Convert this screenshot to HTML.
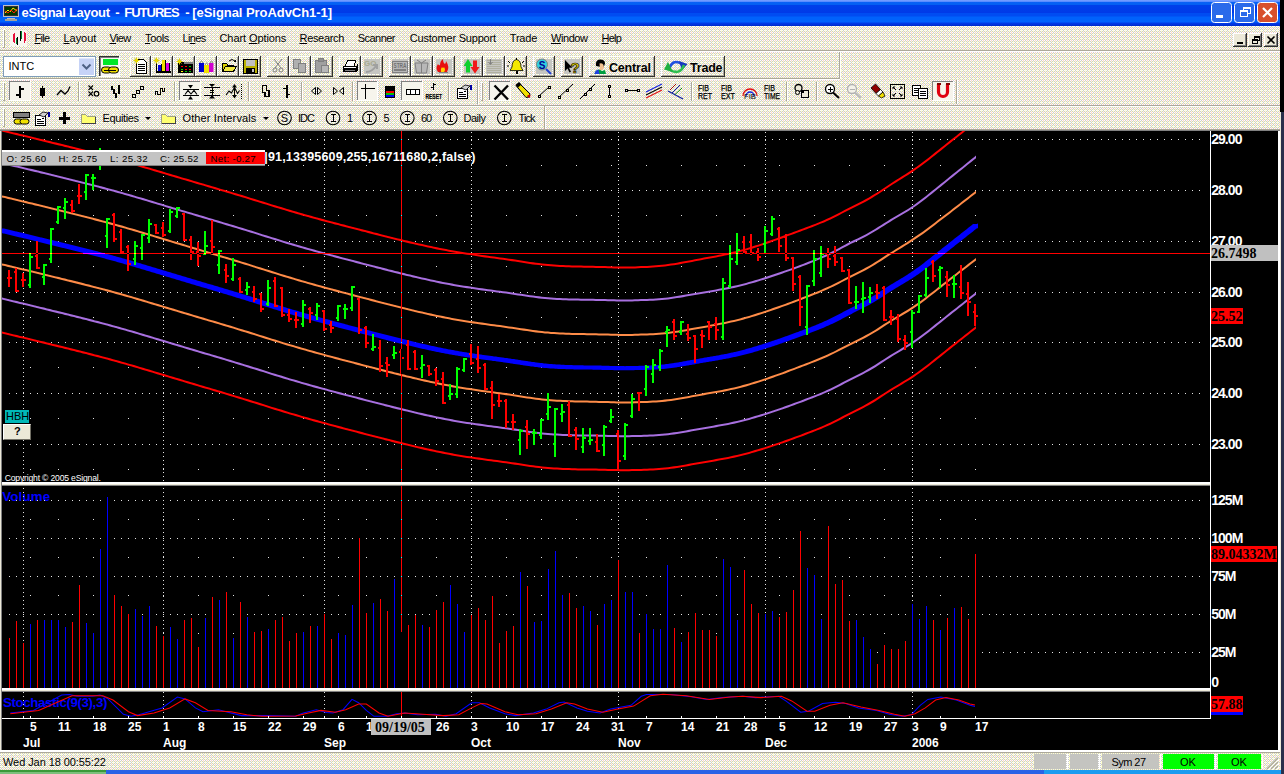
<!DOCTYPE html><html><head><meta charset="utf-8"><title>eSignal</title><style>
*{box-sizing:border-box;margin:0;padding:0}
html,body{width:1284px;height:774px;overflow:hidden;background:#ece9d8}
body{position:relative;font-family:"Liberation Sans",sans-serif;font-size:11px;color:#000}
.abs{position:absolute}
.t{position:absolute;white-space:nowrap;line-height:1}
.axl{position:absolute;left:1211.200px;color:#fff;font-weight:bold;font-size:14px;line-height:13.33px;letter-spacing:-0.95px;white-space:nowrap}
.dl{position:absolute;color:#fff;font-weight:bold;font-size:12px;line-height:12px;white-space:nowrap}
.mi{position:absolute;top:32px;font-size:11px;line-height:13px;white-space:nowrap}
.mi u{text-decoration:underline}
</style></head><body>
<svg class="abs" style="left:0;top:26px" width="1280" height="748" shape-rendering="crispEdges"><defs><pattern id="dz" width="4" height="4" patternUnits="userSpaceOnUse"><rect width="4" height="4" fill="#ccc"/><path d="M0 0h1v1h-1zM2 0h1v1h-1zM0 2h1v1h-1zM2 2h1v1h-1z" fill="#fff"/><path d="M1 0h1v2h-1zM1 3h1v1h-1zM3 1h1v1h-1zM3 3h1v1h-1z" fill="#ffc"/><path d="M3 2h1v1h-1z" fill="#fcc"/></pattern></defs><rect width="1280" height="748" fill="url(#dz)"/></svg>
<div class="abs" style="left:1280px;top:0;width:4px;height:112px;background:#000"></div>
<div class="abs" style="left:1281px;top:112px;width:3px;height:662px;background:#2a2f4a"></div>
<div class="abs" style="left:0;top:0;width:1280px;height:26px;background:linear-gradient(#7aa2ff 0,#5a8cff 1.500px,#0862f6 2px,#0460f2 4.500px,#0040ea 5.500px,#003ae8 12.500px,#004cf2 13.500px,#004cf2 16px,#0062fc 17px,#0062fc 22px,#003ceb 23px,#0030d8 25px,#0028c8 26px)"></div>
<div class="t" style="left:21.5px;top:6px;color:#fff;font-weight:bold;font-size:13px;letter-spacing:-0.305px">eSignal Layout</div>
<div class="t" style="left:115.3px;top:6px;color:#fff;font-weight:bold;font-size:13px;">-</div>
<div class="t" style="left:124.3px;top:6px;color:#fff;font-weight:bold;font-size:13px;letter-spacing:-1.015px">FUTURES</div>
<div class="t" style="left:185.2px;top:6px;color:#fff;font-weight:bold;font-size:13px;">-</div>
<div class="t" style="left:192.3px;top:6px;color:#fff;font-weight:bold;font-size:13px;letter-spacing:-0.058px">[eSignal ProAdvCh1-1]</div>
<div class="abs" style="left:0;top:50px;width:1280px;height:1px;background:#aca899"></div>
<div class="abs" style="left:0;top:51px;width:1280px;height:1px;background:#fff"></div>
<div class="mi" style="left:34.5px;letter-spacing:-0.676px"><u>F</u>ile</div>
<div class="mi" style="left:63.5px;letter-spacing:-0.046px"><u>L</u>ayout</div>
<div class="mi" style="left:109.5px;letter-spacing:-0.615px"><u>V</u>iew</div>
<div class="mi" style="left:145px;letter-spacing:-0.345px"><u>T</u>ools</div>
<div class="mi" style="left:182.5px;letter-spacing:-0.625px">Li<u>n</u>es</div>
<div class="mi" style="left:219.5px;letter-spacing:-0.089px">Chart <u>O</u>ptions</div>
<div class="mi" style="left:299.5px;letter-spacing:-0.326px"><u>R</u>esearch</div>
<div class="mi" style="left:357.8px;letter-spacing:-0.545px">Scanner</div>
<div class="mi" style="left:409.8px;letter-spacing:-0.205px">Customer Support</div>
<div class="mi" style="left:509.8px;letter-spacing:-0.207px">Trade</div>
<div class="mi" style="left:551px;letter-spacing:-0.425px"><u>W</u>indow</div>
<div class="mi" style="left:601.5px;letter-spacing:-0.775px"><u>H</u>elp</div>
<svg width="1284" height="131" viewBox="0 0 1284 131" style="position:absolute;left:0;top:0" shape-rendering="crispEdges">
<rect x="0" y="78" width="840" height="1" fill="#aca899"/>
<rect x="0" y="79" width="840" height="1" fill="#fff"/>
<rect x="839" y="52" width="1" height="27" fill="#aca899"/>
<rect x="840" y="52" width="1" height="27" fill="#fff"/>
<rect x="0" y="105" width="1280" height="1" fill="#aca899"/>
<rect x="0" y="106" width="1280" height="1" fill="#fff"/>
<rect x="956" y="80" width="1" height="24" fill="#aca899"/>
<rect x="957" y="80" width="1" height="24" fill="#fff"/>
<rect x="544" y="106" width="1" height="24" fill="#aca899"/>
<rect x="545" y="106" width="1" height="24" fill="#fff"/>
<rect x="0" y="129" width="1280" height="1" fill="#aca899"/>
<rect x="3" y="29" width="1" height="19" fill="#fff"/>
<rect x="4" y="29" width="1" height="19" fill="#aca899"/>
<rect x="3" y="29" width="2" height="1" fill="#fff"/>
<rect x="3" y="47" width="2" height="1" fill="#aca899"/>
<rect x="10" y="30" width="17" height="16" fill="#f8f6f0"/>
<rect x="13" y="34" width="2" height="8" fill="#e8103c"/>
<rect x="13.5" y="33" width="1" height="10" fill="#e8103c"/>
<rect x="16" y="38" width="2" height="6" fill="#008830"/>
<rect x="16.5" y="37" width="1" height="8" fill="#000"/>
<rect x="19.5" y="31" width="2" height="8" fill="#008830"/>
<rect x="20" y="31" width="1" height="10" fill="#000"/>
<rect x="23.5" y="33" width="2" height="8" fill="#e8103c"/>
<rect x="24" y="32" width="1" height="11" fill="#e8103c"/>
<rect x="3.5" y="56.5" width="92" height="20" fill="#fff" stroke="#7f9db9"/>
<rect x="79" y="58" width="15" height="17" fill="#c6d3f7"/>
<rect x="79" y="58" width="15" height="1" fill="#dfe7fb"/>
<path d="M82.5 64.5l4 4l4-4" fill="none" stroke="#4d6185" stroke-width="2" shape-rendering="auto" />
<rect x="99" y="56" width="21" height="21" fill="#f8f6f0"/>
<rect x="99" y="56" width="21" height="1" fill="#303030"/>
<rect x="99" y="56" width="1" height="21" fill="#303030"/>
<rect x="100" y="57" width="19" height="1" fill="#808080"/>
<rect x="100" y="57" width="1" height="19" fill="#808080"/>
<rect x="119" y="56" width="1" height="21" fill="#fff"/>
<rect x="99" y="76" width="21" height="1" fill="#fff"/>
<rect x="103" y="59" width="15" height="6" fill="#00e828"/>
<path d="M101.5 70a3 3 0 0 1 3-3h4a3 3 0 0 1 0 6h-4a3 3 0 0 1-3-3z" fill="#f0e000" stroke="#000" stroke-width="1" shape-rendering="auto" />
<path d="M108.5 70a3 3 0 0 1 3-3h4a3 3 0 0 1 0 6h-4a3 3 0 0 1-3-3z" fill="#f0e000" stroke="#000" stroke-width="1" shape-rendering="auto" />
<rect x="104" y="69.5" width="12" height="1" fill="#000"/>
<rect x="130" y="56" width="21" height="1" fill="#fff"/>
<rect x="130" y="56" width="1" height="21" fill="#fff"/>
<rect x="150" y="56" width="1" height="21" fill="#303030"/>
<rect x="130" y="76" width="21" height="1" fill="#303030"/>
<rect x="149" y="57" width="1" height="19" fill="#aca899"/>
<rect x="131" y="75" width="19" height="1" fill="#aca899"/>
<rect x="151" y="56" width="22" height="1" fill="#fff"/>
<rect x="151" y="56" width="1" height="21" fill="#fff"/>
<rect x="172" y="56" width="1" height="21" fill="#303030"/>
<rect x="151" y="76" width="22" height="1" fill="#303030"/>
<rect x="171" y="57" width="1" height="19" fill="#aca899"/>
<rect x="152" y="75" width="20" height="1" fill="#aca899"/>
<rect x="173" y="56" width="22" height="1" fill="#fff"/>
<rect x="173" y="56" width="1" height="21" fill="#fff"/>
<rect x="194" y="56" width="1" height="21" fill="#303030"/>
<rect x="173" y="76" width="22" height="1" fill="#303030"/>
<rect x="193" y="57" width="1" height="19" fill="#aca899"/>
<rect x="174" y="75" width="20" height="1" fill="#aca899"/>
<rect x="195" y="56" width="22" height="1" fill="#fff"/>
<rect x="195" y="56" width="1" height="21" fill="#fff"/>
<rect x="216" y="56" width="1" height="21" fill="#303030"/>
<rect x="195" y="76" width="22" height="1" fill="#303030"/>
<rect x="215" y="57" width="1" height="19" fill="#aca899"/>
<rect x="196" y="75" width="20" height="1" fill="#aca899"/>
<rect x="217" y="56" width="22" height="1" fill="#fff"/>
<rect x="217" y="56" width="1" height="21" fill="#fff"/>
<rect x="238" y="56" width="1" height="21" fill="#303030"/>
<rect x="217" y="76" width="22" height="1" fill="#303030"/>
<rect x="237" y="57" width="1" height="19" fill="#aca899"/>
<rect x="218" y="75" width="20" height="1" fill="#aca899"/>
<rect x="239" y="56" width="22" height="1" fill="#fff"/>
<rect x="239" y="56" width="1" height="21" fill="#fff"/>
<rect x="260" y="56" width="1" height="21" fill="#303030"/>
<rect x="239" y="76" width="22" height="1" fill="#303030"/>
<rect x="259" y="57" width="1" height="19" fill="#aca899"/>
<rect x="240" y="75" width="20" height="1" fill="#aca899"/>
<rect x="267" y="56" width="22" height="1" fill="#fff"/>
<rect x="267" y="56" width="1" height="21" fill="#fff"/>
<rect x="288" y="56" width="1" height="21" fill="#303030"/>
<rect x="267" y="76" width="22" height="1" fill="#303030"/>
<rect x="287" y="57" width="1" height="19" fill="#aca899"/>
<rect x="268" y="75" width="20" height="1" fill="#aca899"/>
<rect x="289" y="56" width="22" height="1" fill="#fff"/>
<rect x="289" y="56" width="1" height="21" fill="#fff"/>
<rect x="310" y="56" width="1" height="21" fill="#303030"/>
<rect x="289" y="76" width="22" height="1" fill="#303030"/>
<rect x="309" y="57" width="1" height="19" fill="#aca899"/>
<rect x="290" y="75" width="20" height="1" fill="#aca899"/>
<rect x="311" y="56" width="22" height="1" fill="#fff"/>
<rect x="311" y="56" width="1" height="21" fill="#fff"/>
<rect x="332" y="56" width="1" height="21" fill="#303030"/>
<rect x="311" y="76" width="22" height="1" fill="#303030"/>
<rect x="331" y="57" width="1" height="19" fill="#aca899"/>
<rect x="312" y="75" width="20" height="1" fill="#aca899"/>
<rect x="339" y="56" width="22" height="1" fill="#fff"/>
<rect x="339" y="56" width="1" height="21" fill="#fff"/>
<rect x="360" y="56" width="1" height="21" fill="#303030"/>
<rect x="339" y="76" width="22" height="1" fill="#303030"/>
<rect x="359" y="57" width="1" height="19" fill="#aca899"/>
<rect x="340" y="75" width="20" height="1" fill="#aca899"/>
<rect x="361" y="56" width="22" height="1" fill="#fff"/>
<rect x="361" y="56" width="1" height="21" fill="#fff"/>
<rect x="382" y="56" width="1" height="21" fill="#303030"/>
<rect x="361" y="76" width="22" height="1" fill="#303030"/>
<rect x="381" y="57" width="1" height="19" fill="#aca899"/>
<rect x="362" y="75" width="20" height="1" fill="#aca899"/>
<rect x="389" y="56" width="22" height="1" fill="#fff"/>
<rect x="389" y="56" width="1" height="21" fill="#fff"/>
<rect x="410" y="56" width="1" height="21" fill="#303030"/>
<rect x="389" y="76" width="22" height="1" fill="#303030"/>
<rect x="409" y="57" width="1" height="19" fill="#aca899"/>
<rect x="390" y="75" width="20" height="1" fill="#aca899"/>
<rect x="411" y="56" width="22" height="1" fill="#fff"/>
<rect x="411" y="56" width="1" height="21" fill="#fff"/>
<rect x="432" y="56" width="1" height="21" fill="#303030"/>
<rect x="411" y="76" width="22" height="1" fill="#303030"/>
<rect x="431" y="57" width="1" height="19" fill="#aca899"/>
<rect x="412" y="75" width="20" height="1" fill="#aca899"/>
<rect x="433" y="56" width="22" height="1" fill="#fff"/>
<rect x="433" y="56" width="1" height="21" fill="#fff"/>
<rect x="454" y="56" width="1" height="21" fill="#303030"/>
<rect x="433" y="76" width="22" height="1" fill="#303030"/>
<rect x="453" y="57" width="1" height="19" fill="#aca899"/>
<rect x="434" y="75" width="20" height="1" fill="#aca899"/>
<rect x="461" y="56" width="22" height="1" fill="#fff"/>
<rect x="461" y="56" width="1" height="21" fill="#fff"/>
<rect x="482" y="56" width="1" height="21" fill="#303030"/>
<rect x="461" y="76" width="22" height="1" fill="#303030"/>
<rect x="481" y="57" width="1" height="19" fill="#aca899"/>
<rect x="462" y="75" width="20" height="1" fill="#aca899"/>
<rect x="483" y="56" width="22" height="1" fill="#fff"/>
<rect x="483" y="56" width="1" height="21" fill="#fff"/>
<rect x="504" y="56" width="1" height="21" fill="#303030"/>
<rect x="483" y="76" width="22" height="1" fill="#303030"/>
<rect x="503" y="57" width="1" height="19" fill="#aca899"/>
<rect x="484" y="75" width="20" height="1" fill="#aca899"/>
<rect x="505" y="56" width="22" height="1" fill="#fff"/>
<rect x="505" y="56" width="1" height="21" fill="#fff"/>
<rect x="526" y="56" width="1" height="21" fill="#303030"/>
<rect x="505" y="76" width="22" height="1" fill="#303030"/>
<rect x="525" y="57" width="1" height="19" fill="#aca899"/>
<rect x="506" y="75" width="20" height="1" fill="#aca899"/>
<rect x="533" y="56" width="22" height="1" fill="#fff"/>
<rect x="533" y="56" width="1" height="21" fill="#fff"/>
<rect x="554" y="56" width="1" height="21" fill="#303030"/>
<rect x="533" y="76" width="22" height="1" fill="#303030"/>
<rect x="553" y="57" width="1" height="19" fill="#aca899"/>
<rect x="534" y="75" width="20" height="1" fill="#aca899"/>
<rect x="561" y="56" width="22" height="1" fill="#fff"/>
<rect x="561" y="56" width="1" height="21" fill="#fff"/>
<rect x="582" y="56" width="1" height="21" fill="#303030"/>
<rect x="561" y="76" width="22" height="1" fill="#303030"/>
<rect x="581" y="57" width="1" height="19" fill="#aca899"/>
<rect x="562" y="75" width="20" height="1" fill="#aca899"/>
<rect x="589" y="56" width="66" height="1" fill="#fff"/>
<rect x="589" y="56" width="1" height="21" fill="#fff"/>
<rect x="654" y="56" width="1" height="21" fill="#303030"/>
<rect x="589" y="76" width="66" height="1" fill="#303030"/>
<rect x="653" y="57" width="1" height="19" fill="#aca899"/>
<rect x="590" y="75" width="64" height="1" fill="#aca899"/>
<rect x="661" y="56" width="64" height="1" fill="#fff"/>
<rect x="661" y="56" width="1" height="21" fill="#fff"/>
<rect x="724" y="56" width="1" height="21" fill="#303030"/>
<rect x="661" y="76" width="64" height="1" fill="#303030"/>
<rect x="723" y="57" width="1" height="19" fill="#aca899"/>
<rect x="662" y="75" width="62" height="1" fill="#aca899"/>
<rect x="364" y="59" width="16" height="15" fill="#c6c6c2"/>
<rect x="392" y="59" width="16" height="15" fill="#c6c6c2"/>
<rect x="414" y="59" width="16" height="15" fill="#c6c6c2"/>
<rect x="436" y="59" width="16" height="15" fill="#c6c6c2"/>
<rect x="464" y="59" width="16" height="15" fill="#c6c6c2"/>
<rect x="486" y="59" width="16" height="15" fill="#c6c6c2"/>
<rect x="536" y="59" width="16" height="15" fill="#c6c6c2"/>
<rect x="564" y="59" width="16" height="15" fill="#c6c6c2"/>
<path d="M136.5 59.5h7l3 3v11h-10z" fill="#fff" stroke="#000" stroke-width="1" />
<rect x="138" y="64" width="7" height="1" fill="#000"/>
<rect x="138" y="66" width="7" height="1" fill="#000"/>
<rect x="138" y="68" width="7" height="1" fill="#000"/>
<rect x="138" y="70" width="7" height="1" fill="#000"/>
<line x1="136.5" y1="60.5" x2="133.5" y2="60.5" stroke="#e8d800" stroke-width="1" shape-rendering="auto"/>
<line x1="136.5" y1="60.5" x2="139.5" y2="60.5" stroke="#e8d800" stroke-width="1" shape-rendering="auto"/>
<line x1="136.5" y1="60.5" x2="136.5" y2="57.5" stroke="#e8d800" stroke-width="1" shape-rendering="auto"/>
<line x1="136.5" y1="60.5" x2="136.5" y2="63.5" stroke="#e8d800" stroke-width="1" shape-rendering="auto"/>
<line x1="136.5" y1="60.5" x2="134.5" y2="58.5" stroke="#e8d800" stroke-width="1" shape-rendering="auto"/>
<line x1="136.5" y1="60.5" x2="138.5" y2="62.5" stroke="#e8d800" stroke-width="1" shape-rendering="auto"/>
<line x1="136.5" y1="60.5" x2="134.5" y2="62.5" stroke="#e8d800" stroke-width="1" shape-rendering="auto"/>
<line x1="136.5" y1="60.5" x2="138.5" y2="58.5" stroke="#e8d800" stroke-width="1" shape-rendering="auto"/>
<rect x="156" y="61" width="1" height="12" fill="#000"/>
<rect x="156" y="72" width="15" height="1" fill="#000"/>
<rect x="157" y="71" width="14" height="1" fill="#000"/>
<rect x="158" y="65" width="3" height="6" fill="#0000e0"/>
<rect x="162" y="60" width="3" height="11" fill="#f0e000"/>
<rect x="166" y="63" width="3" height="8" fill="#e000e0"/>
<rect x="161" y="64" width="1" height="7" fill="#000"/>
<rect x="165" y="60" width="1" height="11" fill="#000"/>
<rect x="169" y="63" width="1" height="8" fill="#000"/>
<line x1="156.5" y1="60.5" x2="153.5" y2="60.5" stroke="#e8d800" stroke-width="1" shape-rendering="auto"/>
<line x1="156.5" y1="60.5" x2="159.5" y2="60.5" stroke="#e8d800" stroke-width="1" shape-rendering="auto"/>
<line x1="156.5" y1="60.5" x2="156.5" y2="57.5" stroke="#e8d800" stroke-width="1" shape-rendering="auto"/>
<line x1="156.5" y1="60.5" x2="156.5" y2="63.5" stroke="#e8d800" stroke-width="1" shape-rendering="auto"/>
<line x1="156.5" y1="60.5" x2="154.5" y2="58.5" stroke="#e8d800" stroke-width="1" shape-rendering="auto"/>
<line x1="156.5" y1="60.5" x2="158.5" y2="62.5" stroke="#e8d800" stroke-width="1" shape-rendering="auto"/>
<line x1="156.5" y1="60.5" x2="154.5" y2="62.5" stroke="#e8d800" stroke-width="1" shape-rendering="auto"/>
<line x1="156.5" y1="60.5" x2="158.5" y2="58.5" stroke="#e8d800" stroke-width="1" shape-rendering="auto"/>
<rect x="178" y="62" width="15" height="11" fill="#000"/>
<rect x="184" y="62" width="9" height="2" fill="#808080"/>
<rect x="181" y="66" width="2" height="1" fill="#f00"/>
<rect x="185" y="66" width="2" height="1" fill="#f00"/>
<rect x="189" y="66" width="2" height="1" fill="#0c0"/>
<rect x="181" y="69" width="2" height="1" fill="#0c0"/>
<rect x="185" y="69" width="2" height="1" fill="#f00"/>
<rect x="189" y="69" width="2" height="1" fill="#f00"/>
<rect x="181" y="71" width="2" height="1" fill="#ff0"/>
<rect x="185" y="71" width="2" height="1" fill="#0c0"/>
<rect x="189" y="71" width="2" height="1" fill="#0c0"/>
<line x1="179.5" y1="61.5" x2="176.5" y2="61.5" stroke="#e8d800" stroke-width="1" shape-rendering="auto"/>
<line x1="179.5" y1="61.5" x2="182.5" y2="61.5" stroke="#e8d800" stroke-width="1" shape-rendering="auto"/>
<line x1="179.5" y1="61.5" x2="179.5" y2="58.5" stroke="#e8d800" stroke-width="1" shape-rendering="auto"/>
<line x1="179.5" y1="61.5" x2="179.5" y2="64.5" stroke="#e8d800" stroke-width="1" shape-rendering="auto"/>
<line x1="179.5" y1="61.5" x2="177.5" y2="59.5" stroke="#e8d800" stroke-width="1" shape-rendering="auto"/>
<line x1="179.5" y1="61.5" x2="181.5" y2="63.5" stroke="#e8d800" stroke-width="1" shape-rendering="auto"/>
<line x1="179.5" y1="61.5" x2="177.5" y2="63.5" stroke="#e8d800" stroke-width="1" shape-rendering="auto"/>
<line x1="179.5" y1="61.5" x2="181.5" y2="59.5" stroke="#e8d800" stroke-width="1" shape-rendering="auto"/>
<path d="M199 63h5v9h-5z" fill="#0000d0" shape-rendering="auto" />
<path d="M204 65h5v8h-5z" fill="#f0e000" shape-rendering="auto" />
<path d="M209 63h4.5v9h-4.5z" fill="#d000d0" shape-rendering="auto" />
<path d="M200 63q1.5-4 3 0M205 65q1.5-4 3 0M210 63q1.5-4 3 0" fill="none" stroke="#808080" stroke-width="1" shape-rendering="auto" />
<path d="M222.5 71.5v-8h4l1 1.500h6v2" fill="#d8d000" stroke="#000" stroke-width="1" />
<path d="M222.5 71.5l3-5h11l-3 5z" fill="#f0e840" stroke="#000" stroke-width="1" />
<path d="M229 61q3-3 6 0" fill="none" stroke="#000" stroke-width="1" shape-rendering="auto" />
<path d="M233.500 61.500h2v-2" fill="none" stroke="#000" stroke-width="1" />
<rect x="243.5" y="59.5" width="14" height="14" fill="#b8b000" stroke="#000"/>
<rect x="246" y="60" width="9" height="6" fill="#c0c0c0"/>
<rect x="246" y="68" width="9" height="5" fill="#000"/>
<rect x="252" y="69" width="2" height="3" fill="#c0c0c0"/>
<line x1="274" y1="59" x2="281" y2="68" stroke="#808080" stroke-width="1" shape-rendering="auto"/>
<line x1="282" y1="59" x2="275" y2="68" stroke="#808080" stroke-width="1" shape-rendering="auto"/>
<circle cx="275" cy="70" r="2" fill="none" stroke="#808080" shape-rendering="auto"/>
<circle cx="281" cy="70" r="2" fill="none" stroke="#808080" shape-rendering="auto"/>
<rect x="293.5" y="59.5" width="7" height="9" fill="#b0b0b0" stroke="#808080"/>
<rect x="298.5" y="63.5" width="7" height="9" fill="#b0b0b0" stroke="#808080"/>
<rect x="315.5" y="60.5" width="11" height="12" fill="#a0a0a0" stroke="#808080"/>
<rect x="318.5" y="58.5" width="5" height="3" fill="#909090" stroke="#808080"/>
<rect x="321.5" y="65.5" width="7" height="7" fill="#b8b8b8" stroke="#808080"/>
<path d="M345 66l3-6h8l-2 6z" fill="#fff" stroke="#000" stroke-width="1" />
<rect x="343" y="66" width="14" height="6" fill="#000"/>
<rect x="344" y="67" width="12" height="1" fill="#fff"/>
<rect x="345" y="70" width="10" height="1" fill="#808080"/>
<rect x="357" y="64" width="1" height="7" fill="#000"/>
<text x="364" y="66" font-family="Liberation Sans" font-size="8" font-weight="bold" fill="#a8a890">GO</text>
<path d="M366 72q6 0 10-6M373 65h4v4" fill="none" stroke="#a0a0a0" stroke-width="2" shape-rendering="auto" />
<rect x="392.5" y="61.5" width="15" height="11" fill="#b8b8b8" stroke="#808080"/>
<rect x="394" y="69" width="12" height="2" fill="#808080"/>
<text x="393.5" y="67.500" font-family="Liberation Sans" font-size="7" font-weight="bold" fill="#707070" textLength="13" lengthAdjust="spacingAndGlyphs">STRA</text>
<path d="M415 63h13l-1.500 10h-10z" fill="#b8b8b8" stroke="#808080" stroke-width="1" shape-rendering="auto" />
<path d="M421.500 63v10M417 60l4.500 3l4.500-3" fill="none" stroke="#808080" stroke-width="1" shape-rendering="auto" />
<path d="M438 72q-3-4 0-8q1 2 2 1q0-4 3-6q0 4 2 5q1-1 1-3q4 6 1 11z" fill="#e81010" shape-rendering="auto" />
<path d="M441 72q-1-3 1-5q1 2 2 0q2 3 0 5z" fill="#ffd000" shape-rendering="auto" />
<rect x="439" y="72" width="9" height="1" fill="#808080"/>
<path d="M463.500 66l4.500-7l4.500 7h-2.500v6.500h-4v-6.500z" fill="#10d030" shape-rendering="auto" />
<path d="M470.500 67h2.500v-6.500h4v6.500h2.500l-4.500 6.500z" fill="#f01818" shape-rendering="auto" />
<rect x="487" y="60" width="14" height="1" fill="#b0b0a0"/>
<rect x="487" y="62" width="14" height="1" fill="#b0b0a0"/>
<rect x="487" y="64" width="14" height="1" fill="#b0b0a0"/>
<rect x="487" y="66" width="14" height="1" fill="#b0b0a0"/>
<rect x="487" y="68" width="14" height="1" fill="#b0b0a0"/>
<rect x="487" y="70" width="14" height="1" fill="#b0b0a0"/>
<rect x="487" y="72" width="14" height="1" fill="#b0b0a0"/>
<path d="M490.500 59v5M488.500 62l2 2.500l2-2.500" fill="none" stroke="#808080" stroke-width="1" shape-rendering="auto" />
<path d="M516.500 59.500q-4.500 1-4.500 7.500l-2 3.500h13l-2-3.500q0-6.500-4.500-7.500z" fill="#f4e800" stroke="#000" stroke-width="0.8" shape-rendering="auto" />
<rect x="515.5" y="71" width="2" height="2.5" fill="#000"/>
<rect x="516" y="58" width="1" height="2" fill="#000"/>
<line x1="508" y1="61" x2="510" y2="63" stroke="#000" stroke-width="1" shape-rendering="auto"/>
<line x1="524" y1="61" x2="522" y2="63" stroke="#000" stroke-width="1" shape-rendering="auto"/>
<line x1="507" y1="66" x2="509" y2="66" stroke="#000" stroke-width="1" shape-rendering="auto"/>
<line x1="523" y1="66" x2="525" y2="66" stroke="#000" stroke-width="1" shape-rendering="auto"/>
<circle cx="542" cy="64.500" r="5.500" fill="#30d0e0" stroke="#808080" shape-rendering="auto"/>
<text x="538.700" y="68.500" font-family="Liberation Sans" font-size="10" font-weight="bold" fill="#000090">S</text>
<line x1="546" y1="69" x2="551" y2="74" stroke="#2040d0" stroke-width="2" shape-rendering="auto"/>
<path d="M565 60v11l2.500-2.500l2 4l1.500-.8l-2-4h3.500z" fill="#000" shape-rendering="auto" />
<text x="570.500" y="73" font-family="Liberation Sans" font-size="15" font-weight="bold" fill="#f0e000" stroke="#000" stroke-width=".7">?</text>
<path d="M596 66q-1-6 4-6.500q5 0 5 4l-1.500 4z" fill="#000" shape-rendering="auto" />
<path d="M599.500 63.500q3-1 4 1.500l.5 3l-2 2h-2z" fill="#f0c090" shape-rendering="auto" />
<path d="M594.500 74q.5-4 5-4.500l2.500 1.500l3-1l1 4z" fill="#00a040" shape-rendering="auto" />
<path d="M594.500 74q.5-4 4-4.500l1 4.500z" fill="#2040e0" shape-rendering="auto" />
<path d="M669 70Q672 58 682 64" fill="none" stroke="#2050e0" stroke-width="2.6" shape-rendering="auto" />
<path d="M679 61l8.500 3l-5.500 6.500z" fill="#1838c0" shape-rendering="auto" />
<path d="M684 65Q680 76 669 69.500" fill="none" stroke="#30c050" stroke-width="2.6" shape-rendering="auto" />
<path d="M673 72l-9-2.500l4-7.500z" fill="#20b040" shape-rendering="auto" />
<rect x="3" y="82" width="1" height="19" fill="#fff"/>
<rect x="4" y="82" width="1" height="19" fill="#aca899"/>
<rect x="3" y="82" width="2" height="1" fill="#fff"/>
<rect x="3" y="100" width="2" height="1" fill="#aca899"/>
<rect x="9" y="81" width="22" height="20" fill="#f6f4ec"/>
<rect x="9" y="81" width="22" height="1" fill="#808080"/>
<rect x="9" y="81" width="1" height="20" fill="#808080"/>
<rect x="30" y="81" width="1" height="20" fill="#fff"/>
<rect x="9" y="100" width="22" height="1" fill="#fff"/>
<rect x="19" y="86" width="2" height="12" fill="#000"/>
<rect x="21" y="88" width="3" height="2" fill="#000"/>
<rect x="16" y="94" width="3" height="2" fill="#000"/>
<rect x="40" y="88" width="5" height="8" fill="#000"/>
<rect x="42" y="86" width="1" height="12" fill="#000"/>
<path d="M57 95l4-4.500l4 3.500l3-3l2-4.500" fill="none" stroke="#000" stroke-width="1.3" shape-rendering="auto" />
<rect x="78" y="82" width="1" height="19" fill="#aca899"/>
<rect x="79" y="82" width="1" height="19" fill="#fff"/>
<path d="M88.5 85.5l4.500 4.500M93.0 85.5l-4.500 4.500" fill="none" stroke="#000" stroke-width="1.1" shape-rendering="auto" />
<path d="M88.5 91.5l4.500 4.500M93.0 91.5l-4.500 4.500" fill="none" stroke="#000" stroke-width="1.1" shape-rendering="auto" />
<circle cx="96.500" cy="93.700" r="2.300" fill="none" stroke="#000" stroke-width="1.200" shape-rendering="auto"/>
<rect x="111" y="86" width="2" height="4" fill="#000"/>
<rect x="113" y="89" width="2" height="5" fill="#000"/>
<rect x="115" y="93" width="2" height="5" fill="#000"/>
<rect x="118" y="85" width="2" height="9" fill="#000"/>
<rect x="132.5" y="94.5" width="3" height="3" fill="none" stroke="#000"/>
<rect x="136.5" y="90.5" width="3" height="3" fill="none" stroke="#000"/>
<rect x="140.5" y="86.5" width="3" height="3" fill="none" stroke="#000"/>
<path d="M155.500 94.500v-3h2v3h2.500v-6h2.500v3h2v-4" fill="none" stroke="#000" stroke-width="1" />
<rect x="174" y="82" width="1" height="19" fill="#aca899"/>
<rect x="175" y="82" width="1" height="19" fill="#fff"/>
<rect x="179" y="81" width="22" height="20" fill="#f6f4ec"/>
<rect x="179" y="81" width="22" height="1" fill="#808080"/>
<rect x="179" y="81" width="1" height="20" fill="#808080"/>
<rect x="200" y="81" width="1" height="20" fill="#fff"/>
<rect x="179" y="100" width="22" height="1" fill="#fff"/>
<rect x="183" y="89" width="16" height="1" fill="#000"/>
<rect x="183" y="95" width="16" height="1" fill="#000"/>
<path d="M185 94.500l3-4l3 3.500l3-3.500l3 4" fill="none" stroke="#000" stroke-width="1.1" shape-rendering="auto" />
<path d="M188 85h5l-2.500 3.500zM188 99.500h5l-2.500-3.500z" fill="#000" shape-rendering="auto" />
<rect x="204" y="87" width="16" height="1" fill="#000"/>
<rect x="204" y="95" width="16" height="1" fill="#000"/>
<rect x="211.5" y="87" width="1" height="8" fill="#000"/>
<path d="M209 84h6l-3 3zM209 98.500h6l-3-3.500z" fill="#000" shape-rendering="auto" />
<rect x="210" y="90" width="4" height="1" fill="#000"/>
<rect x="210" y="92" width="4" height="1" fill="#000"/>
<path d="M226 95l3-4l2.500 2l3-5.500l3 6l2-3" fill="none" stroke="#000" stroke-width="1.1" shape-rendering="auto" />
<path d="M232 87.500h5l-2.500-3.500zM232 95h5l-2.500 3.500z" fill="#000" shape-rendering="auto" />
<rect x="234" y="87" width="1" height="8" fill="#000"/>
<rect x="241" y="84" width="1" height="1" fill="#000"/>
<rect x="241" y="86" width="1" height="1" fill="#000"/>
<rect x="241" y="88" width="1" height="1" fill="#000"/>
<rect x="241" y="90" width="1" height="1" fill="#000"/>
<rect x="241" y="92" width="1" height="1" fill="#000"/>
<rect x="241" y="94" width="1" height="1" fill="#000"/>
<rect x="241" y="96" width="1" height="1" fill="#000"/>
<rect x="241" y="98" width="1" height="1" fill="#000"/>
<rect x="248" y="82" width="1" height="19" fill="#aca899"/>
<rect x="249" y="82" width="1" height="19" fill="#fff"/>
<path d="M262.500 85.500h4v5h2.500v6h-4v-4h-2.500z" fill="none" stroke="#000" stroke-width="1.3" />
<rect x="286" y="85" width="2" height="13" fill="#000"/>
<rect x="283" y="88" width="3" height="1" fill="#000"/>
<rect x="288" y="94" width="2" height="1" fill="#000"/>
<rect x="301" y="82" width="1" height="19" fill="#aca899"/>
<rect x="302" y="82" width="1" height="19" fill="#fff"/>
<path d="M311.500 91l4-3.500v7zM321.500 91l-4-3.500v7z" fill="none" stroke="#000" stroke-width="1" shape-rendering="auto" />
<path d="M333.500 87.500l4 3.500l-4 3.500zM343.500 87.500l-4 3.500l4 3.500z" fill="none" stroke="#000" stroke-width="1" shape-rendering="auto" />
<rect x="352" y="82" width="1" height="19" fill="#aca899"/>
<rect x="353" y="82" width="1" height="19" fill="#fff"/>
<rect x="357" y="81" width="21" height="20" fill="#f6f4ec"/>
<rect x="357" y="81" width="21" height="1" fill="#808080"/>
<rect x="357" y="81" width="1" height="20" fill="#808080"/>
<rect x="377" y="81" width="1" height="20" fill="#fff"/>
<rect x="357" y="100" width="21" height="1" fill="#fff"/>
<rect x="365" y="84" width="1" height="15" fill="#000"/>
<rect x="361" y="88" width="14" height="1" fill="#000"/>
<rect x="385" y="86" width="10" height="12" fill="#000"/>
<rect x="386" y="91" width="8" height="2" fill="#f00000"/>
<rect x="386" y="93" width="8" height="2" fill="#00c000"/>
<rect x="386" y="95" width="8" height="2" fill="#0000f0"/>
<rect x="401" y="81" width="22" height="20" fill="#f6f4ec"/>
<rect x="401" y="81" width="22" height="1" fill="#808080"/>
<rect x="401" y="81" width="1" height="20" fill="#808080"/>
<rect x="422" y="81" width="1" height="20" fill="#fff"/>
<rect x="401" y="100" width="22" height="1" fill="#fff"/>
<rect x="406.5" y="89.5" width="13" height="5" fill="#fff" stroke="#000"/>
<rect x="410" y="89" width="1" height="6" fill="#000"/>
<rect x="415" y="89" width="1" height="6" fill="#000"/>
<rect x="433" y="83" width="1" height="7" fill="#000"/>
<rect x="434" y="84" width="2" height="1" fill="#000"/>
<rect x="431" y="87" width="2" height="1" fill="#000"/>
<text x="425.500" y="98.500" font-family="Liberation Sans" font-size="7" font-weight="bold" fill="#000" stroke="#000" stroke-width=".2" textLength="16.500" lengthAdjust="spacingAndGlyphs">RESET</text>
<rect x="448" y="82" width="1" height="19" fill="#aca899"/>
<rect x="449" y="82" width="1" height="19" fill="#fff"/>
<rect x="457.5" y="88.5" width="10" height="10" fill="#fff" stroke="#000"/>
<rect x="459" y="92" width="4" height="1" fill="#000"/>
<rect x="459" y="94" width="7" height="1" fill="#000"/>
<rect x="459" y="96" width="7" height="1" fill="#000"/>
<rect x="464" y="91" width="2" height="1" fill="#000"/>
<path d="M461 88l4-3l5 1l-4 4z" fill="#d0d0d0" stroke="#000" stroke-width="0.8" shape-rendering="auto" />
<rect x="470" y="85" width="2" height="5" fill="#0000a0"/>
<rect x="477" y="80" width="1" height="24" fill="#aca899"/>
<rect x="478" y="80" width="1" height="24" fill="#fff"/>
<rect x="481" y="82" width="1" height="19" fill="#fff"/>
<rect x="482" y="82" width="1" height="19" fill="#aca899"/>
<rect x="481" y="82" width="2" height="1" fill="#fff"/>
<rect x="481" y="100" width="2" height="1" fill="#aca899"/>
<rect x="489" y="81" width="22" height="20" fill="#f6f4ec"/>
<rect x="489" y="81" width="22" height="1" fill="#808080"/>
<rect x="489" y="81" width="1" height="20" fill="#808080"/>
<rect x="510" y="81" width="1" height="20" fill="#fff"/>
<rect x="489" y="100" width="22" height="1" fill="#fff"/>
<path d="M494.500 85.500l13.500 14M508 85.500l-13.500 14" fill="none" stroke="#000" stroke-width="2.4" shape-rendering="auto" />
<path d="M516 85.500l3-2.500l11 11l-1 3l-3 .5z" fill="#f0e000" stroke="#000" stroke-width="1" shape-rendering="auto" />
<path d="M515.500 85l3.500-3l2.500 2.500l-3.500 3z" fill="#000" shape-rendering="auto" />
<path d="M527.500 96l2.500-1l-.5 2.500z" fill="#c00000" stroke="#c00000" stroke-width="1" shape-rendering="auto" />
<line x1="539" y1="96" x2="549" y2="87" stroke="#000" stroke-width="1" shape-rendering="auto"/>
<rect x="538.5" y="95.5" width="2" height="2" fill="#ece9d8" stroke="#000"/>
<rect x="548.5" y="86.5" width="2" height="2" fill="#ece9d8" stroke="#000"/>
<line x1="558" y1="98" x2="573" y2="84" stroke="#000" stroke-width="1" shape-rendering="auto"/>
<rect x="558.5" y="96.5" width="2" height="2" fill="#ece9d8" stroke="#000"/>
<rect x="566.5" y="89.5" width="2" height="2" fill="#ece9d8" stroke="#000"/>
<line x1="580" y1="99" x2="595" y2="84" stroke="#000" stroke-width="1" shape-rendering="auto"/>
<rect x="584.5" y="93.5" width="2" height="2" fill="#ece9d8" stroke="#000"/>
<rect x="589.5" y="88.5" width="2" height="2" fill="#ece9d8" stroke="#000"/>
<rect x="609" y="86" width="1" height="11" fill="#000"/>
<rect x="608.5" y="85.5" width="2" height="2" fill="#ece9d8" stroke="#000"/>
<rect x="608.5" y="95.5" width="2" height="2" fill="#ece9d8" stroke="#000"/>
<rect x="626" y="90" width="13" height="1" fill="#000"/>
<rect x="625.5" y="89.5" width="2" height="2" fill="#ece9d8" stroke="#000"/>
<rect x="637.5" y="89.5" width="2" height="2" fill="#ece9d8" stroke="#000"/>
<line x1="646" y1="92" x2="662" y2="84" stroke="#1020e0" stroke-width="1.2" shape-rendering="auto"/>
<line x1="646" y1="95" x2="662" y2="87" stroke="#000" stroke-width="1.2" shape-rendering="auto"/>
<line x1="646" y1="98" x2="662" y2="90" stroke="#e01010" stroke-width="1.2" shape-rendering="auto"/>
<line x1="668" y1="91" x2="683" y2="99" stroke="#1020a0" stroke-width="1.2" shape-rendering="auto"/>
<line x1="672" y1="93" x2="680" y2="85" stroke="#1020a0" stroke-width="1" shape-rendering="auto"/>
<line x1="675" y1="94.5" x2="682" y2="88" stroke="#108010" stroke-width="1" shape-rendering="auto"/>
<line x1="670" y1="90" x2="676" y2="84" stroke="#a01010" stroke-width="1" shape-rendering="auto"/>
<rect x="691" y="82" width="1" height="19" fill="#aca899"/>
<rect x="692" y="82" width="1" height="19" fill="#fff"/>
<text x="698" y="90.500" font-family="Liberation Sans" font-size="8.500" fill="#000" stroke="#000" stroke-width=".25" textLength="11" lengthAdjust="spacingAndGlyphs" shape-rendering="auto">FIB</text>
<text x="698" y="98.500" font-family="Liberation Sans" font-size="8.500" fill="#000" stroke="#000" stroke-width=".25" textLength="14" lengthAdjust="spacingAndGlyphs" shape-rendering="auto">RET</text>
<text x="721" y="90.500" font-family="Liberation Sans" font-size="8.500" fill="#000" stroke="#000" stroke-width=".25" textLength="11" lengthAdjust="spacingAndGlyphs" shape-rendering="auto">FIB</text>
<text x="721" y="98.500" font-family="Liberation Sans" font-size="8.500" fill="#000" stroke="#000" stroke-width=".25" textLength="14" lengthAdjust="spacingAndGlyphs" shape-rendering="auto">EXT</text>
<path d="M743 96a7 7 0 0 1 14 0" fill="none" stroke="#e01010" stroke-width="1.3" shape-rendering="auto" />
<path d="M746 96a4 4 0 0 1 8 0" fill="none" stroke="#1020e0" stroke-width="1.3" shape-rendering="auto" />
<text x="744" y="99" font-family="Liberation Sans" font-size="8" fill="#000" textLength="12" lengthAdjust="spacingAndGlyphs">FIB</text>
<text x="764" y="90.500" font-family="Liberation Sans" font-size="8.500" fill="#000" stroke="#000" stroke-width=".25" textLength="11" lengthAdjust="spacingAndGlyphs" shape-rendering="auto">FIB</text>
<text x="764" y="98.500" font-family="Liberation Sans" font-size="8.500" fill="#000" stroke="#000" stroke-width=".25" textLength="16" lengthAdjust="spacingAndGlyphs" shape-rendering="auto">TIME</text>
<rect x="786" y="82" width="1" height="19" fill="#aca899"/>
<rect x="787" y="82" width="1" height="19" fill="#fff"/>
<circle cx="798.500" cy="88" r="3.500" fill="#ece9d8" stroke="#000" stroke-width="1.300" shape-rendering="auto"/>
<rect x="801.5" y="90.5" width="7" height="7" fill="#ece9d8" stroke="#000"/>
<rect x="802" y="91" width="2" height="2" fill="#000"/>
<circle cx="797.500" cy="92.500" r="2" fill="#ece9d8" stroke="#000" shape-rendering="auto"/>
<rect x="816" y="82" width="1" height="19" fill="#aca899"/>
<rect x="817" y="82" width="1" height="19" fill="#fff"/>
<circle cx="830" cy="89" r="4.500" fill="#fff" stroke="#000" stroke-width="1.300" shape-rendering="auto"/>
<rect x="828" y="89" width="5" height="1" fill="#000"/>
<rect x="830" y="87" width="1" height="5" fill="#000"/>
<line x1="833" y1="92.5" x2="839" y2="98" stroke="#000" stroke-width="2" shape-rendering="auto"/>
<circle cx="852" cy="89" r="4.500" fill="#f4f2ea" stroke="#b0b0b0" stroke-width="1.300" shape-rendering="auto"/>
<rect x="850" y="89" width="5" height="1" fill="#b0b0b0"/>
<line x1="855" y1="92.5" x2="861" y2="98" stroke="#b8b8b8" stroke-width="2" shape-rendering="auto"/>
<path d="M871 88l4.500-4l5 5.500l-4.500 4z" fill="#900000" stroke="#000" stroke-width="0.8" shape-rendering="auto" />
<path d="M876 93.500l4.500-4l2.500 2.500l-4.500 4z" fill="#fff" stroke="#000" stroke-width="0.8" shape-rendering="auto" />
<path d="M878.500 96l4.500-4l2 4l-3.500 2z" fill="#f0e000" stroke="#000" stroke-width="0.8" shape-rendering="auto" />
<rect x="890.5" y="84.5" width="14" height="14" fill="none" stroke="#000"/>
<path d="M893 87l3 3M893 87h2M893 87v2" fill="none" stroke="#000" stroke-width="1" shape-rendering="auto" />
<path d="M902 87l-3 3M902 87h-2M902 87v2" fill="none" stroke="#000" stroke-width="1" shape-rendering="auto" />
<path d="M893 96l3 -3M893 96h2M893 96v-2" fill="none" stroke="#000" stroke-width="1" shape-rendering="auto" />
<path d="M902 96l-3 -3M902 96h-2M902 96v-2" fill="none" stroke="#000" stroke-width="1" shape-rendering="auto" />
<path d="M912.500 85.500h8v10h-8z" fill="#fff" stroke="#000" stroke-width="1" />
<path d="M918.500 88.500h9v10h-9z" fill="#fff" stroke="#000" stroke-width="1" />
<rect x="920" y="91" width="6" height="1" fill="#000"/>
<rect x="920" y="93" width="6" height="1" fill="#000"/>
<rect x="920" y="95" width="6" height="1" fill="#000"/>
<rect x="914" y="88" width="4" height="1" fill="#000"/>
<rect x="914" y="90" width="4" height="1" fill="#000"/>
<rect x="914" y="92" width="4" height="1" fill="#000"/>
<rect x="932" y="81" width="22" height="20" fill="#f6f4ec"/>
<rect x="932" y="81" width="22" height="1" fill="#808080"/>
<rect x="932" y="81" width="1" height="20" fill="#808080"/>
<rect x="953" y="81" width="1" height="20" fill="#fff"/>
<rect x="932" y="100" width="22" height="1" fill="#fff"/>
<path d="M938.500 84v8a4.500 4.500 0 0 0 9 0v-8" fill="none" stroke="#e00010" stroke-width="3.2" shape-rendering="auto" />
<rect x="937" y="83" width="4" height="2" fill="#800000"/>
<rect x="946" y="83" width="4" height="2" fill="#800000"/>
<rect x="3" y="108" width="1" height="19" fill="#fff"/>
<rect x="4" y="108" width="1" height="19" fill="#aca899"/>
<rect x="3" y="108" width="2" height="1" fill="#fff"/>
<rect x="3" y="126" width="2" height="1" fill="#aca899"/>
<rect x="13.5" y="112.5" width="16" height="5" fill="#808080" stroke="#000"/>
<path d="M14 121.500a2.500 2.500 0 0 1 2.500-2.500h4a2.500 2.500 0 0 1 0 5h-4a2.500 2.500 0 0 1-2.500-2.500z" fill="#f0e000" stroke="#000" stroke-width="1" shape-rendering="auto" />
<path d="M20 121.500a2.500 2.500 0 0 1 2.500-2.500h4a2.500 2.500 0 0 1 0 5h-4a2.500 2.500 0 0 1-2.500-2.500z" fill="#f0e000" stroke="#000" stroke-width="1" shape-rendering="auto" />
<rect x="35.5" y="115.5" width="10" height="10" fill="#fff" stroke="#000"/>
<rect x="37" y="119" width="4" height="1" fill="#000"/>
<rect x="37" y="121" width="7" height="1" fill="#000"/>
<rect x="37" y="123" width="7" height="1" fill="#000"/>
<rect x="42" y="118" width="2" height="1" fill="#000"/>
<path d="M39 115l4-3l5 1l-4 4z" fill="#d0d0d0" stroke="#000" stroke-width="0.8" shape-rendering="auto" />
<rect x="48" y="112" width="2" height="5" fill="#0000a0"/>
<rect x="63" y="112" width="3" height="12" fill="#000"/>
<rect x="59" y="116.5" width="11" height="3" fill="#000"/>
<path d="M81.5 123.5v-9h4l1.500 1.500h8v7.500z" fill="#ffff70" stroke="#a0a080" stroke-width="1" />
<rect x="82" y="123" width="14" height="1" fill="#404040"/>
<rect x="95" y="117" width="1" height="7" fill="#404040"/>
<path d="M161.5 123.5v-9h4l1.500 1.500h8v7.500z" fill="#ffff70" stroke="#a0a080" stroke-width="1" />
<rect x="162" y="123" width="14" height="1" fill="#404040"/>
<rect x="175" y="117" width="1" height="7" fill="#404040"/>
<path d="M145 117h6l-3 3z" fill="#000" shape-rendering="auto" />
<path d="M263 117h6l-3 3z" fill="#000" shape-rendering="auto" />
<circle cx="284.5" cy="118" r="6.800" fill="none" stroke="#000" stroke-width="1.100" shape-rendering="auto"/>
<text x="284.5" y="122" font-family="Liberation Sans" font-size="11" fill="#000" text-anchor="middle" shape-rendering="auto">S</text>
<circle cx="333" cy="118" r="6.800" fill="none" stroke="#000" stroke-width="1.100" shape-rendering="auto"/>
<rect x="332.5" y="114" width="1" height="8" fill="#000"/>
<rect x="330.5" y="114" width="5" height="1" fill="#000"/>
<rect x="330.5" y="121" width="5" height="1" fill="#000"/>
<circle cx="369.5" cy="118" r="6.800" fill="none" stroke="#000" stroke-width="1.100" shape-rendering="auto"/>
<rect x="369.0" y="114" width="1" height="8" fill="#000"/>
<rect x="367.0" y="114" width="5" height="1" fill="#000"/>
<rect x="367.0" y="121" width="5" height="1" fill="#000"/>
<circle cx="407.3" cy="118" r="6.800" fill="none" stroke="#000" stroke-width="1.100" shape-rendering="auto"/>
<rect x="406.8" y="114" width="1" height="8" fill="#000"/>
<rect x="404.8" y="114" width="5" height="1" fill="#000"/>
<rect x="404.8" y="121" width="5" height="1" fill="#000"/>
<circle cx="450.3" cy="118" r="6.800" fill="none" stroke="#000" stroke-width="1.100" shape-rendering="auto"/>
<rect x="449.8" y="114" width="1" height="8" fill="#000"/>
<rect x="447.8" y="114" width="5" height="1" fill="#000"/>
<rect x="447.8" y="121" width="5" height="1" fill="#000"/>
<circle cx="504.3" cy="118" r="6.800" fill="none" stroke="#000" stroke-width="1.100" shape-rendering="auto"/>
<rect x="503.8" y="114" width="1" height="8" fill="#000"/>
<rect x="501.8" y="114" width="5" height="1" fill="#000"/>
<rect x="501.8" y="121" width="5" height="1" fill="#000"/>
<rect x="3.5" y="5.5" width="15" height="11" fill="#303030" stroke="#c0c0c0"/>
<rect x="5" y="7" width="12" height="8" fill="#003800"/>
<path d="M5 13l3-3l2 2l3-4l4 3" fill="none" stroke="#ffe000" stroke-width="1" shape-rendering="auto" />
<path d="M5 11l3 2l3-3l3 3l3-4" fill="none" stroke="#ff2000" stroke-width="1" shape-rendering="auto" />
<rect x="7" y="18" width="8" height="1" fill="#c0c0c0"/>
<rect x="5" y="19" width="12" height="2" fill="#a0a0a0"/>
<rect x="1211.5" y="2.500" width="20" height="20" rx="3" fill="#2a6aea" stroke="#fff" shape-rendering="auto"/>
<rect x="1234.5" y="2.500" width="20" height="20" rx="3" fill="#2a6aea" stroke="#fff" shape-rendering="auto"/>
<rect x="1257.5" y="2.500" width="20" height="20" rx="3" fill="#d8502c" stroke="#fff" shape-rendering="auto"/>
<path d="M1263 8l9 9M1272 8l-9 9" fill="none" stroke="#fff" stroke-width="2.2" shape-rendering="auto" />
<rect x="1216" y="15" width="7" height="3" fill="#fff"/>
<rect x="1243.5" y="7.5" width="7" height="6" fill="none" stroke="#fff"/>
<rect x="1243" y="7" width="8" height="2" fill="#fff"/>
<rect x="1240.5" y="10.5" width="7" height="6" fill="#2a6aea" stroke="#fff"/>
<rect x="1240" y="10" width="8" height="2" fill="#fff"/>
<rect x="1233" y="33" width="14" height="14" fill="#ece9d8"/>
<rect x="1233" y="33" width="14" height="1" fill="#fff"/>
<rect x="1233" y="33" width="1" height="14" fill="#fff"/>
<rect x="1246" y="33" width="1" height="14" fill="#303030"/>
<rect x="1233" y="46" width="14" height="1" fill="#303030"/>
<rect x="1245" y="34" width="1" height="12" fill="#808080"/>
<rect x="1234" y="45" width="12" height="1" fill="#808080"/>
<rect x="1248" y="33" width="14" height="14" fill="#ece9d8"/>
<rect x="1248" y="33" width="14" height="1" fill="#fff"/>
<rect x="1248" y="33" width="1" height="14" fill="#fff"/>
<rect x="1261" y="33" width="1" height="14" fill="#303030"/>
<rect x="1248" y="46" width="14" height="1" fill="#303030"/>
<rect x="1260" y="34" width="1" height="12" fill="#808080"/>
<rect x="1249" y="45" width="12" height="1" fill="#808080"/>
<rect x="1264" y="33" width="14" height="14" fill="#ece9d8"/>
<rect x="1264" y="33" width="14" height="1" fill="#fff"/>
<rect x="1264" y="33" width="1" height="14" fill="#fff"/>
<rect x="1277" y="33" width="1" height="14" fill="#303030"/>
<rect x="1264" y="46" width="14" height="1" fill="#303030"/>
<rect x="1276" y="34" width="1" height="12" fill="#808080"/>
<rect x="1265" y="45" width="12" height="1" fill="#808080"/>
<rect x="1237" y="42" width="6" height="2" fill="#000"/>
<rect x="1254.5" y="36.5" width="5" height="4" fill="none" stroke="#000"/>
<rect x="1254" y="36" width="6" height="2" fill="#000"/>
<rect x="1252.5" y="39.5" width="5" height="4" fill="#ece9d8" stroke="#000"/>
<rect x="1252" y="39" width="6" height="2" fill="#000"/>
<path d="M1267.500 36.500l7 7M1274.500 36.500l-7 7" fill="none" stroke="#000" stroke-width="1.6" shape-rendering="auto" />
</svg>
<div class="t" style="left:8.5px;top:61px;font-size:11px">INTC</div>
<div class="t" style="left:609px;top:61.5px;font-size:12.500px;font-weight:bold;letter-spacing:-0.2px">Central</div>
<div class="t" style="left:690px;top:61.5px;font-size:12.500px;font-weight:bold;letter-spacing:-0.2px">Trade</div>
<div class="t" style="left:102.5px;top:113px;letter-spacing:-0.377px">Equities</div>
<div class="t" style="left:182.5px;top:113px;letter-spacing:0.118px">Other Intervals</div>
<div class="t" style="left:298px;top:113px;letter-spacing:-0.973px">IDC</div>
<div class="t" style="left:421px;top:113px;letter-spacing:-1.236px">60</div>
<div class="t" style="left:463.5px;top:113px;letter-spacing:-0.488px">Daily</div>
<div class="t" style="left:518.5px;top:113px;letter-spacing:-0.919px">Tick</div>
<div class="t" style="left:347px;top:113px;">1</div>
<div class="t" style="left:383.5px;top:113px;">5</div>
<div class="abs" style="left:2px;top:131px;width:1276px;height:619px;background:#000"></div>
<div class="t" style="left:2.3px;top:490px;font-size:13.33px;font-weight:bold;color:#0000ff;letter-spacing:0.121px">Volume</div>
<div class="t" style="left:3px;top:696px;font-size:13.33px;font-weight:bold;color:#0000ff;letter-spacing:-0.398px">Stochastic(9(3),3)</div>
<svg width="1284" height="774" viewBox="0 0 1284 774" style="position:absolute;left:0;top:0" shape-rendering="crispEdges">
<path fill="#e4e4e4" d="M9 139h1v1h-1zM16 139h1v1h-1zM23 139h1v1h-1zM30 139h1v1h-1zM37 139h1v1h-1zM44 139h1v1h-1zM51 139h1v1h-1zM58 139h1v1h-1zM65 139h1v1h-1zM72 139h1v1h-1zM79 139h1v1h-1zM86 139h1v1h-1zM93 139h1v1h-1zM100 139h1v1h-1zM107 139h1v1h-1zM114 139h1v1h-1zM121 139h1v1h-1zM128 139h1v1h-1zM135 139h1v1h-1zM142 139h1v1h-1zM149 139h1v1h-1zM156 139h1v1h-1zM163 139h1v1h-1zM170 139h1v1h-1zM177 139h1v1h-1zM184 139h1v1h-1zM191 139h1v1h-1zM198 139h1v1h-1zM205 139h1v1h-1zM212 139h1v1h-1zM219 139h1v1h-1zM226 139h1v1h-1zM233 139h1v1h-1zM240 139h1v1h-1zM247 139h1v1h-1zM254 139h1v1h-1zM261 139h1v1h-1zM268 139h1v1h-1zM275 139h1v1h-1zM282 139h1v1h-1zM289 139h1v1h-1zM296 139h1v1h-1zM303 139h1v1h-1zM310 139h1v1h-1zM317 139h1v1h-1zM324 139h1v1h-1zM331 139h1v1h-1zM338 139h1v1h-1zM345 139h1v1h-1zM352 139h1v1h-1zM359 139h1v1h-1zM366 139h1v1h-1zM373 139h1v1h-1zM380 139h1v1h-1zM387 139h1v1h-1zM394 139h1v1h-1zM401 139h1v1h-1zM408 139h1v1h-1zM415 139h1v1h-1zM422 139h1v1h-1zM429 139h1v1h-1zM436 139h1v1h-1zM443 139h1v1h-1zM450 139h1v1h-1zM457 139h1v1h-1zM464 139h1v1h-1zM471 139h1v1h-1zM478 139h1v1h-1zM485 139h1v1h-1zM492 139h1v1h-1zM499 139h1v1h-1zM506 139h1v1h-1zM513 139h1v1h-1zM520 139h1v1h-1zM527 139h1v1h-1zM534 139h1v1h-1zM541 139h1v1h-1zM548 139h1v1h-1zM555 139h1v1h-1zM562 139h1v1h-1zM569 139h1v1h-1zM576 139h1v1h-1zM583 139h1v1h-1zM590 139h1v1h-1zM597 139h1v1h-1zM604 139h1v1h-1zM611 139h1v1h-1zM618 139h1v1h-1zM625 139h1v1h-1zM632 139h1v1h-1zM639 139h1v1h-1zM646 139h1v1h-1zM653 139h1v1h-1zM660 139h1v1h-1zM667 139h1v1h-1zM674 139h1v1h-1zM681 139h1v1h-1zM688 139h1v1h-1zM695 139h1v1h-1zM702 139h1v1h-1zM709 139h1v1h-1zM716 139h1v1h-1zM723 139h1v1h-1zM730 139h1v1h-1zM737 139h1v1h-1zM744 139h1v1h-1zM751 139h1v1h-1zM758 139h1v1h-1zM765 139h1v1h-1zM772 139h1v1h-1zM779 139h1v1h-1zM786 139h1v1h-1zM793 139h1v1h-1zM800 139h1v1h-1zM807 139h1v1h-1zM814 139h1v1h-1zM821 139h1v1h-1zM828 139h1v1h-1zM835 139h1v1h-1zM842 139h1v1h-1zM849 139h1v1h-1zM856 139h1v1h-1zM863 139h1v1h-1zM870 139h1v1h-1zM877 139h1v1h-1zM884 139h1v1h-1zM891 139h1v1h-1zM898 139h1v1h-1zM905 139h1v1h-1zM912 139h1v1h-1zM919 139h1v1h-1zM926 139h1v1h-1zM933 139h1v1h-1zM940 139h1v1h-1zM947 139h1v1h-1zM954 139h1v1h-1zM961 139h1v1h-1zM968 139h1v1h-1zM975 139h1v1h-1zM982 139h1v1h-1zM989 139h1v1h-1zM996 139h1v1h-1zM1003 139h1v1h-1zM1010 139h1v1h-1zM1017 139h1v1h-1zM1024 139h1v1h-1zM1031 139h1v1h-1zM1038 139h1v1h-1zM1045 139h1v1h-1zM1052 139h1v1h-1zM1059 139h1v1h-1zM1066 139h1v1h-1zM1073 139h1v1h-1zM1080 139h1v1h-1zM1087 139h1v1h-1zM1094 139h1v1h-1zM1101 139h1v1h-1zM1108 139h1v1h-1zM1115 139h1v1h-1zM1122 139h1v1h-1zM1129 139h1v1h-1zM1136 139h1v1h-1zM1143 139h1v1h-1zM1150 139h1v1h-1zM1157 139h1v1h-1zM1164 139h1v1h-1zM1171 139h1v1h-1zM1178 139h1v1h-1zM1185 139h1v1h-1zM1192 139h1v1h-1zM1199 139h1v1h-1zM9 190h1v1h-1zM16 190h1v1h-1zM23 190h1v1h-1zM30 190h1v1h-1zM37 190h1v1h-1zM44 190h1v1h-1zM51 190h1v1h-1zM58 190h1v1h-1zM65 190h1v1h-1zM72 190h1v1h-1zM79 190h1v1h-1zM86 190h1v1h-1zM93 190h1v1h-1zM100 190h1v1h-1zM107 190h1v1h-1zM114 190h1v1h-1zM121 190h1v1h-1zM128 190h1v1h-1zM135 190h1v1h-1zM142 190h1v1h-1zM149 190h1v1h-1zM156 190h1v1h-1zM163 190h1v1h-1zM170 190h1v1h-1zM177 190h1v1h-1zM184 190h1v1h-1zM191 190h1v1h-1zM198 190h1v1h-1zM205 190h1v1h-1zM212 190h1v1h-1zM219 190h1v1h-1zM226 190h1v1h-1zM233 190h1v1h-1zM240 190h1v1h-1zM247 190h1v1h-1zM254 190h1v1h-1zM261 190h1v1h-1zM268 190h1v1h-1zM275 190h1v1h-1zM282 190h1v1h-1zM289 190h1v1h-1zM296 190h1v1h-1zM303 190h1v1h-1zM310 190h1v1h-1zM317 190h1v1h-1zM324 190h1v1h-1zM331 190h1v1h-1zM338 190h1v1h-1zM345 190h1v1h-1zM352 190h1v1h-1zM359 190h1v1h-1zM366 190h1v1h-1zM373 190h1v1h-1zM380 190h1v1h-1zM387 190h1v1h-1zM394 190h1v1h-1zM401 190h1v1h-1zM408 190h1v1h-1zM415 190h1v1h-1zM422 190h1v1h-1zM429 190h1v1h-1zM436 190h1v1h-1zM443 190h1v1h-1zM450 190h1v1h-1zM457 190h1v1h-1zM464 190h1v1h-1zM471 190h1v1h-1zM478 190h1v1h-1zM485 190h1v1h-1zM492 190h1v1h-1zM499 190h1v1h-1zM506 190h1v1h-1zM513 190h1v1h-1zM520 190h1v1h-1zM527 190h1v1h-1zM534 190h1v1h-1zM541 190h1v1h-1zM548 190h1v1h-1zM555 190h1v1h-1zM562 190h1v1h-1zM569 190h1v1h-1zM576 190h1v1h-1zM583 190h1v1h-1zM590 190h1v1h-1zM597 190h1v1h-1zM604 190h1v1h-1zM611 190h1v1h-1zM618 190h1v1h-1zM625 190h1v1h-1zM632 190h1v1h-1zM639 190h1v1h-1zM646 190h1v1h-1zM653 190h1v1h-1zM660 190h1v1h-1zM667 190h1v1h-1zM674 190h1v1h-1zM681 190h1v1h-1zM688 190h1v1h-1zM695 190h1v1h-1zM702 190h1v1h-1zM709 190h1v1h-1zM716 190h1v1h-1zM723 190h1v1h-1zM730 190h1v1h-1zM737 190h1v1h-1zM744 190h1v1h-1zM751 190h1v1h-1zM758 190h1v1h-1zM765 190h1v1h-1zM772 190h1v1h-1zM779 190h1v1h-1zM786 190h1v1h-1zM793 190h1v1h-1zM800 190h1v1h-1zM807 190h1v1h-1zM814 190h1v1h-1zM821 190h1v1h-1zM828 190h1v1h-1zM835 190h1v1h-1zM842 190h1v1h-1zM849 190h1v1h-1zM856 190h1v1h-1zM863 190h1v1h-1zM870 190h1v1h-1zM877 190h1v1h-1zM884 190h1v1h-1zM891 190h1v1h-1zM898 190h1v1h-1zM905 190h1v1h-1zM912 190h1v1h-1zM919 190h1v1h-1zM926 190h1v1h-1zM933 190h1v1h-1zM940 190h1v1h-1zM947 190h1v1h-1zM954 190h1v1h-1zM961 190h1v1h-1zM968 190h1v1h-1zM975 190h1v1h-1zM982 190h1v1h-1zM989 190h1v1h-1zM996 190h1v1h-1zM1003 190h1v1h-1zM1010 190h1v1h-1zM1017 190h1v1h-1zM1024 190h1v1h-1zM1031 190h1v1h-1zM1038 190h1v1h-1zM1045 190h1v1h-1zM1052 190h1v1h-1zM1059 190h1v1h-1zM1066 190h1v1h-1zM1073 190h1v1h-1zM1080 190h1v1h-1zM1087 190h1v1h-1zM1094 190h1v1h-1zM1101 190h1v1h-1zM1108 190h1v1h-1zM1115 190h1v1h-1zM1122 190h1v1h-1zM1129 190h1v1h-1zM1136 190h1v1h-1zM1143 190h1v1h-1zM1150 190h1v1h-1zM1157 190h1v1h-1zM1164 190h1v1h-1zM1171 190h1v1h-1zM1178 190h1v1h-1zM1185 190h1v1h-1zM1192 190h1v1h-1zM1199 190h1v1h-1zM9 241h1v1h-1zM16 241h1v1h-1zM23 241h1v1h-1zM30 241h1v1h-1zM37 241h1v1h-1zM44 241h1v1h-1zM51 241h1v1h-1zM58 241h1v1h-1zM65 241h1v1h-1zM72 241h1v1h-1zM79 241h1v1h-1zM86 241h1v1h-1zM93 241h1v1h-1zM100 241h1v1h-1zM107 241h1v1h-1zM114 241h1v1h-1zM121 241h1v1h-1zM128 241h1v1h-1zM135 241h1v1h-1zM142 241h1v1h-1zM149 241h1v1h-1zM156 241h1v1h-1zM163 241h1v1h-1zM170 241h1v1h-1zM177 241h1v1h-1zM184 241h1v1h-1zM191 241h1v1h-1zM198 241h1v1h-1zM205 241h1v1h-1zM212 241h1v1h-1zM219 241h1v1h-1zM226 241h1v1h-1zM233 241h1v1h-1zM240 241h1v1h-1zM247 241h1v1h-1zM254 241h1v1h-1zM261 241h1v1h-1zM268 241h1v1h-1zM275 241h1v1h-1zM282 241h1v1h-1zM289 241h1v1h-1zM296 241h1v1h-1zM303 241h1v1h-1zM310 241h1v1h-1zM317 241h1v1h-1zM324 241h1v1h-1zM331 241h1v1h-1zM338 241h1v1h-1zM345 241h1v1h-1zM352 241h1v1h-1zM359 241h1v1h-1zM366 241h1v1h-1zM373 241h1v1h-1zM380 241h1v1h-1zM387 241h1v1h-1zM394 241h1v1h-1zM401 241h1v1h-1zM408 241h1v1h-1zM415 241h1v1h-1zM422 241h1v1h-1zM429 241h1v1h-1zM436 241h1v1h-1zM443 241h1v1h-1zM450 241h1v1h-1zM457 241h1v1h-1zM464 241h1v1h-1zM471 241h1v1h-1zM478 241h1v1h-1zM485 241h1v1h-1zM492 241h1v1h-1zM499 241h1v1h-1zM506 241h1v1h-1zM513 241h1v1h-1zM520 241h1v1h-1zM527 241h1v1h-1zM534 241h1v1h-1zM541 241h1v1h-1zM548 241h1v1h-1zM555 241h1v1h-1zM562 241h1v1h-1zM569 241h1v1h-1zM576 241h1v1h-1zM583 241h1v1h-1zM590 241h1v1h-1zM597 241h1v1h-1zM604 241h1v1h-1zM611 241h1v1h-1zM618 241h1v1h-1zM625 241h1v1h-1zM632 241h1v1h-1zM639 241h1v1h-1zM646 241h1v1h-1zM653 241h1v1h-1zM660 241h1v1h-1zM667 241h1v1h-1zM674 241h1v1h-1zM681 241h1v1h-1zM688 241h1v1h-1zM695 241h1v1h-1zM702 241h1v1h-1zM709 241h1v1h-1zM716 241h1v1h-1zM723 241h1v1h-1zM730 241h1v1h-1zM737 241h1v1h-1zM744 241h1v1h-1zM751 241h1v1h-1zM758 241h1v1h-1zM765 241h1v1h-1zM772 241h1v1h-1zM779 241h1v1h-1zM786 241h1v1h-1zM793 241h1v1h-1zM800 241h1v1h-1zM807 241h1v1h-1zM814 241h1v1h-1zM821 241h1v1h-1zM828 241h1v1h-1zM835 241h1v1h-1zM842 241h1v1h-1zM849 241h1v1h-1zM856 241h1v1h-1zM863 241h1v1h-1zM870 241h1v1h-1zM877 241h1v1h-1zM884 241h1v1h-1zM891 241h1v1h-1zM898 241h1v1h-1zM905 241h1v1h-1zM912 241h1v1h-1zM919 241h1v1h-1zM926 241h1v1h-1zM933 241h1v1h-1zM940 241h1v1h-1zM947 241h1v1h-1zM954 241h1v1h-1zM961 241h1v1h-1zM968 241h1v1h-1zM975 241h1v1h-1zM982 241h1v1h-1zM989 241h1v1h-1zM996 241h1v1h-1zM1003 241h1v1h-1zM1010 241h1v1h-1zM1017 241h1v1h-1zM1024 241h1v1h-1zM1031 241h1v1h-1zM1038 241h1v1h-1zM1045 241h1v1h-1zM1052 241h1v1h-1zM1059 241h1v1h-1zM1066 241h1v1h-1zM1073 241h1v1h-1zM1080 241h1v1h-1zM1087 241h1v1h-1zM1094 241h1v1h-1zM1101 241h1v1h-1zM1108 241h1v1h-1zM1115 241h1v1h-1zM1122 241h1v1h-1zM1129 241h1v1h-1zM1136 241h1v1h-1zM1143 241h1v1h-1zM1150 241h1v1h-1zM1157 241h1v1h-1zM1164 241h1v1h-1zM1171 241h1v1h-1zM1178 241h1v1h-1zM1185 241h1v1h-1zM1192 241h1v1h-1zM1199 241h1v1h-1zM9 292h1v1h-1zM16 292h1v1h-1zM23 292h1v1h-1zM30 292h1v1h-1zM37 292h1v1h-1zM44 292h1v1h-1zM51 292h1v1h-1zM58 292h1v1h-1zM65 292h1v1h-1zM72 292h1v1h-1zM79 292h1v1h-1zM86 292h1v1h-1zM93 292h1v1h-1zM100 292h1v1h-1zM107 292h1v1h-1zM114 292h1v1h-1zM121 292h1v1h-1zM128 292h1v1h-1zM135 292h1v1h-1zM142 292h1v1h-1zM149 292h1v1h-1zM156 292h1v1h-1zM163 292h1v1h-1zM170 292h1v1h-1zM177 292h1v1h-1zM184 292h1v1h-1zM191 292h1v1h-1zM198 292h1v1h-1zM205 292h1v1h-1zM212 292h1v1h-1zM219 292h1v1h-1zM226 292h1v1h-1zM233 292h1v1h-1zM240 292h1v1h-1zM247 292h1v1h-1zM254 292h1v1h-1zM261 292h1v1h-1zM268 292h1v1h-1zM275 292h1v1h-1zM282 292h1v1h-1zM289 292h1v1h-1zM296 292h1v1h-1zM303 292h1v1h-1zM310 292h1v1h-1zM317 292h1v1h-1zM324 292h1v1h-1zM331 292h1v1h-1zM338 292h1v1h-1zM345 292h1v1h-1zM352 292h1v1h-1zM359 292h1v1h-1zM366 292h1v1h-1zM373 292h1v1h-1zM380 292h1v1h-1zM387 292h1v1h-1zM394 292h1v1h-1zM401 292h1v1h-1zM408 292h1v1h-1zM415 292h1v1h-1zM422 292h1v1h-1zM429 292h1v1h-1zM436 292h1v1h-1zM443 292h1v1h-1zM450 292h1v1h-1zM457 292h1v1h-1zM464 292h1v1h-1zM471 292h1v1h-1zM478 292h1v1h-1zM485 292h1v1h-1zM492 292h1v1h-1zM499 292h1v1h-1zM506 292h1v1h-1zM513 292h1v1h-1zM520 292h1v1h-1zM527 292h1v1h-1zM534 292h1v1h-1zM541 292h1v1h-1zM548 292h1v1h-1zM555 292h1v1h-1zM562 292h1v1h-1zM569 292h1v1h-1zM576 292h1v1h-1zM583 292h1v1h-1zM590 292h1v1h-1zM597 292h1v1h-1zM604 292h1v1h-1zM611 292h1v1h-1zM618 292h1v1h-1zM625 292h1v1h-1zM632 292h1v1h-1zM639 292h1v1h-1zM646 292h1v1h-1zM653 292h1v1h-1zM660 292h1v1h-1zM667 292h1v1h-1zM674 292h1v1h-1zM681 292h1v1h-1zM688 292h1v1h-1zM695 292h1v1h-1zM702 292h1v1h-1zM709 292h1v1h-1zM716 292h1v1h-1zM723 292h1v1h-1zM730 292h1v1h-1zM737 292h1v1h-1zM744 292h1v1h-1zM751 292h1v1h-1zM758 292h1v1h-1zM765 292h1v1h-1zM772 292h1v1h-1zM779 292h1v1h-1zM786 292h1v1h-1zM793 292h1v1h-1zM800 292h1v1h-1zM807 292h1v1h-1zM814 292h1v1h-1zM821 292h1v1h-1zM828 292h1v1h-1zM835 292h1v1h-1zM842 292h1v1h-1zM849 292h1v1h-1zM856 292h1v1h-1zM863 292h1v1h-1zM870 292h1v1h-1zM877 292h1v1h-1zM884 292h1v1h-1zM891 292h1v1h-1zM898 292h1v1h-1zM905 292h1v1h-1zM912 292h1v1h-1zM919 292h1v1h-1zM926 292h1v1h-1zM933 292h1v1h-1zM940 292h1v1h-1zM947 292h1v1h-1zM954 292h1v1h-1zM961 292h1v1h-1zM968 292h1v1h-1zM975 292h1v1h-1zM982 292h1v1h-1zM989 292h1v1h-1zM996 292h1v1h-1zM1003 292h1v1h-1zM1010 292h1v1h-1zM1017 292h1v1h-1zM1024 292h1v1h-1zM1031 292h1v1h-1zM1038 292h1v1h-1zM1045 292h1v1h-1zM1052 292h1v1h-1zM1059 292h1v1h-1zM1066 292h1v1h-1zM1073 292h1v1h-1zM1080 292h1v1h-1zM1087 292h1v1h-1zM1094 292h1v1h-1zM1101 292h1v1h-1zM1108 292h1v1h-1zM1115 292h1v1h-1zM1122 292h1v1h-1zM1129 292h1v1h-1zM1136 292h1v1h-1zM1143 292h1v1h-1zM1150 292h1v1h-1zM1157 292h1v1h-1zM1164 292h1v1h-1zM1171 292h1v1h-1zM1178 292h1v1h-1zM1185 292h1v1h-1zM1192 292h1v1h-1zM1199 292h1v1h-1zM9 342h1v1h-1zM16 342h1v1h-1zM23 342h1v1h-1zM30 342h1v1h-1zM37 342h1v1h-1zM44 342h1v1h-1zM51 342h1v1h-1zM58 342h1v1h-1zM65 342h1v1h-1zM72 342h1v1h-1zM79 342h1v1h-1zM86 342h1v1h-1zM93 342h1v1h-1zM100 342h1v1h-1zM107 342h1v1h-1zM114 342h1v1h-1zM121 342h1v1h-1zM128 342h1v1h-1zM135 342h1v1h-1zM142 342h1v1h-1zM149 342h1v1h-1zM156 342h1v1h-1zM163 342h1v1h-1zM170 342h1v1h-1zM177 342h1v1h-1zM184 342h1v1h-1zM191 342h1v1h-1zM198 342h1v1h-1zM205 342h1v1h-1zM212 342h1v1h-1zM219 342h1v1h-1zM226 342h1v1h-1zM233 342h1v1h-1zM240 342h1v1h-1zM247 342h1v1h-1zM254 342h1v1h-1zM261 342h1v1h-1zM268 342h1v1h-1zM275 342h1v1h-1zM282 342h1v1h-1zM289 342h1v1h-1zM296 342h1v1h-1zM303 342h1v1h-1zM310 342h1v1h-1zM317 342h1v1h-1zM324 342h1v1h-1zM331 342h1v1h-1zM338 342h1v1h-1zM345 342h1v1h-1zM352 342h1v1h-1zM359 342h1v1h-1zM366 342h1v1h-1zM373 342h1v1h-1zM380 342h1v1h-1zM387 342h1v1h-1zM394 342h1v1h-1zM401 342h1v1h-1zM408 342h1v1h-1zM415 342h1v1h-1zM422 342h1v1h-1zM429 342h1v1h-1zM436 342h1v1h-1zM443 342h1v1h-1zM450 342h1v1h-1zM457 342h1v1h-1zM464 342h1v1h-1zM471 342h1v1h-1zM478 342h1v1h-1zM485 342h1v1h-1zM492 342h1v1h-1zM499 342h1v1h-1zM506 342h1v1h-1zM513 342h1v1h-1zM520 342h1v1h-1zM527 342h1v1h-1zM534 342h1v1h-1zM541 342h1v1h-1zM548 342h1v1h-1zM555 342h1v1h-1zM562 342h1v1h-1zM569 342h1v1h-1zM576 342h1v1h-1zM583 342h1v1h-1zM590 342h1v1h-1zM597 342h1v1h-1zM604 342h1v1h-1zM611 342h1v1h-1zM618 342h1v1h-1zM625 342h1v1h-1zM632 342h1v1h-1zM639 342h1v1h-1zM646 342h1v1h-1zM653 342h1v1h-1zM660 342h1v1h-1zM667 342h1v1h-1zM674 342h1v1h-1zM681 342h1v1h-1zM688 342h1v1h-1zM695 342h1v1h-1zM702 342h1v1h-1zM709 342h1v1h-1zM716 342h1v1h-1zM723 342h1v1h-1zM730 342h1v1h-1zM737 342h1v1h-1zM744 342h1v1h-1zM751 342h1v1h-1zM758 342h1v1h-1zM765 342h1v1h-1zM772 342h1v1h-1zM779 342h1v1h-1zM786 342h1v1h-1zM793 342h1v1h-1zM800 342h1v1h-1zM807 342h1v1h-1zM814 342h1v1h-1zM821 342h1v1h-1zM828 342h1v1h-1zM835 342h1v1h-1zM842 342h1v1h-1zM849 342h1v1h-1zM856 342h1v1h-1zM863 342h1v1h-1zM870 342h1v1h-1zM877 342h1v1h-1zM884 342h1v1h-1zM891 342h1v1h-1zM898 342h1v1h-1zM905 342h1v1h-1zM912 342h1v1h-1zM919 342h1v1h-1zM926 342h1v1h-1zM933 342h1v1h-1zM940 342h1v1h-1zM947 342h1v1h-1zM954 342h1v1h-1zM961 342h1v1h-1zM968 342h1v1h-1zM975 342h1v1h-1zM982 342h1v1h-1zM989 342h1v1h-1zM996 342h1v1h-1zM1003 342h1v1h-1zM1010 342h1v1h-1zM1017 342h1v1h-1zM1024 342h1v1h-1zM1031 342h1v1h-1zM1038 342h1v1h-1zM1045 342h1v1h-1zM1052 342h1v1h-1zM1059 342h1v1h-1zM1066 342h1v1h-1zM1073 342h1v1h-1zM1080 342h1v1h-1zM1087 342h1v1h-1zM1094 342h1v1h-1zM1101 342h1v1h-1zM1108 342h1v1h-1zM1115 342h1v1h-1zM1122 342h1v1h-1zM1129 342h1v1h-1zM1136 342h1v1h-1zM1143 342h1v1h-1zM1150 342h1v1h-1zM1157 342h1v1h-1zM1164 342h1v1h-1zM1171 342h1v1h-1zM1178 342h1v1h-1zM1185 342h1v1h-1zM1192 342h1v1h-1zM1199 342h1v1h-1zM9 393h1v1h-1zM16 393h1v1h-1zM23 393h1v1h-1zM30 393h1v1h-1zM37 393h1v1h-1zM44 393h1v1h-1zM51 393h1v1h-1zM58 393h1v1h-1zM65 393h1v1h-1zM72 393h1v1h-1zM79 393h1v1h-1zM86 393h1v1h-1zM93 393h1v1h-1zM100 393h1v1h-1zM107 393h1v1h-1zM114 393h1v1h-1zM121 393h1v1h-1zM128 393h1v1h-1zM135 393h1v1h-1zM142 393h1v1h-1zM149 393h1v1h-1zM156 393h1v1h-1zM163 393h1v1h-1zM170 393h1v1h-1zM177 393h1v1h-1zM184 393h1v1h-1zM191 393h1v1h-1zM198 393h1v1h-1zM205 393h1v1h-1zM212 393h1v1h-1zM219 393h1v1h-1zM226 393h1v1h-1zM233 393h1v1h-1zM240 393h1v1h-1zM247 393h1v1h-1zM254 393h1v1h-1zM261 393h1v1h-1zM268 393h1v1h-1zM275 393h1v1h-1zM282 393h1v1h-1zM289 393h1v1h-1zM296 393h1v1h-1zM303 393h1v1h-1zM310 393h1v1h-1zM317 393h1v1h-1zM324 393h1v1h-1zM331 393h1v1h-1zM338 393h1v1h-1zM345 393h1v1h-1zM352 393h1v1h-1zM359 393h1v1h-1zM366 393h1v1h-1zM373 393h1v1h-1zM380 393h1v1h-1zM387 393h1v1h-1zM394 393h1v1h-1zM401 393h1v1h-1zM408 393h1v1h-1zM415 393h1v1h-1zM422 393h1v1h-1zM429 393h1v1h-1zM436 393h1v1h-1zM443 393h1v1h-1zM450 393h1v1h-1zM457 393h1v1h-1zM464 393h1v1h-1zM471 393h1v1h-1zM478 393h1v1h-1zM485 393h1v1h-1zM492 393h1v1h-1zM499 393h1v1h-1zM506 393h1v1h-1zM513 393h1v1h-1zM520 393h1v1h-1zM527 393h1v1h-1zM534 393h1v1h-1zM541 393h1v1h-1zM548 393h1v1h-1zM555 393h1v1h-1zM562 393h1v1h-1zM569 393h1v1h-1zM576 393h1v1h-1zM583 393h1v1h-1zM590 393h1v1h-1zM597 393h1v1h-1zM604 393h1v1h-1zM611 393h1v1h-1zM618 393h1v1h-1zM625 393h1v1h-1zM632 393h1v1h-1zM639 393h1v1h-1zM646 393h1v1h-1zM653 393h1v1h-1zM660 393h1v1h-1zM667 393h1v1h-1zM674 393h1v1h-1zM681 393h1v1h-1zM688 393h1v1h-1zM695 393h1v1h-1zM702 393h1v1h-1zM709 393h1v1h-1zM716 393h1v1h-1zM723 393h1v1h-1zM730 393h1v1h-1zM737 393h1v1h-1zM744 393h1v1h-1zM751 393h1v1h-1zM758 393h1v1h-1zM765 393h1v1h-1zM772 393h1v1h-1zM779 393h1v1h-1zM786 393h1v1h-1zM793 393h1v1h-1zM800 393h1v1h-1zM807 393h1v1h-1zM814 393h1v1h-1zM821 393h1v1h-1zM828 393h1v1h-1zM835 393h1v1h-1zM842 393h1v1h-1zM849 393h1v1h-1zM856 393h1v1h-1zM863 393h1v1h-1zM870 393h1v1h-1zM877 393h1v1h-1zM884 393h1v1h-1zM891 393h1v1h-1zM898 393h1v1h-1zM905 393h1v1h-1zM912 393h1v1h-1zM919 393h1v1h-1zM926 393h1v1h-1zM933 393h1v1h-1zM940 393h1v1h-1zM947 393h1v1h-1zM954 393h1v1h-1zM961 393h1v1h-1zM968 393h1v1h-1zM975 393h1v1h-1zM982 393h1v1h-1zM989 393h1v1h-1zM996 393h1v1h-1zM1003 393h1v1h-1zM1010 393h1v1h-1zM1017 393h1v1h-1zM1024 393h1v1h-1zM1031 393h1v1h-1zM1038 393h1v1h-1zM1045 393h1v1h-1zM1052 393h1v1h-1zM1059 393h1v1h-1zM1066 393h1v1h-1zM1073 393h1v1h-1zM1080 393h1v1h-1zM1087 393h1v1h-1zM1094 393h1v1h-1zM1101 393h1v1h-1zM1108 393h1v1h-1zM1115 393h1v1h-1zM1122 393h1v1h-1zM1129 393h1v1h-1zM1136 393h1v1h-1zM1143 393h1v1h-1zM1150 393h1v1h-1zM1157 393h1v1h-1zM1164 393h1v1h-1zM1171 393h1v1h-1zM1178 393h1v1h-1zM1185 393h1v1h-1zM1192 393h1v1h-1zM1199 393h1v1h-1zM9 444h1v1h-1zM16 444h1v1h-1zM23 444h1v1h-1zM30 444h1v1h-1zM37 444h1v1h-1zM44 444h1v1h-1zM51 444h1v1h-1zM58 444h1v1h-1zM65 444h1v1h-1zM72 444h1v1h-1zM79 444h1v1h-1zM86 444h1v1h-1zM93 444h1v1h-1zM100 444h1v1h-1zM107 444h1v1h-1zM114 444h1v1h-1zM121 444h1v1h-1zM128 444h1v1h-1zM135 444h1v1h-1zM142 444h1v1h-1zM149 444h1v1h-1zM156 444h1v1h-1zM163 444h1v1h-1zM170 444h1v1h-1zM177 444h1v1h-1zM184 444h1v1h-1zM191 444h1v1h-1zM198 444h1v1h-1zM205 444h1v1h-1zM212 444h1v1h-1zM219 444h1v1h-1zM226 444h1v1h-1zM233 444h1v1h-1zM240 444h1v1h-1zM247 444h1v1h-1zM254 444h1v1h-1zM261 444h1v1h-1zM268 444h1v1h-1zM275 444h1v1h-1zM282 444h1v1h-1zM289 444h1v1h-1zM296 444h1v1h-1zM303 444h1v1h-1zM310 444h1v1h-1zM317 444h1v1h-1zM324 444h1v1h-1zM331 444h1v1h-1zM338 444h1v1h-1zM345 444h1v1h-1zM352 444h1v1h-1zM359 444h1v1h-1zM366 444h1v1h-1zM373 444h1v1h-1zM380 444h1v1h-1zM387 444h1v1h-1zM394 444h1v1h-1zM401 444h1v1h-1zM408 444h1v1h-1zM415 444h1v1h-1zM422 444h1v1h-1zM429 444h1v1h-1zM436 444h1v1h-1zM443 444h1v1h-1zM450 444h1v1h-1zM457 444h1v1h-1zM464 444h1v1h-1zM471 444h1v1h-1zM478 444h1v1h-1zM485 444h1v1h-1zM492 444h1v1h-1zM499 444h1v1h-1zM506 444h1v1h-1zM513 444h1v1h-1zM520 444h1v1h-1zM527 444h1v1h-1zM534 444h1v1h-1zM541 444h1v1h-1zM548 444h1v1h-1zM555 444h1v1h-1zM562 444h1v1h-1zM569 444h1v1h-1zM576 444h1v1h-1zM583 444h1v1h-1zM590 444h1v1h-1zM597 444h1v1h-1zM604 444h1v1h-1zM611 444h1v1h-1zM618 444h1v1h-1zM625 444h1v1h-1zM632 444h1v1h-1zM639 444h1v1h-1zM646 444h1v1h-1zM653 444h1v1h-1zM660 444h1v1h-1zM667 444h1v1h-1zM674 444h1v1h-1zM681 444h1v1h-1zM688 444h1v1h-1zM695 444h1v1h-1zM702 444h1v1h-1zM709 444h1v1h-1zM716 444h1v1h-1zM723 444h1v1h-1zM730 444h1v1h-1zM737 444h1v1h-1zM744 444h1v1h-1zM751 444h1v1h-1zM758 444h1v1h-1zM765 444h1v1h-1zM772 444h1v1h-1zM779 444h1v1h-1zM786 444h1v1h-1zM793 444h1v1h-1zM800 444h1v1h-1zM807 444h1v1h-1zM814 444h1v1h-1zM821 444h1v1h-1zM828 444h1v1h-1zM835 444h1v1h-1zM842 444h1v1h-1zM849 444h1v1h-1zM856 444h1v1h-1zM863 444h1v1h-1zM870 444h1v1h-1zM877 444h1v1h-1zM884 444h1v1h-1zM891 444h1v1h-1zM898 444h1v1h-1zM905 444h1v1h-1zM912 444h1v1h-1zM919 444h1v1h-1zM926 444h1v1h-1zM933 444h1v1h-1zM940 444h1v1h-1zM947 444h1v1h-1zM954 444h1v1h-1zM961 444h1v1h-1zM968 444h1v1h-1zM975 444h1v1h-1zM982 444h1v1h-1zM989 444h1v1h-1zM996 444h1v1h-1zM1003 444h1v1h-1zM1010 444h1v1h-1zM1017 444h1v1h-1zM1024 444h1v1h-1zM1031 444h1v1h-1zM1038 444h1v1h-1zM1045 444h1v1h-1zM1052 444h1v1h-1zM1059 444h1v1h-1zM1066 444h1v1h-1zM1073 444h1v1h-1zM1080 444h1v1h-1zM1087 444h1v1h-1zM1094 444h1v1h-1zM1101 444h1v1h-1zM1108 444h1v1h-1zM1115 444h1v1h-1zM1122 444h1v1h-1zM1129 444h1v1h-1zM1136 444h1v1h-1zM1143 444h1v1h-1zM1150 444h1v1h-1zM1157 444h1v1h-1zM1164 444h1v1h-1zM1171 444h1v1h-1zM1178 444h1v1h-1zM1185 444h1v1h-1zM1192 444h1v1h-1zM1199 444h1v1h-1zM30 165h1v1h-1zM58 165h1v1h-1zM93 165h1v1h-1zM128 165h1v1h-1zM163 165h1v1h-1zM198 165h1v1h-1zM233 165h1v1h-1zM268 165h1v1h-1zM303 165h1v1h-1zM338 165h1v1h-1zM366 165h1v1h-1zM401 165h1v1h-1zM436 165h1v1h-1zM471 165h1v1h-1zM506 165h1v1h-1zM541 165h1v1h-1zM576 165h1v1h-1zM611 165h1v1h-1zM646 165h1v1h-1zM681 165h1v1h-1zM716 165h1v1h-1zM744 165h1v1h-1zM779 165h1v1h-1zM814 165h1v1h-1zM849 165h1v1h-1zM884 165h1v1h-1zM912 165h1v1h-1zM940 165h1v1h-1zM975 165h1v1h-1zM30 215h1v1h-1zM58 215h1v1h-1zM93 215h1v1h-1zM128 215h1v1h-1zM163 215h1v1h-1zM198 215h1v1h-1zM233 215h1v1h-1zM268 215h1v1h-1zM303 215h1v1h-1zM338 215h1v1h-1zM366 215h1v1h-1zM401 215h1v1h-1zM436 215h1v1h-1zM471 215h1v1h-1zM506 215h1v1h-1zM541 215h1v1h-1zM576 215h1v1h-1zM611 215h1v1h-1zM646 215h1v1h-1zM681 215h1v1h-1zM716 215h1v1h-1zM744 215h1v1h-1zM779 215h1v1h-1zM814 215h1v1h-1zM849 215h1v1h-1zM884 215h1v1h-1zM912 215h1v1h-1zM940 215h1v1h-1zM975 215h1v1h-1zM30 266h1v1h-1zM58 266h1v1h-1zM93 266h1v1h-1zM128 266h1v1h-1zM163 266h1v1h-1zM198 266h1v1h-1zM233 266h1v1h-1zM268 266h1v1h-1zM303 266h1v1h-1zM338 266h1v1h-1zM366 266h1v1h-1zM401 266h1v1h-1zM436 266h1v1h-1zM471 266h1v1h-1zM506 266h1v1h-1zM541 266h1v1h-1zM576 266h1v1h-1zM611 266h1v1h-1zM646 266h1v1h-1zM681 266h1v1h-1zM716 266h1v1h-1zM744 266h1v1h-1zM779 266h1v1h-1zM814 266h1v1h-1zM849 266h1v1h-1zM884 266h1v1h-1zM912 266h1v1h-1zM940 266h1v1h-1zM975 266h1v1h-1zM30 317h1v1h-1zM58 317h1v1h-1zM93 317h1v1h-1zM128 317h1v1h-1zM163 317h1v1h-1zM198 317h1v1h-1zM233 317h1v1h-1zM268 317h1v1h-1zM303 317h1v1h-1zM338 317h1v1h-1zM366 317h1v1h-1zM401 317h1v1h-1zM436 317h1v1h-1zM471 317h1v1h-1zM506 317h1v1h-1zM541 317h1v1h-1zM576 317h1v1h-1zM611 317h1v1h-1zM646 317h1v1h-1zM681 317h1v1h-1zM716 317h1v1h-1zM744 317h1v1h-1zM779 317h1v1h-1zM814 317h1v1h-1zM849 317h1v1h-1zM884 317h1v1h-1zM912 317h1v1h-1zM940 317h1v1h-1zM975 317h1v1h-1zM30 367h1v1h-1zM58 367h1v1h-1zM93 367h1v1h-1zM128 367h1v1h-1zM163 367h1v1h-1zM198 367h1v1h-1zM233 367h1v1h-1zM268 367h1v1h-1zM303 367h1v1h-1zM338 367h1v1h-1zM366 367h1v1h-1zM401 367h1v1h-1zM436 367h1v1h-1zM471 367h1v1h-1zM506 367h1v1h-1zM541 367h1v1h-1zM576 367h1v1h-1zM611 367h1v1h-1zM646 367h1v1h-1zM681 367h1v1h-1zM716 367h1v1h-1zM744 367h1v1h-1zM779 367h1v1h-1zM814 367h1v1h-1zM849 367h1v1h-1zM884 367h1v1h-1zM912 367h1v1h-1zM940 367h1v1h-1zM975 367h1v1h-1zM30 418h1v1h-1zM58 418h1v1h-1zM93 418h1v1h-1zM128 418h1v1h-1zM163 418h1v1h-1zM198 418h1v1h-1zM233 418h1v1h-1zM268 418h1v1h-1zM303 418h1v1h-1zM338 418h1v1h-1zM366 418h1v1h-1zM401 418h1v1h-1zM436 418h1v1h-1zM471 418h1v1h-1zM506 418h1v1h-1zM541 418h1v1h-1zM576 418h1v1h-1zM611 418h1v1h-1zM646 418h1v1h-1zM681 418h1v1h-1zM716 418h1v1h-1zM744 418h1v1h-1zM779 418h1v1h-1zM814 418h1v1h-1zM849 418h1v1h-1zM884 418h1v1h-1zM912 418h1v1h-1zM940 418h1v1h-1zM975 418h1v1h-1zM30 469h1v1h-1zM58 469h1v1h-1zM93 469h1v1h-1zM128 469h1v1h-1zM163 469h1v1h-1zM198 469h1v1h-1zM233 469h1v1h-1zM268 469h1v1h-1zM303 469h1v1h-1zM338 469h1v1h-1zM366 469h1v1h-1zM401 469h1v1h-1zM436 469h1v1h-1zM471 469h1v1h-1zM506 469h1v1h-1zM541 469h1v1h-1zM576 469h1v1h-1zM611 469h1v1h-1zM646 469h1v1h-1zM681 469h1v1h-1zM716 469h1v1h-1zM744 469h1v1h-1zM779 469h1v1h-1zM814 469h1v1h-1zM849 469h1v1h-1zM884 469h1v1h-1zM912 469h1v1h-1zM940 469h1v1h-1zM975 469h1v1h-1zM9 500h1v1h-1zM16 500h1v1h-1zM23 500h1v1h-1zM30 500h1v1h-1zM37 500h1v1h-1zM44 500h1v1h-1zM51 500h1v1h-1zM58 500h1v1h-1zM65 500h1v1h-1zM72 500h1v1h-1zM79 500h1v1h-1zM86 500h1v1h-1zM93 500h1v1h-1zM100 500h1v1h-1zM107 500h1v1h-1zM114 500h1v1h-1zM121 500h1v1h-1zM128 500h1v1h-1zM135 500h1v1h-1zM142 500h1v1h-1zM149 500h1v1h-1zM156 500h1v1h-1zM163 500h1v1h-1zM170 500h1v1h-1zM177 500h1v1h-1zM184 500h1v1h-1zM191 500h1v1h-1zM198 500h1v1h-1zM205 500h1v1h-1zM212 500h1v1h-1zM219 500h1v1h-1zM226 500h1v1h-1zM233 500h1v1h-1zM240 500h1v1h-1zM247 500h1v1h-1zM254 500h1v1h-1zM261 500h1v1h-1zM268 500h1v1h-1zM275 500h1v1h-1zM282 500h1v1h-1zM289 500h1v1h-1zM296 500h1v1h-1zM303 500h1v1h-1zM310 500h1v1h-1zM317 500h1v1h-1zM324 500h1v1h-1zM331 500h1v1h-1zM338 500h1v1h-1zM345 500h1v1h-1zM352 500h1v1h-1zM359 500h1v1h-1zM366 500h1v1h-1zM373 500h1v1h-1zM380 500h1v1h-1zM387 500h1v1h-1zM394 500h1v1h-1zM401 500h1v1h-1zM408 500h1v1h-1zM415 500h1v1h-1zM422 500h1v1h-1zM429 500h1v1h-1zM436 500h1v1h-1zM443 500h1v1h-1zM450 500h1v1h-1zM457 500h1v1h-1zM464 500h1v1h-1zM471 500h1v1h-1zM478 500h1v1h-1zM485 500h1v1h-1zM492 500h1v1h-1zM499 500h1v1h-1zM506 500h1v1h-1zM513 500h1v1h-1zM520 500h1v1h-1zM527 500h1v1h-1zM534 500h1v1h-1zM541 500h1v1h-1zM548 500h1v1h-1zM555 500h1v1h-1zM562 500h1v1h-1zM569 500h1v1h-1zM576 500h1v1h-1zM583 500h1v1h-1zM590 500h1v1h-1zM597 500h1v1h-1zM604 500h1v1h-1zM611 500h1v1h-1zM618 500h1v1h-1zM625 500h1v1h-1zM632 500h1v1h-1zM639 500h1v1h-1zM646 500h1v1h-1zM653 500h1v1h-1zM660 500h1v1h-1zM667 500h1v1h-1zM674 500h1v1h-1zM681 500h1v1h-1zM688 500h1v1h-1zM695 500h1v1h-1zM702 500h1v1h-1zM709 500h1v1h-1zM716 500h1v1h-1zM723 500h1v1h-1zM730 500h1v1h-1zM737 500h1v1h-1zM744 500h1v1h-1zM751 500h1v1h-1zM758 500h1v1h-1zM765 500h1v1h-1zM772 500h1v1h-1zM779 500h1v1h-1zM786 500h1v1h-1zM793 500h1v1h-1zM800 500h1v1h-1zM807 500h1v1h-1zM814 500h1v1h-1zM821 500h1v1h-1zM828 500h1v1h-1zM835 500h1v1h-1zM842 500h1v1h-1zM849 500h1v1h-1zM856 500h1v1h-1zM863 500h1v1h-1zM870 500h1v1h-1zM877 500h1v1h-1zM884 500h1v1h-1zM891 500h1v1h-1zM898 500h1v1h-1zM905 500h1v1h-1zM912 500h1v1h-1zM919 500h1v1h-1zM926 500h1v1h-1zM933 500h1v1h-1zM940 500h1v1h-1zM947 500h1v1h-1zM954 500h1v1h-1zM961 500h1v1h-1zM968 500h1v1h-1zM975 500h1v1h-1zM982 500h1v1h-1zM989 500h1v1h-1zM996 500h1v1h-1zM1003 500h1v1h-1zM1010 500h1v1h-1zM1017 500h1v1h-1zM1024 500h1v1h-1zM1031 500h1v1h-1zM1038 500h1v1h-1zM1045 500h1v1h-1zM1052 500h1v1h-1zM1059 500h1v1h-1zM1066 500h1v1h-1zM1073 500h1v1h-1zM1080 500h1v1h-1zM1087 500h1v1h-1zM1094 500h1v1h-1zM1101 500h1v1h-1zM1108 500h1v1h-1zM1115 500h1v1h-1zM1122 500h1v1h-1zM1129 500h1v1h-1zM1136 500h1v1h-1zM1143 500h1v1h-1zM1150 500h1v1h-1zM1157 500h1v1h-1zM1164 500h1v1h-1zM1171 500h1v1h-1zM1178 500h1v1h-1zM1185 500h1v1h-1zM1192 500h1v1h-1zM1199 500h1v1h-1zM9 538h1v1h-1zM16 538h1v1h-1zM23 538h1v1h-1zM30 538h1v1h-1zM37 538h1v1h-1zM44 538h1v1h-1zM51 538h1v1h-1zM58 538h1v1h-1zM65 538h1v1h-1zM72 538h1v1h-1zM79 538h1v1h-1zM86 538h1v1h-1zM93 538h1v1h-1zM100 538h1v1h-1zM107 538h1v1h-1zM114 538h1v1h-1zM121 538h1v1h-1zM128 538h1v1h-1zM135 538h1v1h-1zM142 538h1v1h-1zM149 538h1v1h-1zM156 538h1v1h-1zM163 538h1v1h-1zM170 538h1v1h-1zM177 538h1v1h-1zM184 538h1v1h-1zM191 538h1v1h-1zM198 538h1v1h-1zM205 538h1v1h-1zM212 538h1v1h-1zM219 538h1v1h-1zM226 538h1v1h-1zM233 538h1v1h-1zM240 538h1v1h-1zM247 538h1v1h-1zM254 538h1v1h-1zM261 538h1v1h-1zM268 538h1v1h-1zM275 538h1v1h-1zM282 538h1v1h-1zM289 538h1v1h-1zM296 538h1v1h-1zM303 538h1v1h-1zM310 538h1v1h-1zM317 538h1v1h-1zM324 538h1v1h-1zM331 538h1v1h-1zM338 538h1v1h-1zM345 538h1v1h-1zM352 538h1v1h-1zM359 538h1v1h-1zM366 538h1v1h-1zM373 538h1v1h-1zM380 538h1v1h-1zM387 538h1v1h-1zM394 538h1v1h-1zM401 538h1v1h-1zM408 538h1v1h-1zM415 538h1v1h-1zM422 538h1v1h-1zM429 538h1v1h-1zM436 538h1v1h-1zM443 538h1v1h-1zM450 538h1v1h-1zM457 538h1v1h-1zM464 538h1v1h-1zM471 538h1v1h-1zM478 538h1v1h-1zM485 538h1v1h-1zM492 538h1v1h-1zM499 538h1v1h-1zM506 538h1v1h-1zM513 538h1v1h-1zM520 538h1v1h-1zM527 538h1v1h-1zM534 538h1v1h-1zM541 538h1v1h-1zM548 538h1v1h-1zM555 538h1v1h-1zM562 538h1v1h-1zM569 538h1v1h-1zM576 538h1v1h-1zM583 538h1v1h-1zM590 538h1v1h-1zM597 538h1v1h-1zM604 538h1v1h-1zM611 538h1v1h-1zM618 538h1v1h-1zM625 538h1v1h-1zM632 538h1v1h-1zM639 538h1v1h-1zM646 538h1v1h-1zM653 538h1v1h-1zM660 538h1v1h-1zM667 538h1v1h-1zM674 538h1v1h-1zM681 538h1v1h-1zM688 538h1v1h-1zM695 538h1v1h-1zM702 538h1v1h-1zM709 538h1v1h-1zM716 538h1v1h-1zM723 538h1v1h-1zM730 538h1v1h-1zM737 538h1v1h-1zM744 538h1v1h-1zM751 538h1v1h-1zM758 538h1v1h-1zM765 538h1v1h-1zM772 538h1v1h-1zM779 538h1v1h-1zM786 538h1v1h-1zM793 538h1v1h-1zM800 538h1v1h-1zM807 538h1v1h-1zM814 538h1v1h-1zM821 538h1v1h-1zM828 538h1v1h-1zM835 538h1v1h-1zM842 538h1v1h-1zM849 538h1v1h-1zM856 538h1v1h-1zM863 538h1v1h-1zM870 538h1v1h-1zM877 538h1v1h-1zM884 538h1v1h-1zM891 538h1v1h-1zM898 538h1v1h-1zM905 538h1v1h-1zM912 538h1v1h-1zM919 538h1v1h-1zM926 538h1v1h-1zM933 538h1v1h-1zM940 538h1v1h-1zM947 538h1v1h-1zM954 538h1v1h-1zM961 538h1v1h-1zM968 538h1v1h-1zM975 538h1v1h-1zM982 538h1v1h-1zM989 538h1v1h-1zM996 538h1v1h-1zM1003 538h1v1h-1zM1010 538h1v1h-1zM1017 538h1v1h-1zM1024 538h1v1h-1zM1031 538h1v1h-1zM1038 538h1v1h-1zM1045 538h1v1h-1zM1052 538h1v1h-1zM1059 538h1v1h-1zM1066 538h1v1h-1zM1073 538h1v1h-1zM1080 538h1v1h-1zM1087 538h1v1h-1zM1094 538h1v1h-1zM1101 538h1v1h-1zM1108 538h1v1h-1zM1115 538h1v1h-1zM1122 538h1v1h-1zM1129 538h1v1h-1zM1136 538h1v1h-1zM1143 538h1v1h-1zM1150 538h1v1h-1zM1157 538h1v1h-1zM1164 538h1v1h-1zM1171 538h1v1h-1zM1178 538h1v1h-1zM1185 538h1v1h-1zM1192 538h1v1h-1zM1199 538h1v1h-1zM9 576h1v1h-1zM16 576h1v1h-1zM23 576h1v1h-1zM30 576h1v1h-1zM37 576h1v1h-1zM44 576h1v1h-1zM51 576h1v1h-1zM58 576h1v1h-1zM65 576h1v1h-1zM72 576h1v1h-1zM79 576h1v1h-1zM86 576h1v1h-1zM93 576h1v1h-1zM100 576h1v1h-1zM107 576h1v1h-1zM114 576h1v1h-1zM121 576h1v1h-1zM128 576h1v1h-1zM135 576h1v1h-1zM142 576h1v1h-1zM149 576h1v1h-1zM156 576h1v1h-1zM163 576h1v1h-1zM170 576h1v1h-1zM177 576h1v1h-1zM184 576h1v1h-1zM191 576h1v1h-1zM198 576h1v1h-1zM205 576h1v1h-1zM212 576h1v1h-1zM219 576h1v1h-1zM226 576h1v1h-1zM233 576h1v1h-1zM240 576h1v1h-1zM247 576h1v1h-1zM254 576h1v1h-1zM261 576h1v1h-1zM268 576h1v1h-1zM275 576h1v1h-1zM282 576h1v1h-1zM289 576h1v1h-1zM296 576h1v1h-1zM303 576h1v1h-1zM310 576h1v1h-1zM317 576h1v1h-1zM324 576h1v1h-1zM331 576h1v1h-1zM338 576h1v1h-1zM345 576h1v1h-1zM352 576h1v1h-1zM359 576h1v1h-1zM366 576h1v1h-1zM373 576h1v1h-1zM380 576h1v1h-1zM387 576h1v1h-1zM394 576h1v1h-1zM401 576h1v1h-1zM408 576h1v1h-1zM415 576h1v1h-1zM422 576h1v1h-1zM429 576h1v1h-1zM436 576h1v1h-1zM443 576h1v1h-1zM450 576h1v1h-1zM457 576h1v1h-1zM464 576h1v1h-1zM471 576h1v1h-1zM478 576h1v1h-1zM485 576h1v1h-1zM492 576h1v1h-1zM499 576h1v1h-1zM506 576h1v1h-1zM513 576h1v1h-1zM520 576h1v1h-1zM527 576h1v1h-1zM534 576h1v1h-1zM541 576h1v1h-1zM548 576h1v1h-1zM555 576h1v1h-1zM562 576h1v1h-1zM569 576h1v1h-1zM576 576h1v1h-1zM583 576h1v1h-1zM590 576h1v1h-1zM597 576h1v1h-1zM604 576h1v1h-1zM611 576h1v1h-1zM618 576h1v1h-1zM625 576h1v1h-1zM632 576h1v1h-1zM639 576h1v1h-1zM646 576h1v1h-1zM653 576h1v1h-1zM660 576h1v1h-1zM667 576h1v1h-1zM674 576h1v1h-1zM681 576h1v1h-1zM688 576h1v1h-1zM695 576h1v1h-1zM702 576h1v1h-1zM709 576h1v1h-1zM716 576h1v1h-1zM723 576h1v1h-1zM730 576h1v1h-1zM737 576h1v1h-1zM744 576h1v1h-1zM751 576h1v1h-1zM758 576h1v1h-1zM765 576h1v1h-1zM772 576h1v1h-1zM779 576h1v1h-1zM786 576h1v1h-1zM793 576h1v1h-1zM800 576h1v1h-1zM807 576h1v1h-1zM814 576h1v1h-1zM821 576h1v1h-1zM828 576h1v1h-1zM835 576h1v1h-1zM842 576h1v1h-1zM849 576h1v1h-1zM856 576h1v1h-1zM863 576h1v1h-1zM870 576h1v1h-1zM877 576h1v1h-1zM884 576h1v1h-1zM891 576h1v1h-1zM898 576h1v1h-1zM905 576h1v1h-1zM912 576h1v1h-1zM919 576h1v1h-1zM926 576h1v1h-1zM933 576h1v1h-1zM940 576h1v1h-1zM947 576h1v1h-1zM954 576h1v1h-1zM961 576h1v1h-1zM968 576h1v1h-1zM975 576h1v1h-1zM982 576h1v1h-1zM989 576h1v1h-1zM996 576h1v1h-1zM1003 576h1v1h-1zM1010 576h1v1h-1zM1017 576h1v1h-1zM1024 576h1v1h-1zM1031 576h1v1h-1zM1038 576h1v1h-1zM1045 576h1v1h-1zM1052 576h1v1h-1zM1059 576h1v1h-1zM1066 576h1v1h-1zM1073 576h1v1h-1zM1080 576h1v1h-1zM1087 576h1v1h-1zM1094 576h1v1h-1zM1101 576h1v1h-1zM1108 576h1v1h-1zM1115 576h1v1h-1zM1122 576h1v1h-1zM1129 576h1v1h-1zM1136 576h1v1h-1zM1143 576h1v1h-1zM1150 576h1v1h-1zM1157 576h1v1h-1zM1164 576h1v1h-1zM1171 576h1v1h-1zM1178 576h1v1h-1zM1185 576h1v1h-1zM1192 576h1v1h-1zM1199 576h1v1h-1zM9 614h1v1h-1zM16 614h1v1h-1zM23 614h1v1h-1zM30 614h1v1h-1zM37 614h1v1h-1zM44 614h1v1h-1zM51 614h1v1h-1zM58 614h1v1h-1zM65 614h1v1h-1zM72 614h1v1h-1zM79 614h1v1h-1zM86 614h1v1h-1zM93 614h1v1h-1zM100 614h1v1h-1zM107 614h1v1h-1zM114 614h1v1h-1zM121 614h1v1h-1zM128 614h1v1h-1zM135 614h1v1h-1zM142 614h1v1h-1zM149 614h1v1h-1zM156 614h1v1h-1zM163 614h1v1h-1zM170 614h1v1h-1zM177 614h1v1h-1zM184 614h1v1h-1zM191 614h1v1h-1zM198 614h1v1h-1zM205 614h1v1h-1zM212 614h1v1h-1zM219 614h1v1h-1zM226 614h1v1h-1zM233 614h1v1h-1zM240 614h1v1h-1zM247 614h1v1h-1zM254 614h1v1h-1zM261 614h1v1h-1zM268 614h1v1h-1zM275 614h1v1h-1zM282 614h1v1h-1zM289 614h1v1h-1zM296 614h1v1h-1zM303 614h1v1h-1zM310 614h1v1h-1zM317 614h1v1h-1zM324 614h1v1h-1zM331 614h1v1h-1zM338 614h1v1h-1zM345 614h1v1h-1zM352 614h1v1h-1zM359 614h1v1h-1zM366 614h1v1h-1zM373 614h1v1h-1zM380 614h1v1h-1zM387 614h1v1h-1zM394 614h1v1h-1zM401 614h1v1h-1zM408 614h1v1h-1zM415 614h1v1h-1zM422 614h1v1h-1zM429 614h1v1h-1zM436 614h1v1h-1zM443 614h1v1h-1zM450 614h1v1h-1zM457 614h1v1h-1zM464 614h1v1h-1zM471 614h1v1h-1zM478 614h1v1h-1zM485 614h1v1h-1zM492 614h1v1h-1zM499 614h1v1h-1zM506 614h1v1h-1zM513 614h1v1h-1zM520 614h1v1h-1zM527 614h1v1h-1zM534 614h1v1h-1zM541 614h1v1h-1zM548 614h1v1h-1zM555 614h1v1h-1zM562 614h1v1h-1zM569 614h1v1h-1zM576 614h1v1h-1zM583 614h1v1h-1zM590 614h1v1h-1zM597 614h1v1h-1zM604 614h1v1h-1zM611 614h1v1h-1zM618 614h1v1h-1zM625 614h1v1h-1zM632 614h1v1h-1zM639 614h1v1h-1zM646 614h1v1h-1zM653 614h1v1h-1zM660 614h1v1h-1zM667 614h1v1h-1zM674 614h1v1h-1zM681 614h1v1h-1zM688 614h1v1h-1zM695 614h1v1h-1zM702 614h1v1h-1zM709 614h1v1h-1zM716 614h1v1h-1zM723 614h1v1h-1zM730 614h1v1h-1zM737 614h1v1h-1zM744 614h1v1h-1zM751 614h1v1h-1zM758 614h1v1h-1zM765 614h1v1h-1zM772 614h1v1h-1zM779 614h1v1h-1zM786 614h1v1h-1zM793 614h1v1h-1zM800 614h1v1h-1zM807 614h1v1h-1zM814 614h1v1h-1zM821 614h1v1h-1zM828 614h1v1h-1zM835 614h1v1h-1zM842 614h1v1h-1zM849 614h1v1h-1zM856 614h1v1h-1zM863 614h1v1h-1zM870 614h1v1h-1zM877 614h1v1h-1zM884 614h1v1h-1zM891 614h1v1h-1zM898 614h1v1h-1zM905 614h1v1h-1zM912 614h1v1h-1zM919 614h1v1h-1zM926 614h1v1h-1zM933 614h1v1h-1zM940 614h1v1h-1zM947 614h1v1h-1zM954 614h1v1h-1zM961 614h1v1h-1zM968 614h1v1h-1zM975 614h1v1h-1zM982 614h1v1h-1zM989 614h1v1h-1zM996 614h1v1h-1zM1003 614h1v1h-1zM1010 614h1v1h-1zM1017 614h1v1h-1zM1024 614h1v1h-1zM1031 614h1v1h-1zM1038 614h1v1h-1zM1045 614h1v1h-1zM1052 614h1v1h-1zM1059 614h1v1h-1zM1066 614h1v1h-1zM1073 614h1v1h-1zM1080 614h1v1h-1zM1087 614h1v1h-1zM1094 614h1v1h-1zM1101 614h1v1h-1zM1108 614h1v1h-1zM1115 614h1v1h-1zM1122 614h1v1h-1zM1129 614h1v1h-1zM1136 614h1v1h-1zM1143 614h1v1h-1zM1150 614h1v1h-1zM1157 614h1v1h-1zM1164 614h1v1h-1zM1171 614h1v1h-1zM1178 614h1v1h-1zM1185 614h1v1h-1zM1192 614h1v1h-1zM1199 614h1v1h-1zM9 652h1v1h-1zM16 652h1v1h-1zM23 652h1v1h-1zM30 652h1v1h-1zM37 652h1v1h-1zM44 652h1v1h-1zM51 652h1v1h-1zM58 652h1v1h-1zM65 652h1v1h-1zM72 652h1v1h-1zM79 652h1v1h-1zM86 652h1v1h-1zM93 652h1v1h-1zM100 652h1v1h-1zM107 652h1v1h-1zM114 652h1v1h-1zM121 652h1v1h-1zM128 652h1v1h-1zM135 652h1v1h-1zM142 652h1v1h-1zM149 652h1v1h-1zM156 652h1v1h-1zM163 652h1v1h-1zM170 652h1v1h-1zM177 652h1v1h-1zM184 652h1v1h-1zM191 652h1v1h-1zM198 652h1v1h-1zM205 652h1v1h-1zM212 652h1v1h-1zM219 652h1v1h-1zM226 652h1v1h-1zM233 652h1v1h-1zM240 652h1v1h-1zM247 652h1v1h-1zM254 652h1v1h-1zM261 652h1v1h-1zM268 652h1v1h-1zM275 652h1v1h-1zM282 652h1v1h-1zM289 652h1v1h-1zM296 652h1v1h-1zM303 652h1v1h-1zM310 652h1v1h-1zM317 652h1v1h-1zM324 652h1v1h-1zM331 652h1v1h-1zM338 652h1v1h-1zM345 652h1v1h-1zM352 652h1v1h-1zM359 652h1v1h-1zM366 652h1v1h-1zM373 652h1v1h-1zM380 652h1v1h-1zM387 652h1v1h-1zM394 652h1v1h-1zM401 652h1v1h-1zM408 652h1v1h-1zM415 652h1v1h-1zM422 652h1v1h-1zM429 652h1v1h-1zM436 652h1v1h-1zM443 652h1v1h-1zM450 652h1v1h-1zM457 652h1v1h-1zM464 652h1v1h-1zM471 652h1v1h-1zM478 652h1v1h-1zM485 652h1v1h-1zM492 652h1v1h-1zM499 652h1v1h-1zM506 652h1v1h-1zM513 652h1v1h-1zM520 652h1v1h-1zM527 652h1v1h-1zM534 652h1v1h-1zM541 652h1v1h-1zM548 652h1v1h-1zM555 652h1v1h-1zM562 652h1v1h-1zM569 652h1v1h-1zM576 652h1v1h-1zM583 652h1v1h-1zM590 652h1v1h-1zM597 652h1v1h-1zM604 652h1v1h-1zM611 652h1v1h-1zM618 652h1v1h-1zM625 652h1v1h-1zM632 652h1v1h-1zM639 652h1v1h-1zM646 652h1v1h-1zM653 652h1v1h-1zM660 652h1v1h-1zM667 652h1v1h-1zM674 652h1v1h-1zM681 652h1v1h-1zM688 652h1v1h-1zM695 652h1v1h-1zM702 652h1v1h-1zM709 652h1v1h-1zM716 652h1v1h-1zM723 652h1v1h-1zM730 652h1v1h-1zM737 652h1v1h-1zM744 652h1v1h-1zM751 652h1v1h-1zM758 652h1v1h-1zM765 652h1v1h-1zM772 652h1v1h-1zM779 652h1v1h-1zM786 652h1v1h-1zM793 652h1v1h-1zM800 652h1v1h-1zM807 652h1v1h-1zM814 652h1v1h-1zM821 652h1v1h-1zM828 652h1v1h-1zM835 652h1v1h-1zM842 652h1v1h-1zM849 652h1v1h-1zM856 652h1v1h-1zM863 652h1v1h-1zM870 652h1v1h-1zM877 652h1v1h-1zM884 652h1v1h-1zM891 652h1v1h-1zM898 652h1v1h-1zM905 652h1v1h-1zM912 652h1v1h-1zM919 652h1v1h-1zM926 652h1v1h-1zM933 652h1v1h-1zM940 652h1v1h-1zM947 652h1v1h-1zM954 652h1v1h-1zM961 652h1v1h-1zM968 652h1v1h-1zM975 652h1v1h-1zM982 652h1v1h-1zM989 652h1v1h-1zM996 652h1v1h-1zM1003 652h1v1h-1zM1010 652h1v1h-1zM1017 652h1v1h-1zM1024 652h1v1h-1zM1031 652h1v1h-1zM1038 652h1v1h-1zM1045 652h1v1h-1zM1052 652h1v1h-1zM1059 652h1v1h-1zM1066 652h1v1h-1zM1073 652h1v1h-1zM1080 652h1v1h-1zM1087 652h1v1h-1zM1094 652h1v1h-1zM1101 652h1v1h-1zM1108 652h1v1h-1zM1115 652h1v1h-1zM1122 652h1v1h-1zM1129 652h1v1h-1zM1136 652h1v1h-1zM1143 652h1v1h-1zM1150 652h1v1h-1zM1157 652h1v1h-1zM1164 652h1v1h-1zM1171 652h1v1h-1zM1178 652h1v1h-1zM1185 652h1v1h-1zM1192 652h1v1h-1zM1199 652h1v1h-1zM30 519h1v1h-1zM58 519h1v1h-1zM93 519h1v1h-1zM128 519h1v1h-1zM163 519h1v1h-1zM198 519h1v1h-1zM233 519h1v1h-1zM268 519h1v1h-1zM303 519h1v1h-1zM338 519h1v1h-1zM366 519h1v1h-1zM401 519h1v1h-1zM436 519h1v1h-1zM471 519h1v1h-1zM506 519h1v1h-1zM541 519h1v1h-1zM576 519h1v1h-1zM611 519h1v1h-1zM646 519h1v1h-1zM681 519h1v1h-1zM716 519h1v1h-1zM744 519h1v1h-1zM779 519h1v1h-1zM814 519h1v1h-1zM849 519h1v1h-1zM884 519h1v1h-1zM912 519h1v1h-1zM940 519h1v1h-1zM975 519h1v1h-1zM30 557h1v1h-1zM58 557h1v1h-1zM93 557h1v1h-1zM128 557h1v1h-1zM163 557h1v1h-1zM198 557h1v1h-1zM233 557h1v1h-1zM268 557h1v1h-1zM303 557h1v1h-1zM338 557h1v1h-1zM366 557h1v1h-1zM401 557h1v1h-1zM436 557h1v1h-1zM471 557h1v1h-1zM506 557h1v1h-1zM541 557h1v1h-1zM576 557h1v1h-1zM611 557h1v1h-1zM646 557h1v1h-1zM681 557h1v1h-1zM716 557h1v1h-1zM744 557h1v1h-1zM779 557h1v1h-1zM814 557h1v1h-1zM849 557h1v1h-1zM884 557h1v1h-1zM912 557h1v1h-1zM940 557h1v1h-1zM975 557h1v1h-1zM30 595h1v1h-1zM58 595h1v1h-1zM93 595h1v1h-1zM128 595h1v1h-1zM163 595h1v1h-1zM198 595h1v1h-1zM233 595h1v1h-1zM268 595h1v1h-1zM303 595h1v1h-1zM338 595h1v1h-1zM366 595h1v1h-1zM401 595h1v1h-1zM436 595h1v1h-1zM471 595h1v1h-1zM506 595h1v1h-1zM541 595h1v1h-1zM576 595h1v1h-1zM611 595h1v1h-1zM646 595h1v1h-1zM681 595h1v1h-1zM716 595h1v1h-1zM744 595h1v1h-1zM779 595h1v1h-1zM814 595h1v1h-1zM849 595h1v1h-1zM884 595h1v1h-1zM912 595h1v1h-1zM940 595h1v1h-1zM975 595h1v1h-1zM30 633h1v1h-1zM58 633h1v1h-1zM93 633h1v1h-1zM128 633h1v1h-1zM163 633h1v1h-1zM198 633h1v1h-1zM233 633h1v1h-1zM268 633h1v1h-1zM303 633h1v1h-1zM338 633h1v1h-1zM366 633h1v1h-1zM401 633h1v1h-1zM436 633h1v1h-1zM471 633h1v1h-1zM506 633h1v1h-1zM541 633h1v1h-1zM576 633h1v1h-1zM611 633h1v1h-1zM646 633h1v1h-1zM681 633h1v1h-1zM716 633h1v1h-1zM744 633h1v1h-1zM779 633h1v1h-1zM814 633h1v1h-1zM849 633h1v1h-1zM884 633h1v1h-1zM912 633h1v1h-1zM940 633h1v1h-1zM975 633h1v1h-1zM30 671h1v1h-1zM58 671h1v1h-1zM93 671h1v1h-1zM128 671h1v1h-1zM163 671h1v1h-1zM198 671h1v1h-1zM233 671h1v1h-1zM268 671h1v1h-1zM303 671h1v1h-1zM338 671h1v1h-1zM366 671h1v1h-1zM401 671h1v1h-1zM436 671h1v1h-1zM471 671h1v1h-1zM506 671h1v1h-1zM541 671h1v1h-1zM576 671h1v1h-1zM611 671h1v1h-1zM646 671h1v1h-1zM681 671h1v1h-1zM716 671h1v1h-1zM744 671h1v1h-1zM779 671h1v1h-1zM814 671h1v1h-1zM849 671h1v1h-1zM884 671h1v1h-1zM912 671h1v1h-1zM940 671h1v1h-1zM975 671h1v1h-1zM23 132h1v1h-1zM23 136h1v1h-1zM23 140h1v1h-1zM23 144h1v1h-1zM23 148h1v1h-1zM23 152h1v1h-1zM23 156h1v1h-1zM23 160h1v1h-1zM23 164h1v1h-1zM23 168h1v1h-1zM23 172h1v1h-1zM23 176h1v1h-1zM23 180h1v1h-1zM23 184h1v1h-1zM23 188h1v1h-1zM23 192h1v1h-1zM23 196h1v1h-1zM23 200h1v1h-1zM23 204h1v1h-1zM23 208h1v1h-1zM23 212h1v1h-1zM23 216h1v1h-1zM23 220h1v1h-1zM23 224h1v1h-1zM23 228h1v1h-1zM23 232h1v1h-1zM23 236h1v1h-1zM23 240h1v1h-1zM23 244h1v1h-1zM23 248h1v1h-1zM23 252h1v1h-1zM23 256h1v1h-1zM23 260h1v1h-1zM23 264h1v1h-1zM23 268h1v1h-1zM23 272h1v1h-1zM23 276h1v1h-1zM23 280h1v1h-1zM23 284h1v1h-1zM23 288h1v1h-1zM23 292h1v1h-1zM23 296h1v1h-1zM23 300h1v1h-1zM23 304h1v1h-1zM23 308h1v1h-1zM23 312h1v1h-1zM23 316h1v1h-1zM23 320h1v1h-1zM23 324h1v1h-1zM23 328h1v1h-1zM23 332h1v1h-1zM23 336h1v1h-1zM23 340h1v1h-1zM23 344h1v1h-1zM23 348h1v1h-1zM23 352h1v1h-1zM23 356h1v1h-1zM23 360h1v1h-1zM23 364h1v1h-1zM23 368h1v1h-1zM23 372h1v1h-1zM23 376h1v1h-1zM23 380h1v1h-1zM23 384h1v1h-1zM23 388h1v1h-1zM23 392h1v1h-1zM23 396h1v1h-1zM23 400h1v1h-1zM23 404h1v1h-1zM23 408h1v1h-1zM23 412h1v1h-1zM23 416h1v1h-1zM23 420h1v1h-1zM23 424h1v1h-1zM23 428h1v1h-1zM23 432h1v1h-1zM23 436h1v1h-1zM23 440h1v1h-1zM23 444h1v1h-1zM23 448h1v1h-1zM23 452h1v1h-1zM23 456h1v1h-1zM23 460h1v1h-1zM23 464h1v1h-1zM23 468h1v1h-1zM23 472h1v1h-1zM23 476h1v1h-1zM23 480h1v1h-1zM23 488h1v1h-1zM23 492h1v1h-1zM23 496h1v1h-1zM23 500h1v1h-1zM23 504h1v1h-1zM23 508h1v1h-1zM23 512h1v1h-1zM23 516h1v1h-1zM23 520h1v1h-1zM23 524h1v1h-1zM23 528h1v1h-1zM23 532h1v1h-1zM23 536h1v1h-1zM23 540h1v1h-1zM23 544h1v1h-1zM23 548h1v1h-1zM23 552h1v1h-1zM23 556h1v1h-1zM23 560h1v1h-1zM23 564h1v1h-1zM23 568h1v1h-1zM23 572h1v1h-1zM23 576h1v1h-1zM23 580h1v1h-1zM23 584h1v1h-1zM23 588h1v1h-1zM23 592h1v1h-1zM23 596h1v1h-1zM23 600h1v1h-1zM23 604h1v1h-1zM23 608h1v1h-1zM23 612h1v1h-1zM23 616h1v1h-1zM23 620h1v1h-1zM23 624h1v1h-1zM23 628h1v1h-1zM23 632h1v1h-1zM23 636h1v1h-1zM23 640h1v1h-1zM23 644h1v1h-1zM23 648h1v1h-1zM23 652h1v1h-1zM23 656h1v1h-1zM23 660h1v1h-1zM23 664h1v1h-1zM23 668h1v1h-1zM23 672h1v1h-1zM23 676h1v1h-1zM23 680h1v1h-1zM23 684h1v1h-1zM23 692h1v1h-1zM23 696h1v1h-1zM23 700h1v1h-1zM23 704h1v1h-1zM23 708h1v1h-1zM23 712h1v1h-1zM23 716h1v1h-1zM163 132h1v1h-1zM163 136h1v1h-1zM163 140h1v1h-1zM163 144h1v1h-1zM163 148h1v1h-1zM163 152h1v1h-1zM163 156h1v1h-1zM163 160h1v1h-1zM163 164h1v1h-1zM163 168h1v1h-1zM163 172h1v1h-1zM163 176h1v1h-1zM163 180h1v1h-1zM163 184h1v1h-1zM163 188h1v1h-1zM163 192h1v1h-1zM163 196h1v1h-1zM163 200h1v1h-1zM163 204h1v1h-1zM163 208h1v1h-1zM163 212h1v1h-1zM163 216h1v1h-1zM163 220h1v1h-1zM163 224h1v1h-1zM163 228h1v1h-1zM163 232h1v1h-1zM163 236h1v1h-1zM163 240h1v1h-1zM163 244h1v1h-1zM163 248h1v1h-1zM163 252h1v1h-1zM163 256h1v1h-1zM163 260h1v1h-1zM163 264h1v1h-1zM163 268h1v1h-1zM163 272h1v1h-1zM163 276h1v1h-1zM163 280h1v1h-1zM163 284h1v1h-1zM163 288h1v1h-1zM163 292h1v1h-1zM163 296h1v1h-1zM163 300h1v1h-1zM163 304h1v1h-1zM163 308h1v1h-1zM163 312h1v1h-1zM163 316h1v1h-1zM163 320h1v1h-1zM163 324h1v1h-1zM163 328h1v1h-1zM163 332h1v1h-1zM163 336h1v1h-1zM163 340h1v1h-1zM163 344h1v1h-1zM163 348h1v1h-1zM163 352h1v1h-1zM163 356h1v1h-1zM163 360h1v1h-1zM163 364h1v1h-1zM163 368h1v1h-1zM163 372h1v1h-1zM163 376h1v1h-1zM163 380h1v1h-1zM163 384h1v1h-1zM163 388h1v1h-1zM163 392h1v1h-1zM163 396h1v1h-1zM163 400h1v1h-1zM163 404h1v1h-1zM163 408h1v1h-1zM163 412h1v1h-1zM163 416h1v1h-1zM163 420h1v1h-1zM163 424h1v1h-1zM163 428h1v1h-1zM163 432h1v1h-1zM163 436h1v1h-1zM163 440h1v1h-1zM163 444h1v1h-1zM163 448h1v1h-1zM163 452h1v1h-1zM163 456h1v1h-1zM163 460h1v1h-1zM163 464h1v1h-1zM163 468h1v1h-1zM163 472h1v1h-1zM163 476h1v1h-1zM163 480h1v1h-1zM163 488h1v1h-1zM163 492h1v1h-1zM163 496h1v1h-1zM163 500h1v1h-1zM163 504h1v1h-1zM163 508h1v1h-1zM163 512h1v1h-1zM163 516h1v1h-1zM163 520h1v1h-1zM163 524h1v1h-1zM163 528h1v1h-1zM163 532h1v1h-1zM163 536h1v1h-1zM163 540h1v1h-1zM163 544h1v1h-1zM163 548h1v1h-1zM163 552h1v1h-1zM163 556h1v1h-1zM163 560h1v1h-1zM163 564h1v1h-1zM163 568h1v1h-1zM163 572h1v1h-1zM163 576h1v1h-1zM163 580h1v1h-1zM163 584h1v1h-1zM163 588h1v1h-1zM163 592h1v1h-1zM163 596h1v1h-1zM163 600h1v1h-1zM163 604h1v1h-1zM163 608h1v1h-1zM163 612h1v1h-1zM163 616h1v1h-1zM163 620h1v1h-1zM163 624h1v1h-1zM163 628h1v1h-1zM163 632h1v1h-1zM163 636h1v1h-1zM163 640h1v1h-1zM163 644h1v1h-1zM163 648h1v1h-1zM163 652h1v1h-1zM163 656h1v1h-1zM163 660h1v1h-1zM163 664h1v1h-1zM163 668h1v1h-1zM163 672h1v1h-1zM163 676h1v1h-1zM163 680h1v1h-1zM163 684h1v1h-1zM163 692h1v1h-1zM163 696h1v1h-1zM163 700h1v1h-1zM163 704h1v1h-1zM163 708h1v1h-1zM163 712h1v1h-1zM163 716h1v1h-1zM324 132h1v1h-1zM324 136h1v1h-1zM324 140h1v1h-1zM324 144h1v1h-1zM324 148h1v1h-1zM324 152h1v1h-1zM324 156h1v1h-1zM324 160h1v1h-1zM324 164h1v1h-1zM324 168h1v1h-1zM324 172h1v1h-1zM324 176h1v1h-1zM324 180h1v1h-1zM324 184h1v1h-1zM324 188h1v1h-1zM324 192h1v1h-1zM324 196h1v1h-1zM324 200h1v1h-1zM324 204h1v1h-1zM324 208h1v1h-1zM324 212h1v1h-1zM324 216h1v1h-1zM324 220h1v1h-1zM324 224h1v1h-1zM324 228h1v1h-1zM324 232h1v1h-1zM324 236h1v1h-1zM324 240h1v1h-1zM324 244h1v1h-1zM324 248h1v1h-1zM324 252h1v1h-1zM324 256h1v1h-1zM324 260h1v1h-1zM324 264h1v1h-1zM324 268h1v1h-1zM324 272h1v1h-1zM324 276h1v1h-1zM324 280h1v1h-1zM324 284h1v1h-1zM324 288h1v1h-1zM324 292h1v1h-1zM324 296h1v1h-1zM324 300h1v1h-1zM324 304h1v1h-1zM324 308h1v1h-1zM324 312h1v1h-1zM324 316h1v1h-1zM324 320h1v1h-1zM324 324h1v1h-1zM324 328h1v1h-1zM324 332h1v1h-1zM324 336h1v1h-1zM324 340h1v1h-1zM324 344h1v1h-1zM324 348h1v1h-1zM324 352h1v1h-1zM324 356h1v1h-1zM324 360h1v1h-1zM324 364h1v1h-1zM324 368h1v1h-1zM324 372h1v1h-1zM324 376h1v1h-1zM324 380h1v1h-1zM324 384h1v1h-1zM324 388h1v1h-1zM324 392h1v1h-1zM324 396h1v1h-1zM324 400h1v1h-1zM324 404h1v1h-1zM324 408h1v1h-1zM324 412h1v1h-1zM324 416h1v1h-1zM324 420h1v1h-1zM324 424h1v1h-1zM324 428h1v1h-1zM324 432h1v1h-1zM324 436h1v1h-1zM324 440h1v1h-1zM324 444h1v1h-1zM324 448h1v1h-1zM324 452h1v1h-1zM324 456h1v1h-1zM324 460h1v1h-1zM324 464h1v1h-1zM324 468h1v1h-1zM324 472h1v1h-1zM324 476h1v1h-1zM324 480h1v1h-1zM324 488h1v1h-1zM324 492h1v1h-1zM324 496h1v1h-1zM324 500h1v1h-1zM324 504h1v1h-1zM324 508h1v1h-1zM324 512h1v1h-1zM324 516h1v1h-1zM324 520h1v1h-1zM324 524h1v1h-1zM324 528h1v1h-1zM324 532h1v1h-1zM324 536h1v1h-1zM324 540h1v1h-1zM324 544h1v1h-1zM324 548h1v1h-1zM324 552h1v1h-1zM324 556h1v1h-1zM324 560h1v1h-1zM324 564h1v1h-1zM324 568h1v1h-1zM324 572h1v1h-1zM324 576h1v1h-1zM324 580h1v1h-1zM324 584h1v1h-1zM324 588h1v1h-1zM324 592h1v1h-1zM324 596h1v1h-1zM324 600h1v1h-1zM324 604h1v1h-1zM324 608h1v1h-1zM324 612h1v1h-1zM324 616h1v1h-1zM324 620h1v1h-1zM324 624h1v1h-1zM324 628h1v1h-1zM324 632h1v1h-1zM324 636h1v1h-1zM324 640h1v1h-1zM324 644h1v1h-1zM324 648h1v1h-1zM324 652h1v1h-1zM324 656h1v1h-1zM324 660h1v1h-1zM324 664h1v1h-1zM324 668h1v1h-1zM324 672h1v1h-1zM324 676h1v1h-1zM324 680h1v1h-1zM324 684h1v1h-1zM324 692h1v1h-1zM324 696h1v1h-1zM324 700h1v1h-1zM324 704h1v1h-1zM324 708h1v1h-1zM324 712h1v1h-1zM324 716h1v1h-1zM471 132h1v1h-1zM471 136h1v1h-1zM471 140h1v1h-1zM471 144h1v1h-1zM471 148h1v1h-1zM471 152h1v1h-1zM471 156h1v1h-1zM471 160h1v1h-1zM471 164h1v1h-1zM471 168h1v1h-1zM471 172h1v1h-1zM471 176h1v1h-1zM471 180h1v1h-1zM471 184h1v1h-1zM471 188h1v1h-1zM471 192h1v1h-1zM471 196h1v1h-1zM471 200h1v1h-1zM471 204h1v1h-1zM471 208h1v1h-1zM471 212h1v1h-1zM471 216h1v1h-1zM471 220h1v1h-1zM471 224h1v1h-1zM471 228h1v1h-1zM471 232h1v1h-1zM471 236h1v1h-1zM471 240h1v1h-1zM471 244h1v1h-1zM471 248h1v1h-1zM471 252h1v1h-1zM471 256h1v1h-1zM471 260h1v1h-1zM471 264h1v1h-1zM471 268h1v1h-1zM471 272h1v1h-1zM471 276h1v1h-1zM471 280h1v1h-1zM471 284h1v1h-1zM471 288h1v1h-1zM471 292h1v1h-1zM471 296h1v1h-1zM471 300h1v1h-1zM471 304h1v1h-1zM471 308h1v1h-1zM471 312h1v1h-1zM471 316h1v1h-1zM471 320h1v1h-1zM471 324h1v1h-1zM471 328h1v1h-1zM471 332h1v1h-1zM471 336h1v1h-1zM471 340h1v1h-1zM471 344h1v1h-1zM471 348h1v1h-1zM471 352h1v1h-1zM471 356h1v1h-1zM471 360h1v1h-1zM471 364h1v1h-1zM471 368h1v1h-1zM471 372h1v1h-1zM471 376h1v1h-1zM471 380h1v1h-1zM471 384h1v1h-1zM471 388h1v1h-1zM471 392h1v1h-1zM471 396h1v1h-1zM471 400h1v1h-1zM471 404h1v1h-1zM471 408h1v1h-1zM471 412h1v1h-1zM471 416h1v1h-1zM471 420h1v1h-1zM471 424h1v1h-1zM471 428h1v1h-1zM471 432h1v1h-1zM471 436h1v1h-1zM471 440h1v1h-1zM471 444h1v1h-1zM471 448h1v1h-1zM471 452h1v1h-1zM471 456h1v1h-1zM471 460h1v1h-1zM471 464h1v1h-1zM471 468h1v1h-1zM471 472h1v1h-1zM471 476h1v1h-1zM471 480h1v1h-1zM471 488h1v1h-1zM471 492h1v1h-1zM471 496h1v1h-1zM471 500h1v1h-1zM471 504h1v1h-1zM471 508h1v1h-1zM471 512h1v1h-1zM471 516h1v1h-1zM471 520h1v1h-1zM471 524h1v1h-1zM471 528h1v1h-1zM471 532h1v1h-1zM471 536h1v1h-1zM471 540h1v1h-1zM471 544h1v1h-1zM471 548h1v1h-1zM471 552h1v1h-1zM471 556h1v1h-1zM471 560h1v1h-1zM471 564h1v1h-1zM471 568h1v1h-1zM471 572h1v1h-1zM471 576h1v1h-1zM471 580h1v1h-1zM471 584h1v1h-1zM471 588h1v1h-1zM471 592h1v1h-1zM471 596h1v1h-1zM471 600h1v1h-1zM471 604h1v1h-1zM471 608h1v1h-1zM471 612h1v1h-1zM471 616h1v1h-1zM471 620h1v1h-1zM471 624h1v1h-1zM471 628h1v1h-1zM471 632h1v1h-1zM471 636h1v1h-1zM471 640h1v1h-1zM471 644h1v1h-1zM471 648h1v1h-1zM471 652h1v1h-1zM471 656h1v1h-1zM471 660h1v1h-1zM471 664h1v1h-1zM471 668h1v1h-1zM471 672h1v1h-1zM471 676h1v1h-1zM471 680h1v1h-1zM471 684h1v1h-1zM471 692h1v1h-1zM471 696h1v1h-1zM471 700h1v1h-1zM471 704h1v1h-1zM471 708h1v1h-1zM471 712h1v1h-1zM471 716h1v1h-1zM618 132h1v1h-1zM618 136h1v1h-1zM618 140h1v1h-1zM618 144h1v1h-1zM618 148h1v1h-1zM618 152h1v1h-1zM618 156h1v1h-1zM618 160h1v1h-1zM618 164h1v1h-1zM618 168h1v1h-1zM618 172h1v1h-1zM618 176h1v1h-1zM618 180h1v1h-1zM618 184h1v1h-1zM618 188h1v1h-1zM618 192h1v1h-1zM618 196h1v1h-1zM618 200h1v1h-1zM618 204h1v1h-1zM618 208h1v1h-1zM618 212h1v1h-1zM618 216h1v1h-1zM618 220h1v1h-1zM618 224h1v1h-1zM618 228h1v1h-1zM618 232h1v1h-1zM618 236h1v1h-1zM618 240h1v1h-1zM618 244h1v1h-1zM618 248h1v1h-1zM618 252h1v1h-1zM618 256h1v1h-1zM618 260h1v1h-1zM618 264h1v1h-1zM618 268h1v1h-1zM618 272h1v1h-1zM618 276h1v1h-1zM618 280h1v1h-1zM618 284h1v1h-1zM618 288h1v1h-1zM618 292h1v1h-1zM618 296h1v1h-1zM618 300h1v1h-1zM618 304h1v1h-1zM618 308h1v1h-1zM618 312h1v1h-1zM618 316h1v1h-1zM618 320h1v1h-1zM618 324h1v1h-1zM618 328h1v1h-1zM618 332h1v1h-1zM618 336h1v1h-1zM618 340h1v1h-1zM618 344h1v1h-1zM618 348h1v1h-1zM618 352h1v1h-1zM618 356h1v1h-1zM618 360h1v1h-1zM618 364h1v1h-1zM618 368h1v1h-1zM618 372h1v1h-1zM618 376h1v1h-1zM618 380h1v1h-1zM618 384h1v1h-1zM618 388h1v1h-1zM618 392h1v1h-1zM618 396h1v1h-1zM618 400h1v1h-1zM618 404h1v1h-1zM618 408h1v1h-1zM618 412h1v1h-1zM618 416h1v1h-1zM618 420h1v1h-1zM618 424h1v1h-1zM618 428h1v1h-1zM618 432h1v1h-1zM618 436h1v1h-1zM618 440h1v1h-1zM618 444h1v1h-1zM618 448h1v1h-1zM618 452h1v1h-1zM618 456h1v1h-1zM618 460h1v1h-1zM618 464h1v1h-1zM618 468h1v1h-1zM618 472h1v1h-1zM618 476h1v1h-1zM618 480h1v1h-1zM618 488h1v1h-1zM618 492h1v1h-1zM618 496h1v1h-1zM618 500h1v1h-1zM618 504h1v1h-1zM618 508h1v1h-1zM618 512h1v1h-1zM618 516h1v1h-1zM618 520h1v1h-1zM618 524h1v1h-1zM618 528h1v1h-1zM618 532h1v1h-1zM618 536h1v1h-1zM618 540h1v1h-1zM618 544h1v1h-1zM618 548h1v1h-1zM618 552h1v1h-1zM618 556h1v1h-1zM618 560h1v1h-1zM618 564h1v1h-1zM618 568h1v1h-1zM618 572h1v1h-1zM618 576h1v1h-1zM618 580h1v1h-1zM618 584h1v1h-1zM618 588h1v1h-1zM618 592h1v1h-1zM618 596h1v1h-1zM618 600h1v1h-1zM618 604h1v1h-1zM618 608h1v1h-1zM618 612h1v1h-1zM618 616h1v1h-1zM618 620h1v1h-1zM618 624h1v1h-1zM618 628h1v1h-1zM618 632h1v1h-1zM618 636h1v1h-1zM618 640h1v1h-1zM618 644h1v1h-1zM618 648h1v1h-1zM618 652h1v1h-1zM618 656h1v1h-1zM618 660h1v1h-1zM618 664h1v1h-1zM618 668h1v1h-1zM618 672h1v1h-1zM618 676h1v1h-1zM618 680h1v1h-1zM618 684h1v1h-1zM618 692h1v1h-1zM618 696h1v1h-1zM618 700h1v1h-1zM618 704h1v1h-1zM618 708h1v1h-1zM618 712h1v1h-1zM618 716h1v1h-1zM765 132h1v1h-1zM765 136h1v1h-1zM765 140h1v1h-1zM765 144h1v1h-1zM765 148h1v1h-1zM765 152h1v1h-1zM765 156h1v1h-1zM765 160h1v1h-1zM765 164h1v1h-1zM765 168h1v1h-1zM765 172h1v1h-1zM765 176h1v1h-1zM765 180h1v1h-1zM765 184h1v1h-1zM765 188h1v1h-1zM765 192h1v1h-1zM765 196h1v1h-1zM765 200h1v1h-1zM765 204h1v1h-1zM765 208h1v1h-1zM765 212h1v1h-1zM765 216h1v1h-1zM765 220h1v1h-1zM765 224h1v1h-1zM765 228h1v1h-1zM765 232h1v1h-1zM765 236h1v1h-1zM765 240h1v1h-1zM765 244h1v1h-1zM765 248h1v1h-1zM765 252h1v1h-1zM765 256h1v1h-1zM765 260h1v1h-1zM765 264h1v1h-1zM765 268h1v1h-1zM765 272h1v1h-1zM765 276h1v1h-1zM765 280h1v1h-1zM765 284h1v1h-1zM765 288h1v1h-1zM765 292h1v1h-1zM765 296h1v1h-1zM765 300h1v1h-1zM765 304h1v1h-1zM765 308h1v1h-1zM765 312h1v1h-1zM765 316h1v1h-1zM765 320h1v1h-1zM765 324h1v1h-1zM765 328h1v1h-1zM765 332h1v1h-1zM765 336h1v1h-1zM765 340h1v1h-1zM765 344h1v1h-1zM765 348h1v1h-1zM765 352h1v1h-1zM765 356h1v1h-1zM765 360h1v1h-1zM765 364h1v1h-1zM765 368h1v1h-1zM765 372h1v1h-1zM765 376h1v1h-1zM765 380h1v1h-1zM765 384h1v1h-1zM765 388h1v1h-1zM765 392h1v1h-1zM765 396h1v1h-1zM765 400h1v1h-1zM765 404h1v1h-1zM765 408h1v1h-1zM765 412h1v1h-1zM765 416h1v1h-1zM765 420h1v1h-1zM765 424h1v1h-1zM765 428h1v1h-1zM765 432h1v1h-1zM765 436h1v1h-1zM765 440h1v1h-1zM765 444h1v1h-1zM765 448h1v1h-1zM765 452h1v1h-1zM765 456h1v1h-1zM765 460h1v1h-1zM765 464h1v1h-1zM765 468h1v1h-1zM765 472h1v1h-1zM765 476h1v1h-1zM765 480h1v1h-1zM765 488h1v1h-1zM765 492h1v1h-1zM765 496h1v1h-1zM765 500h1v1h-1zM765 504h1v1h-1zM765 508h1v1h-1zM765 512h1v1h-1zM765 516h1v1h-1zM765 520h1v1h-1zM765 524h1v1h-1zM765 528h1v1h-1zM765 532h1v1h-1zM765 536h1v1h-1zM765 540h1v1h-1zM765 544h1v1h-1zM765 548h1v1h-1zM765 552h1v1h-1zM765 556h1v1h-1zM765 560h1v1h-1zM765 564h1v1h-1zM765 568h1v1h-1zM765 572h1v1h-1zM765 576h1v1h-1zM765 580h1v1h-1zM765 584h1v1h-1zM765 588h1v1h-1zM765 592h1v1h-1zM765 596h1v1h-1zM765 600h1v1h-1zM765 604h1v1h-1zM765 608h1v1h-1zM765 612h1v1h-1zM765 616h1v1h-1zM765 620h1v1h-1zM765 624h1v1h-1zM765 628h1v1h-1zM765 632h1v1h-1zM765 636h1v1h-1zM765 640h1v1h-1zM765 644h1v1h-1zM765 648h1v1h-1zM765 652h1v1h-1zM765 656h1v1h-1zM765 660h1v1h-1zM765 664h1v1h-1zM765 668h1v1h-1zM765 672h1v1h-1zM765 676h1v1h-1zM765 680h1v1h-1zM765 684h1v1h-1zM765 692h1v1h-1zM765 696h1v1h-1zM765 700h1v1h-1zM765 704h1v1h-1zM765 708h1v1h-1zM765 712h1v1h-1zM765 716h1v1h-1zM912 132h1v1h-1zM912 136h1v1h-1zM912 140h1v1h-1zM912 144h1v1h-1zM912 148h1v1h-1zM912 152h1v1h-1zM912 156h1v1h-1zM912 160h1v1h-1zM912 164h1v1h-1zM912 168h1v1h-1zM912 172h1v1h-1zM912 176h1v1h-1zM912 180h1v1h-1zM912 184h1v1h-1zM912 188h1v1h-1zM912 192h1v1h-1zM912 196h1v1h-1zM912 200h1v1h-1zM912 204h1v1h-1zM912 208h1v1h-1zM912 212h1v1h-1zM912 216h1v1h-1zM912 220h1v1h-1zM912 224h1v1h-1zM912 228h1v1h-1zM912 232h1v1h-1zM912 236h1v1h-1zM912 240h1v1h-1zM912 244h1v1h-1zM912 248h1v1h-1zM912 252h1v1h-1zM912 256h1v1h-1zM912 260h1v1h-1zM912 264h1v1h-1zM912 268h1v1h-1zM912 272h1v1h-1zM912 276h1v1h-1zM912 280h1v1h-1zM912 284h1v1h-1zM912 288h1v1h-1zM912 292h1v1h-1zM912 296h1v1h-1zM912 300h1v1h-1zM912 304h1v1h-1zM912 308h1v1h-1zM912 312h1v1h-1zM912 316h1v1h-1zM912 320h1v1h-1zM912 324h1v1h-1zM912 328h1v1h-1zM912 332h1v1h-1zM912 336h1v1h-1zM912 340h1v1h-1zM912 344h1v1h-1zM912 348h1v1h-1zM912 352h1v1h-1zM912 356h1v1h-1zM912 360h1v1h-1zM912 364h1v1h-1zM912 368h1v1h-1zM912 372h1v1h-1zM912 376h1v1h-1zM912 380h1v1h-1zM912 384h1v1h-1zM912 388h1v1h-1zM912 392h1v1h-1zM912 396h1v1h-1zM912 400h1v1h-1zM912 404h1v1h-1zM912 408h1v1h-1zM912 412h1v1h-1zM912 416h1v1h-1zM912 420h1v1h-1zM912 424h1v1h-1zM912 428h1v1h-1zM912 432h1v1h-1zM912 436h1v1h-1zM912 440h1v1h-1zM912 444h1v1h-1zM912 448h1v1h-1zM912 452h1v1h-1zM912 456h1v1h-1zM912 460h1v1h-1zM912 464h1v1h-1zM912 468h1v1h-1zM912 472h1v1h-1zM912 476h1v1h-1zM912 480h1v1h-1zM912 488h1v1h-1zM912 492h1v1h-1zM912 496h1v1h-1zM912 500h1v1h-1zM912 504h1v1h-1zM912 508h1v1h-1zM912 512h1v1h-1zM912 516h1v1h-1zM912 520h1v1h-1zM912 524h1v1h-1zM912 528h1v1h-1zM912 532h1v1h-1zM912 536h1v1h-1zM912 540h1v1h-1zM912 544h1v1h-1zM912 548h1v1h-1zM912 552h1v1h-1zM912 556h1v1h-1zM912 560h1v1h-1zM912 564h1v1h-1zM912 568h1v1h-1zM912 572h1v1h-1zM912 576h1v1h-1zM912 580h1v1h-1zM912 584h1v1h-1zM912 588h1v1h-1zM912 592h1v1h-1zM912 596h1v1h-1zM912 600h1v1h-1zM912 604h1v1h-1zM912 608h1v1h-1zM912 612h1v1h-1zM912 616h1v1h-1zM912 620h1v1h-1zM912 624h1v1h-1zM912 628h1v1h-1zM912 632h1v1h-1zM912 636h1v1h-1zM912 640h1v1h-1zM912 644h1v1h-1zM912 648h1v1h-1zM912 652h1v1h-1zM912 656h1v1h-1zM912 660h1v1h-1zM912 664h1v1h-1zM912 668h1v1h-1zM912 672h1v1h-1zM912 676h1v1h-1zM912 680h1v1h-1zM912 684h1v1h-1zM912 692h1v1h-1zM912 696h1v1h-1zM912 700h1v1h-1zM912 704h1v1h-1zM912 708h1v1h-1zM912 712h1v1h-1zM912 716h1v1h-1z"/>
<defs><clipPath id="pc"><rect x="2" y="131" width="1208" height="351"/></clipPath></defs>
<path d="M2 129.6 L5 130.3 L8 131 L11 131.7 L14 132.4 L17 133.1 L20 133.9 L23 134.6 L26 135.3 L29 136 L32 136.7 L35 137.5 L38 138.2 L41 138.9 L44 139.6 L47 140.4 L50 141.1 L53 141.9 L56 142.6 L59 143.3 L62 144.1 L65 144.8 L68 145.6 L71 146.3 L74 147 L77 147.8 L80 148.5 L83 149.3 L86 150.1 L89 150.8 L92 151.6 L95 152.4 L98 153.1 L101 153.9 L104 154.7 L107 155.5 L110 156.3 L113 157.2 L116 158 L119 158.8 L122 159.7 L125 160.5 L128 161.4 L131 162.2 L134 163.1 L137 164 L140 164.9 L143 165.8 L146 166.7 L149 167.6 L152 168.5 L155 169.3 L158 170.2 L161 171.1 L164 172 L167 172.9 L170 173.8 L173 174.7 L176 175.6 L179 176.5 L182 177.4 L185 178.3 L188 179.1 L191 180 L194 180.9 L197 181.8 L200 182.7 L203 183.6 L206 184.4 L209 185.3 L212 186.2 L215 187.1 L218 188 L221 188.9 L224 189.7 L227 190.6 L230 191.5 L233 192.4 L236 193.3 L239 194.2 L242 195.1 L245 196 L248 197 L251 197.9 L254 198.8 L257 199.7 L260 200.7 L263 201.6 L266 202.5 L269 203.5 L272 204.4 L275 205.3 L278 206.2 L281 207.1 L284 208.1 L287 208.9 L290 209.8 L293 210.7 L296 211.6 L299 212.5 L302 213.3 L305 214.2 L308 215 L311 215.8 L314 216.7 L317 217.5 L320 218.3 L323 219.1 L326 219.9 L329 220.7 L332 221.5 L335 222.3 L338 223.1 L341 223.9 L344 224.6 L347 225.4 L350 226.2 L353 227 L356 227.8 L359 228.5 L362 229.3 L365 230.1 L368 230.8 L371 231.6 L374 232.4 L377 233.1 L380 233.9 L383 234.7 L386 235.4 L389 236.2 L392 236.9 L395 237.7 L398 238.4 L401 239.1 L404 239.9 L407 240.6 L410 241.3 L413 242 L416 242.7 L419 243.4 L422 244.1 L425 244.8 L428 245.4 L431 246.1 L434 246.7 L437 247.3 L440 247.9 L443 248.5 L446 249.1 L449 249.7 L452 250.2 L455 250.7 L458 251.2 L461 251.7 L464 252.2 L467 252.7 L470 253.1 L473 253.6 L476 254 L479 254.5 L482 254.9 L485 255.3 L488 255.8 L491 256.2 L494 256.6 L497 257 L500 257.4 L503 257.8 L506 258.3 L509 258.7 L512 259.1 L515 259.6 L518 260.1 L521 260.5 L524 261 L527 261.5 L530 261.9 L533 262.3 L536 262.8 L539 263.1 L542 263.5 L545 263.8 L548 264.1 L551 264.3 L554 264.6 L557 264.8 L560 264.9 L563 265.1 L566 265.2 L569 265.3 L572 265.4 L575 265.5 L578 265.6 L581 265.6 L584 265.7 L587 265.7 L590 265.8 L593 265.8 L596 265.9 L599 266 L602 266 L605 266.1 L608 266.2 L611 266.3 L614 266.4 L617 266.5 L620 266.5 L623 266.6 L626 266.6 L629 266.6 L632 266.5 L635 266.4 L638 266.3 L641 266.1 L644 266 L647 265.9 L650 265.7 L653 265.5 L656 265.3 L659 265.1 L662 264.8 L665 264.4 L668 264.1 L671 263.6 L674 263.2 L677 262.7 L680 262.1 L683 261.6 L686 261 L689 260.5 L692 259.9 L695 259.3 L698 258.7 L701 258.2 L704 257.6 L707 257 L710 256.5 L713 255.9 L716 255.4 L719 254.8 L722 254.2 L725 253.6 L728 253 L731 252.3 L734 251.6 L737 250.9 L740 250.1 L743 249.3 L746 248.4 L749 247.5 L752 246.6 L755 245.6 L758 244.7 L761 243.7 L764 242.7 L767 241.6 L770 240.6 L773 239.5 L776 238.4 L779 237.3 L782 236.2 L785 235.1 L788 234 L791 232.9 L794 231.8 L797 230.7 L800 229.6 L803 228.5 L806 227.3 L809 226.2 L812 225.1 L815 223.9 L818 222.7 L821 221.5 L824 220.2 L827 218.8 L830 217.4 L833 216 L836 214.5 L839 212.9 L842 211.4 L845 209.8 L848 208.3 L851 206.7 L854 205.2 L857 203.7 L860 202.2 L863 200.7 L866 199.1 L869 197.4 L872 195.6 L875 193.8 L878 191.9 L881 189.9 L884 187.9 L887 185.9 L890 183.9 L893 182 L896 180.1 L899 178.2 L902 176.3 L905 174.4 L908 172.5 L911 170.5 L914 168.5 L917 166.4 L920 164.2 L923 162 L926 159.7 L929 157.4 L932 155 L935 152.6 L938 150.2 L941 147.8 L944 145.4 L947 143 L950 140.6 L953 138.3 L956 135.9 L959 133.5 L962 131.2 L965 128.8 L968 126.4 L971 124.1 L974 121.7 L976 120.1 L976 122.7 L974 124.3 L971 126.6 L968 129 L965 131.3 L962 133.7 L959 136.1 L956 138.5 L953 140.8 L950 143.2 L947 145.6 L944 148 L941 150.4 L938 152.8 L935 155.2 L932 157.5 L929 159.9 L926 162.2 L923 164.5 L920 166.7 L917 168.8 L914 170.9 L911 172.9 L908 174.9 L905 176.8 L902 178.7 L899 180.5 L896 182.4 L893 184.3 L890 186.2 L887 188.2 L884 190.3 L881 192.3 L878 194.3 L875 196.1 L872 198 L869 199.7 L866 201.4 L863 202.9 L860 204.5 L857 206 L854 207.5 L851 209 L848 210.5 L845 212.1 L842 213.6 L839 215.2 L836 216.7 L833 218.2 L830 219.7 L827 221 L824 222.4 L821 223.6 L818 224.8 L815 226 L812 227.2 L809 228.3 L806 229.5 L803 230.6 L800 231.7 L797 232.8 L794 233.9 L791 235 L788 236.1 L785 237.2 L782 238.4 L779 239.5 L776 240.6 L773 241.6 L770 242.7 L767 243.7 L764 244.8 L761 245.8 L758 246.8 L755 247.7 L752 248.7 L749 249.6 L746 250.5 L743 251.3 L740 252.1 L737 252.9 L734 253.7 L731 254.4 L728 255 L725 255.6 L722 256.2 L719 256.8 L716 257.4 L713 258 L710 258.5 L707 259.1 L704 259.6 L701 260.2 L698 260.8 L695 261.3 L692 261.9 L689 262.5 L686 263.1 L683 263.6 L680 264.2 L677 264.7 L674 265.2 L671 265.6 L668 266.1 L665 266.5 L662 266.8 L659 267.1 L656 267.3 L653 267.5 L650 267.7 L647 267.9 L644 268 L641 268.1 L638 268.3 L635 268.4 L632 268.5 L629 268.6 L626 268.6 L623 268.6 L620 268.5 L617 268.5 L614 268.4 L611 268.3 L608 268.2 L605 268.1 L602 268 L599 268 L596 267.9 L593 267.8 L590 267.8 L587 267.7 L584 267.7 L581 267.6 L578 267.6 L575 267.5 L572 267.4 L569 267.3 L566 267.2 L563 267.1 L560 266.9 L557 266.8 L554 266.6 L551 266.3 L548 266.1 L545 265.8 L542 265.5 L539 265.1 L536 264.8 L533 264.4 L530 263.9 L527 263.5 L524 263 L521 262.6 L518 262.1 L515 261.6 L512 261.2 L509 260.7 L506 260.3 L503 259.8 L500 259.4 L497 259 L494 258.6 L491 258.2 L488 257.8 L485 257.4 L482 256.9 L479 256.5 L476 256.1 L473 255.6 L470 255.1 L467 254.7 L464 254.2 L461 253.8 L458 253.3 L455 252.8 L452 252.2 L449 251.7 L446 251.1 L443 250.6 L440 250 L437 249.4 L434 248.8 L431 248.1 L428 247.5 L425 246.8 L422 246.1 L419 245.5 L416 244.8 L413 244.1 L410 243.4 L407 242.7 L404 241.9 L401 241.2 L398 240.5 L395 239.7 L392 239 L389 238.2 L386 237.5 L383 236.7 L380 236 L377 235.2 L374 234.4 L371 233.7 L368 232.9 L365 232.1 L362 231.4 L359 230.6 L356 229.8 L353 229 L350 228.3 L347 227.5 L344 226.7 L341 225.9 L338 225.1 L335 224.4 L332 223.6 L329 222.8 L326 222 L323 221.2 L320 220.4 L317 219.6 L314 218.7 L311 217.9 L308 217.1 L305 216.2 L302 215.4 L299 214.5 L296 213.7 L293 212.8 L290 211.9 L287 211 L284 210.1 L281 209.2 L278 208.3 L275 207.4 L272 206.5 L269 205.6 L266 204.6 L263 203.7 L260 202.8 L257 201.8 L254 200.9 L251 200 L248 199 L245 198.1 L242 197.2 L239 196.3 L236 195.4 L233 194.5 L230 193.6 L227 192.7 L224 191.8 L221 190.9 L218 190.1 L215 189.2 L212 188.3 L209 187.4 L206 186.5 L203 185.6 L200 184.8 L197 183.9 L194 183 L191 182.1 L188 181.2 L185 180.3 L182 179.5 L179 178.6 L176 177.7 L173 176.8 L170 175.9 L167 175 L164 174.1 L161 173.2 L158 172.3 L155 171.4 L152 170.5 L149 169.6 L146 168.8 L143 167.9 L140 167 L137 166.1 L134 165.2 L131 164.3 L128 163.4 L125 162.6 L122 161.7 L119 160.9 L116 160.1 L113 159.2 L110 158.4 L107 157.6 L104 156.8 L101 156 L98 155.2 L95 154.4 L92 153.7 L89 152.9 L86 152.1 L83 151.4 L80 150.6 L77 149.9 L74 149.1 L71 148.4 L68 147.6 L65 146.9 L62 146.1 L59 145.4 L56 144.7 L53 143.9 L50 143.2 L47 142.4 L44 141.7 L41 141 L38 140.2 L35 139.5 L32 138.8 L29 138.1 L26 137.3 L23 136.6 L20 135.9 L17 135.2 L14 134.5 L11 133.8 L8 133.1 L5 132.3 L2 131.6Z" fill="#ff0000" shape-rendering="auto" clip-path="url(#pc)" />
<path d="M2 331.6 L5 332.3 L8 333 L11 333.7 L14 334.4 L17 335.1 L20 335.9 L23 336.6 L26 337.3 L29 338 L32 338.7 L35 339.5 L38 340.2 L41 340.9 L44 341.6 L47 342.4 L50 343.1 L53 343.9 L56 344.6 L59 345.3 L62 346.1 L65 346.8 L68 347.6 L71 348.3 L74 349 L77 349.8 L80 350.5 L83 351.3 L86 352.1 L89 352.8 L92 353.6 L95 354.4 L98 355.1 L101 355.9 L104 356.7 L107 357.5 L110 358.3 L113 359.2 L116 360 L119 360.8 L122 361.7 L125 362.5 L128 363.4 L131 364.2 L134 365.1 L137 366 L140 366.9 L143 367.8 L146 368.7 L149 369.6 L152 370.5 L155 371.4 L158 372.3 L161 373.2 L164 374.1 L167 375 L170 375.9 L173 376.8 L176 377.7 L179 378.6 L182 379.5 L185 380.4 L188 381.3 L191 382.2 L194 383.1 L197 384 L200 384.9 L203 385.8 L206 386.7 L209 387.6 L212 388.4 L215 389.3 L218 390.2 L221 391.1 L224 392 L227 392.9 L230 393.8 L233 394.7 L236 395.7 L239 396.6 L242 397.5 L245 398.4 L248 399.3 L251 400.3 L254 401.2 L257 402.1 L260 403.1 L263 404 L266 405 L269 405.9 L272 406.9 L275 407.8 L278 408.7 L281 409.6 L284 410.6 L287 411.5 L290 412.4 L293 413.3 L296 414.1 L299 415 L302 415.9 L305 416.7 L308 417.6 L311 418.4 L314 419.3 L317 420.1 L320 420.9 L323 421.8 L326 422.6 L329 423.4 L332 424.2 L335 425 L338 425.8 L341 426.6 L344 427.4 L347 428.2 L350 429 L353 429.7 L356 430.5 L359 431.3 L362 432.1 L365 432.9 L368 433.7 L371 434.4 L374 435.2 L377 436 L380 436.8 L383 437.5 L386 438.3 L389 439.1 L392 439.8 L395 440.6 L398 441.3 L401 442.1 L404 442.8 L407 443.6 L410 444.3 L413 445 L416 445.7 L419 446.4 L422 447.1 L425 447.8 L428 448.5 L431 449.1 L434 449.8 L437 450.4 L440 451 L443 451.6 L446 452.2 L449 452.8 L452 453.3 L455 453.9 L458 454.4 L461 454.9 L464 455.4 L467 455.9 L470 456.3 L473 456.8 L476 457.2 L479 457.6 L482 458.1 L485 458.5 L488 458.9 L491 459.3 L494 459.7 L497 460.1 L500 460.5 L503 460.9 L506 461.3 L509 461.7 L512 462.2 L515 462.6 L518 463.1 L521 463.6 L524 464 L527 464.5 L530 464.9 L533 465.3 L536 465.7 L539 466.1 L542 466.4 L545 466.7 L548 467 L551 467.2 L554 467.5 L557 467.6 L560 467.8 L563 467.9 L566 468.1 L569 468.1 L572 468.2 L575 468.3 L578 468.4 L581 468.4 L584 468.4 L587 468.5 L590 468.5 L593 468.6 L596 468.6 L599 468.7 L602 468.7 L605 468.8 L608 468.9 L611 469 L614 469.1 L617 469.1 L620 469.2 L623 469.2 L626 469.2 L629 469.2 L632 469.1 L635 469 L638 469 L641 468.9 L644 468.8 L647 468.7 L650 468.6 L653 468.4 L656 468.3 L659 468.1 L662 467.8 L665 467.5 L668 467.2 L671 466.8 L674 466.3 L677 465.9 L680 465.4 L683 464.9 L686 464.4 L689 463.8 L692 463.3 L695 462.8 L698 462.2 L701 461.7 L704 461.2 L707 460.7 L710 460.2 L713 459.7 L716 459.1 L719 458.6 L722 458 L725 457.5 L728 456.9 L731 456.3 L734 455.6 L737 454.9 L740 454.2 L743 453.5 L746 452.7 L749 451.9 L752 451 L755 450.1 L758 449.2 L761 448.3 L764 447.4 L767 446.4 L770 445.4 L773 444.4 L776 443.4 L779 442.4 L782 441.4 L785 440.3 L788 439.2 L791 438.2 L794 437.1 L797 436 L800 434.9 L803 433.7 L806 432.6 L809 431.5 L812 430.3 L815 429.2 L818 428 L821 426.7 L824 425.4 L827 424.1 L830 422.7 L833 421.2 L836 419.7 L839 418.2 L842 416.6 L845 415.1 L848 413.5 L851 412 L854 410.5 L857 409 L860 407.5 L863 405.9 L866 404.3 L869 402.6 L872 400.8 L875 399 L878 397.1 L881 395.1 L884 393.2 L887 391.2 L890 389.3 L893 387.5 L896 385.7 L899 383.9 L902 382.1 L905 380.3 L908 378.4 L911 376.5 L914 374.5 L917 372.4 L920 370.2 L923 368 L926 365.7 L929 363.4 L932 361 L935 358.6 L938 356.2 L941 353.8 L944 351.4 L947 349 L950 346.6 L953 344.3 L956 341.9 L959 339.5 L962 337.2 L965 334.8 L968 332.4 L971 330.1 L974 327.7 L976 326.1 L976 328.7 L974 330.3 L971 332.6 L968 335 L965 337.3 L962 339.7 L959 342.1 L956 344.5 L953 346.8 L950 349.2 L947 351.6 L944 354 L941 356.4 L938 358.8 L935 361.2 L932 363.5 L929 365.9 L926 368.2 L923 370.5 L920 372.7 L917 374.8 L914 376.9 L911 378.9 L908 380.8 L905 382.6 L902 384.4 L899 386.2 L896 388 L893 389.8 L890 391.7 L887 393.6 L884 395.6 L881 397.5 L878 399.5 L875 401.4 L872 403.2 L869 404.9 L866 406.6 L863 408.2 L860 409.7 L857 411.2 L854 412.7 L851 414.2 L848 415.7 L845 417.3 L842 418.9 L839 420.4 L836 422 L833 423.5 L830 424.9 L827 426.3 L824 427.6 L821 428.9 L818 430.1 L815 431.3 L812 432.5 L809 433.6 L806 434.8 L803 435.9 L800 437 L797 438.1 L794 439.2 L791 440.3 L788 441.4 L785 442.4 L782 443.5 L779 444.5 L776 445.5 L773 446.5 L770 447.5 L767 448.5 L764 449.5 L761 450.4 L758 451.3 L755 452.2 L752 453.1 L749 453.9 L746 454.7 L743 455.5 L740 456.3 L737 457 L734 457.7 L731 458.3 L728 458.9 L725 459.5 L722 460.1 L719 460.6 L716 461.2 L713 461.7 L710 462.2 L707 462.7 L704 463.2 L701 463.7 L698 464.3 L695 464.8 L692 465.3 L689 465.9 L686 466.4 L683 466.9 L680 467.4 L677 467.9 L674 468.4 L671 468.8 L668 469.2 L665 469.5 L662 469.8 L659 470.1 L656 470.3 L653 470.5 L650 470.6 L647 470.7 L644 470.8 L641 470.9 L638 471 L635 471 L632 471.1 L629 471.2 L626 471.2 L623 471.2 L620 471.2 L617 471.1 L614 471.1 L611 471 L608 470.9 L605 470.8 L602 470.7 L599 470.7 L596 470.6 L593 470.6 L590 470.5 L587 470.5 L584 470.4 L581 470.4 L578 470.4 L575 470.3 L572 470.2 L569 470.1 L566 470.1 L563 469.9 L560 469.8 L557 469.6 L554 469.5 L551 469.2 L548 469 L545 468.7 L542 468.4 L539 468.1 L536 467.7 L533 467.3 L530 466.9 L527 466.5 L524 466 L521 465.6 L518 465.1 L515 464.7 L512 464.2 L509 463.8 L506 463.3 L503 462.9 L500 462.5 L497 462.1 L494 461.7 L491 461.3 L488 460.9 L485 460.5 L482 460.1 L479 459.7 L476 459.2 L473 458.8 L470 458.3 L467 457.9 L464 457.4 L461 456.9 L458 456.4 L455 455.9 L452 455.4 L449 454.8 L446 454.2 L443 453.7 L440 453.1 L437 452.5 L434 451.8 L431 451.2 L428 450.5 L425 449.9 L422 449.2 L419 448.5 L416 447.8 L413 447.1 L410 446.3 L407 445.6 L404 444.9 L401 444.1 L398 443.4 L395 442.7 L392 441.9 L389 441.1 L386 440.4 L383 439.6 L380 438.8 L377 438.1 L374 437.3 L371 436.5 L368 435.7 L365 434.9 L362 434.2 L359 433.4 L356 432.6 L353 431.8 L350 431 L347 430.2 L344 429.4 L341 428.7 L338 427.9 L335 427.1 L332 426.3 L329 425.5 L326 424.6 L323 423.8 L320 423 L317 422.2 L314 421.4 L311 420.5 L308 419.7 L305 418.8 L302 418 L299 417.1 L296 416.2 L293 415.3 L290 414.5 L287 413.6 L284 412.7 L281 411.7 L278 410.8 L275 409.9 L272 409 L269 408 L266 407.1 L263 406.1 L260 405.2 L257 404.2 L254 403.3 L251 402.4 L248 401.4 L245 400.5 L242 399.6 L239 398.7 L236 397.7 L233 396.8 L230 395.9 L227 395 L224 394.1 L221 393.2 L218 392.3 L215 391.4 L212 390.5 L209 389.6 L206 388.7 L203 387.9 L200 387 L197 386.1 L194 385.2 L191 384.3 L188 383.4 L185 382.5 L182 381.6 L179 380.7 L176 379.8 L173 378.9 L170 378 L167 377.1 L164 376.2 L161 375.3 L158 374.4 L155 373.5 L152 372.6 L149 371.7 L146 370.8 L143 369.9 L140 369 L137 368.1 L134 367.2 L131 366.3 L128 365.4 L125 364.6 L122 363.7 L119 362.9 L116 362.1 L113 361.2 L110 360.4 L107 359.6 L104 358.8 L101 358 L98 357.2 L95 356.4 L92 355.7 L89 354.9 L86 354.1 L83 353.4 L80 352.6 L77 351.9 L74 351.1 L71 350.4 L68 349.6 L65 348.9 L62 348.1 L59 347.4 L56 346.7 L53 345.9 L50 345.2 L47 344.4 L44 343.7 L41 343 L38 342.2 L35 341.5 L32 340.8 L29 340.1 L26 339.3 L23 338.6 L20 337.9 L17 337.2 L14 336.5 L11 335.8 L8 335.1 L5 334.3 L2 333.6Z" fill="#ff0000" shape-rendering="auto" clip-path="url(#pc)" />
<path d="M2 162 L5 162.7 L8 163.4 L11 164.1 L14 164.8 L17 165.5 L20 166.2 L23 167 L26 167.7 L29 168.4 L32 169.1 L35 169.8 L38 170.6 L41 171.3 L44 172 L47 172.8 L50 173.5 L53 174.2 L56 175 L59 175.7 L62 176.5 L65 177.2 L68 177.9 L71 178.7 L74 179.4 L77 180.2 L80 180.9 L83 181.7 L86 182.4 L89 183.2 L92 184 L95 184.7 L98 185.5 L101 186.3 L104 187.1 L107 187.9 L110 188.7 L113 189.5 L116 190.3 L119 191.2 L122 192 L125 192.9 L128 193.7 L131 194.6 L134 195.5 L137 196.4 L140 197.2 L143 198.1 L146 199 L149 199.9 L152 200.8 L155 201.7 L158 202.7 L161 203.6 L164 204.5 L167 205.4 L170 206.3 L173 207.2 L176 208.1 L179 209 L182 209.9 L185 210.8 L188 211.7 L191 212.5 L194 213.4 L197 214.3 L200 215.2 L203 216.1 L206 217 L209 217.9 L212 218.8 L215 219.7 L218 220.6 L221 221.5 L224 222.4 L227 223.3 L230 224.2 L233 225.1 L236 226 L239 226.9 L242 227.8 L245 228.7 L248 229.7 L251 230.6 L254 231.5 L257 232.5 L260 233.4 L263 234.4 L266 235.3 L269 236.2 L272 237.2 L275 238.1 L278 239.1 L281 240 L284 240.9 L287 241.8 L290 242.7 L293 243.6 L296 244.5 L299 245.3 L302 246.2 L305 247.1 L308 247.9 L311 248.8 L314 249.6 L317 250.4 L320 251.3 L323 252.1 L326 252.9 L329 253.7 L332 254.5 L335 255.3 L338 256.1 L341 256.9 L344 257.7 L347 258.5 L350 259.3 L353 260.1 L356 260.8 L359 261.6 L362 262.4 L365 263.2 L368 264 L371 264.7 L374 265.5 L377 266.3 L380 267.1 L383 267.8 L386 268.6 L389 269.4 L392 270.1 L395 270.9 L398 271.6 L401 272.4 L404 273.1 L407 273.9 L410 274.6 L413 275.3 L416 276 L419 276.7 L422 277.4 L425 278.1 L428 278.8 L431 279.4 L434 280.1 L437 280.7 L440 281.3 L443 281.9 L446 282.5 L449 283.1 L452 283.6 L455 284.2 L458 284.7 L461 285.2 L464 285.7 L467 286.1 L470 286.6 L473 287.1 L476 287.5 L479 287.9 L482 288.3 L485 288.8 L488 289.2 L491 289.6 L494 290 L497 290.4 L500 290.8 L503 291.2 L506 291.6 L509 292 L512 292.5 L515 292.9 L518 293.4 L521 293.8 L524 294.3 L527 294.7 L530 295.2 L533 295.6 L536 296 L539 296.3 L542 296.7 L545 297 L548 297.3 L551 297.5 L554 297.7 L557 297.9 L560 298.1 L563 298.2 L566 298.3 L569 298.4 L572 298.5 L575 298.6 L578 298.6 L581 298.7 L584 298.7 L587 298.7 L590 298.8 L593 298.8 L596 298.9 L599 298.9 L602 299 L605 299.1 L608 299.2 L611 299.2 L614 299.3 L617 299.4 L620 299.4 L623 299.5 L626 299.5 L629 299.4 L632 299.4 L635 299.3 L638 299.2 L641 299.1 L644 299 L647 298.9 L650 298.8 L653 298.7 L656 298.5 L659 298.3 L662 298.1 L665 297.7 L668 297.4 L671 297 L674 296.6 L677 296.1 L680 295.6 L683 295.1 L686 294.6 L689 294.1 L692 293.5 L695 293 L698 292.5 L701 291.9 L704 291.4 L707 290.9 L710 290.4 L713 289.9 L716 289.4 L719 288.8 L722 288.3 L725 287.7 L728 287.1 L731 286.5 L734 285.8 L737 285.2 L740 284.4 L743 283.7 L746 282.9 L749 282.1 L752 281.2 L755 280.3 L758 279.4 L761 278.5 L764 277.6 L767 276.6 L770 275.6 L773 274.6 L776 273.6 L779 272.6 L782 271.6 L785 270.5 L788 269.4 L791 268.4 L794 267.3 L797 266.2 L800 265.1 L803 263.9 L806 262.7 L809 261.6 L812 260.4 L815 259.2 L818 257.9 L821 256.7 L824 255.3 L827 254 L830 252.5 L833 251 L836 249.5 L839 247.9 L842 246.3 L845 244.7 L848 243.1 L851 241.6 L854 240.1 L857 238.7 L860 237.2 L863 235.7 L866 234.2 L869 232.5 L872 230.8 L875 229 L878 227.1 L881 225.2 L884 223.3 L887 221.4 L890 219.6 L893 217.7 L896 216 L899 214.2 L902 212.5 L905 210.7 L908 208.9 L911 206.9 L914 204.9 L917 202.8 L920 200.5 L923 198.3 L926 195.9 L929 193.5 L932 191.1 L935 188.7 L938 186.3 L941 183.8 L944 181.4 L947 179 L950 176.5 L953 174.1 L956 171.7 L959 169.3 L962 166.9 L965 164.5 L968 162.1 L971 159.6 L974 157.2 L976 155.6 L976 158.2 L974 159.8 L971 162.2 L968 164.6 L965 167 L962 169.4 L959 171.8 L956 174.2 L953 176.7 L950 179.1 L947 181.5 L944 183.9 L941 186.4 L938 188.8 L935 191.3 L932 193.7 L929 196.1 L926 198.4 L923 200.8 L920 203 L917 205.2 L914 207.3 L911 209.3 L908 211.3 L905 213.1 L902 214.8 L899 216.6 L896 218.3 L893 220.1 L890 221.9 L887 223.8 L884 225.7 L881 227.6 L878 229.5 L875 231.3 L872 233.1 L869 234.8 L866 236.4 L863 238 L860 239.5 L857 240.9 L854 242.4 L851 243.8 L848 245.4 L845 247 L842 248.6 L839 250.2 L836 251.7 L833 253.3 L830 254.7 L827 256.2 L824 257.5 L821 258.8 L818 260.1 L815 261.3 L812 262.5 L809 263.7 L806 264.9 L803 266 L800 267.2 L797 268.3 L794 269.4 L791 270.5 L788 271.6 L785 272.6 L782 273.7 L779 274.7 L776 275.7 L773 276.7 L770 277.7 L767 278.7 L764 279.7 L761 280.6 L758 281.5 L755 282.4 L752 283.3 L749 284.1 L746 285 L743 285.7 L740 286.5 L737 287.2 L734 287.9 L731 288.5 L728 289.2 L725 289.7 L722 290.3 L719 290.8 L716 291.4 L713 291.9 L710 292.4 L707 292.9 L704 293.4 L701 294 L698 294.5 L695 295 L692 295.6 L689 296.1 L686 296.6 L683 297.2 L680 297.7 L677 298.1 L674 298.6 L671 299 L668 299.4 L665 299.8 L662 300.1 L659 300.3 L656 300.5 L653 300.7 L650 300.8 L647 300.9 L644 301 L641 301.1 L638 301.2 L635 301.3 L632 301.4 L629 301.4 L626 301.5 L623 301.5 L620 301.4 L617 301.4 L614 301.3 L611 301.2 L608 301.2 L605 301.1 L602 301 L599 300.9 L596 300.9 L593 300.8 L590 300.8 L587 300.7 L584 300.7 L581 300.7 L578 300.6 L575 300.6 L572 300.5 L569 300.4 L566 300.3 L563 300.2 L560 300.1 L557 299.9 L554 299.7 L551 299.5 L548 299.3 L545 299 L542 298.7 L539 298.4 L536 298 L533 297.6 L530 297.2 L527 296.7 L524 296.3 L521 295.8 L518 295.4 L515 294.9 L512 294.5 L509 294 L506 293.6 L503 293.2 L500 292.8 L497 292.4 L494 292 L491 291.6 L488 291.2 L485 290.8 L482 290.4 L479 289.9 L476 289.5 L473 289.1 L470 288.6 L467 288.2 L464 287.7 L461 287.2 L458 286.7 L455 286.2 L452 285.7 L449 285.1 L446 284.5 L443 284 L440 283.4 L437 282.7 L434 282.1 L431 281.5 L428 280.8 L425 280.1 L422 279.5 L419 278.8 L416 278.1 L413 277.4 L410 276.6 L407 275.9 L404 275.2 L401 274.4 L398 273.7 L395 273 L392 272.2 L389 271.4 L386 270.7 L383 269.9 L380 269.1 L377 268.4 L374 267.6 L371 266.8 L368 266 L365 265.3 L362 264.5 L359 263.7 L356 262.9 L353 262.1 L350 261.3 L347 260.5 L344 259.8 L341 259 L338 258.2 L335 257.4 L332 256.6 L329 255.8 L326 255 L323 254.2 L320 253.3 L317 252.5 L314 251.7 L311 250.8 L308 250 L305 249.2 L302 248.3 L299 247.4 L296 246.6 L293 245.7 L290 244.8 L287 243.9 L284 243 L281 242.1 L278 241.1 L275 240.2 L272 239.3 L269 238.3 L266 237.4 L263 236.5 L260 235.5 L257 234.6 L254 233.6 L251 232.7 L248 231.8 L245 230.8 L242 229.9 L239 229 L236 228.1 L233 227.2 L230 226.3 L227 225.4 L224 224.5 L221 223.6 L218 222.7 L215 221.8 L212 220.9 L209 220 L206 219.1 L203 218.2 L200 217.3 L197 216.4 L194 215.5 L191 214.6 L188 213.7 L185 212.8 L182 212 L179 211.1 L176 210.2 L173 209.3 L170 208.4 L167 207.5 L164 206.6 L161 205.6 L158 204.7 L155 203.8 L152 202.9 L149 202 L146 201.1 L143 200.2 L140 199.3 L137 198.4 L134 197.6 L131 196.7 L128 195.8 L125 194.9 L122 194.1 L119 193.3 L116 192.4 L113 191.6 L110 190.8 L107 190 L104 189.2 L101 188.4 L98 187.6 L95 186.8 L92 186 L89 185.3 L86 184.5 L83 183.7 L80 183 L77 182.2 L74 181.5 L71 180.7 L68 180 L65 179.3 L62 178.5 L59 177.8 L56 177 L53 176.3 L50 175.6 L47 174.8 L44 174.1 L41 173.4 L38 172.6 L35 171.9 L32 171.2 L29 170.5 L26 169.7 L23 169 L20 168.3 L17 167.6 L14 166.9 L11 166.2 L8 165.4 L5 164.7 L2 164Z" fill="#a870e0" shape-rendering="auto" clip-path="url(#pc)" />
<path d="M2 297.6 L5 298.3 L8 299 L11 299.7 L14 300.4 L17 301.1 L20 301.9 L23 302.6 L26 303.3 L29 304 L32 304.7 L35 305.5 L38 306.2 L41 306.9 L44 307.6 L47 308.4 L50 309.1 L53 309.9 L56 310.6 L59 311.3 L62 312.1 L65 312.8 L68 313.6 L71 314.3 L74 315 L77 315.8 L80 316.5 L83 317.3 L86 318.1 L89 318.8 L92 319.6 L95 320.4 L98 321.1 L101 321.9 L104 322.7 L107 323.5 L110 324.3 L113 325.2 L116 326 L119 326.8 L122 327.7 L125 328.5 L128 329.4 L131 330.2 L134 331.1 L137 332 L140 332.9 L143 333.8 L146 334.7 L149 335.6 L152 336.5 L155 337.4 L158 338.3 L161 339.2 L164 340.1 L167 341 L170 341.9 L173 342.8 L176 343.7 L179 344.6 L182 345.5 L185 346.4 L188 347.3 L191 348.2 L194 349.1 L197 350 L200 350.9 L203 351.8 L206 352.7 L209 353.6 L212 354.4 L215 355.3 L218 356.2 L221 357.1 L224 358 L227 358.9 L230 359.8 L233 360.7 L236 361.7 L239 362.6 L242 363.5 L245 364.4 L248 365.3 L251 366.3 L254 367.2 L257 368.1 L260 369.1 L263 370 L266 371 L269 371.9 L272 372.9 L275 373.8 L278 374.7 L281 375.6 L284 376.6 L287 377.5 L290 378.4 L293 379.3 L296 380.1 L299 381 L302 381.9 L305 382.7 L308 383.6 L311 384.4 L314 385.3 L317 386.1 L320 386.9 L323 387.8 L326 388.6 L329 389.4 L332 390.2 L335 391 L338 391.8 L341 392.6 L344 393.4 L347 394.2 L350 395 L353 395.7 L356 396.5 L359 397.3 L362 398.1 L365 398.9 L368 399.7 L371 400.4 L374 401.2 L377 402 L380 402.8 L383 403.5 L386 404.3 L389 405.1 L392 405.8 L395 406.6 L398 407.3 L401 408.1 L404 408.8 L407 409.6 L410 410.3 L413 411 L416 411.7 L419 412.4 L422 413.1 L425 413.8 L428 414.5 L431 415.1 L434 415.8 L437 416.4 L440 417 L443 417.6 L446 418.2 L449 418.8 L452 419.3 L455 419.9 L458 420.4 L461 420.9 L464 421.4 L467 421.9 L470 422.3 L473 422.8 L476 423.2 L479 423.6 L482 424.1 L485 424.5 L488 424.9 L491 425.3 L494 425.7 L497 426.1 L500 426.5 L503 426.9 L506 427.3 L509 427.7 L512 428.2 L515 428.6 L518 429.1 L521 429.6 L524 430 L527 430.5 L530 430.9 L533 431.3 L536 431.7 L539 432.1 L542 432.4 L545 432.7 L548 433 L551 433.2 L554 433.5 L557 433.6 L560 433.8 L563 433.9 L566 434.1 L569 434.1 L572 434.2 L575 434.3 L578 434.4 L581 434.4 L584 434.4 L587 434.5 L590 434.5 L593 434.6 L596 434.6 L599 434.7 L602 434.7 L605 434.8 L608 434.9 L611 435 L614 435.1 L617 435.1 L620 435.2 L623 435.2 L626 435.2 L629 435.2 L632 435.1 L635 435 L638 435 L641 434.9 L644 434.8 L647 434.7 L650 434.6 L653 434.4 L656 434.3 L659 434.1 L662 433.8 L665 433.5 L668 433.2 L671 432.8 L674 432.3 L677 431.9 L680 431.4 L683 430.9 L686 430.4 L689 429.8 L692 429.3 L695 428.8 L698 428.2 L701 427.7 L704 427.2 L707 426.7 L710 426.2 L713 425.7 L716 425.1 L719 424.6 L722 424 L725 423.5 L728 422.9 L731 422.3 L734 421.6 L737 420.9 L740 420.2 L743 419.5 L746 418.7 L749 417.9 L752 417 L755 416.1 L758 415.2 L761 414.3 L764 413.4 L767 412.4 L770 411.4 L773 410.4 L776 409.4 L779 408.4 L782 407.4 L785 406.3 L788 405.2 L791 404.2 L794 403.1 L797 402 L800 400.9 L803 399.7 L806 398.6 L809 397.5 L812 396.3 L815 395.2 L818 394 L821 392.7 L824 391.4 L827 390.1 L830 388.7 L833 387.2 L836 385.7 L839 384.2 L842 382.6 L845 381.1 L848 379.5 L851 378 L854 376.5 L857 375 L860 373.5 L863 371.9 L866 370.3 L869 368.6 L872 366.8 L875 365 L878 363.1 L881 361.1 L884 359.2 L887 357.2 L890 355.3 L893 353.5 L896 351.7 L899 349.9 L902 348.1 L905 346.3 L908 344.4 L911 342.5 L914 340.5 L917 338.4 L920 336.2 L923 334 L926 331.7 L929 329.4 L932 327 L935 324.6 L938 322.2 L941 319.8 L944 317.4 L947 315 L950 312.6 L953 310.3 L956 307.9 L959 305.5 L962 303.2 L965 300.8 L968 298.4 L971 296.1 L974 293.7 L976 292.1 L976 294.7 L974 296.3 L971 298.6 L968 301 L965 303.3 L962 305.7 L959 308.1 L956 310.5 L953 312.8 L950 315.2 L947 317.6 L944 320 L941 322.4 L938 324.8 L935 327.2 L932 329.5 L929 331.9 L926 334.2 L923 336.5 L920 338.7 L917 340.8 L914 342.9 L911 344.9 L908 346.8 L905 348.6 L902 350.4 L899 352.2 L896 354 L893 355.8 L890 357.7 L887 359.6 L884 361.6 L881 363.5 L878 365.5 L875 367.4 L872 369.2 L869 370.9 L866 372.6 L863 374.2 L860 375.7 L857 377.2 L854 378.7 L851 380.2 L848 381.7 L845 383.3 L842 384.9 L839 386.4 L836 388 L833 389.5 L830 390.9 L827 392.3 L824 393.6 L821 394.9 L818 396.1 L815 397.3 L812 398.5 L809 399.6 L806 400.8 L803 401.9 L800 403 L797 404.1 L794 405.2 L791 406.3 L788 407.4 L785 408.4 L782 409.5 L779 410.5 L776 411.5 L773 412.5 L770 413.5 L767 414.5 L764 415.5 L761 416.4 L758 417.3 L755 418.2 L752 419.1 L749 419.9 L746 420.7 L743 421.5 L740 422.3 L737 423 L734 423.7 L731 424.3 L728 424.9 L725 425.5 L722 426.1 L719 426.6 L716 427.2 L713 427.7 L710 428.2 L707 428.7 L704 429.2 L701 429.7 L698 430.3 L695 430.8 L692 431.3 L689 431.9 L686 432.4 L683 432.9 L680 433.4 L677 433.9 L674 434.4 L671 434.8 L668 435.2 L665 435.5 L662 435.8 L659 436.1 L656 436.3 L653 436.5 L650 436.6 L647 436.7 L644 436.8 L641 436.9 L638 437 L635 437 L632 437.1 L629 437.2 L626 437.2 L623 437.2 L620 437.2 L617 437.1 L614 437.1 L611 437 L608 436.9 L605 436.8 L602 436.7 L599 436.7 L596 436.6 L593 436.6 L590 436.5 L587 436.5 L584 436.4 L581 436.4 L578 436.4 L575 436.3 L572 436.2 L569 436.1 L566 436.1 L563 435.9 L560 435.8 L557 435.6 L554 435.5 L551 435.2 L548 435 L545 434.7 L542 434.4 L539 434.1 L536 433.7 L533 433.3 L530 432.9 L527 432.5 L524 432 L521 431.6 L518 431.1 L515 430.7 L512 430.2 L509 429.8 L506 429.3 L503 428.9 L500 428.5 L497 428.1 L494 427.7 L491 427.3 L488 426.9 L485 426.5 L482 426.1 L479 425.7 L476 425.2 L473 424.8 L470 424.3 L467 423.9 L464 423.4 L461 422.9 L458 422.4 L455 421.9 L452 421.4 L449 420.8 L446 420.2 L443 419.7 L440 419.1 L437 418.5 L434 417.8 L431 417.2 L428 416.5 L425 415.9 L422 415.2 L419 414.5 L416 413.8 L413 413.1 L410 412.3 L407 411.6 L404 410.9 L401 410.1 L398 409.4 L395 408.7 L392 407.9 L389 407.1 L386 406.4 L383 405.6 L380 404.8 L377 404.1 L374 403.3 L371 402.5 L368 401.7 L365 400.9 L362 400.2 L359 399.4 L356 398.6 L353 397.8 L350 397 L347 396.2 L344 395.4 L341 394.7 L338 393.9 L335 393.1 L332 392.3 L329 391.5 L326 390.6 L323 389.8 L320 389 L317 388.2 L314 387.4 L311 386.5 L308 385.7 L305 384.8 L302 384 L299 383.1 L296 382.2 L293 381.3 L290 380.5 L287 379.6 L284 378.7 L281 377.7 L278 376.8 L275 375.9 L272 375 L269 374 L266 373.1 L263 372.1 L260 371.2 L257 370.2 L254 369.3 L251 368.4 L248 367.4 L245 366.5 L242 365.6 L239 364.7 L236 363.7 L233 362.8 L230 361.9 L227 361 L224 360.1 L221 359.2 L218 358.3 L215 357.4 L212 356.5 L209 355.6 L206 354.7 L203 353.9 L200 353 L197 352.1 L194 351.2 L191 350.3 L188 349.4 L185 348.5 L182 347.6 L179 346.7 L176 345.8 L173 344.9 L170 344 L167 343.1 L164 342.2 L161 341.3 L158 340.4 L155 339.5 L152 338.6 L149 337.7 L146 336.8 L143 335.9 L140 335 L137 334.1 L134 333.2 L131 332.3 L128 331.4 L125 330.6 L122 329.7 L119 328.9 L116 328.1 L113 327.2 L110 326.4 L107 325.6 L104 324.8 L101 324 L98 323.2 L95 322.4 L92 321.7 L89 320.9 L86 320.1 L83 319.4 L80 318.6 L77 317.9 L74 317.1 L71 316.4 L68 315.6 L65 314.9 L62 314.1 L59 313.4 L56 312.7 L53 311.9 L50 311.2 L47 310.4 L44 309.7 L41 309 L38 308.2 L35 307.5 L32 306.8 L29 306.1 L26 305.3 L23 304.6 L20 303.9 L17 303.2 L14 302.5 L11 301.8 L8 301.1 L5 300.3 L2 299.6Z" fill="#a870e0" shape-rendering="auto" clip-path="url(#pc)" />
<path d="M2 195.4 L5 196.1 L8 196.8 L11 197.5 L14 198.2 L17 199 L20 199.7 L23 200.4 L26 201.1 L29 201.9 L32 202.6 L35 203.3 L38 204 L41 204.8 L44 205.5 L47 206.3 L50 207 L53 207.7 L56 208.5 L59 209.2 L62 210 L65 210.7 L68 211.5 L71 212.2 L74 213 L77 213.7 L80 214.5 L83 215.2 L86 216 L89 216.8 L92 217.5 L95 218.3 L98 219.1 L101 219.9 L104 220.7 L107 221.5 L110 222.3 L113 223.1 L116 224 L119 224.8 L122 225.6 L125 226.5 L128 227.4 L131 228.2 L134 229.1 L137 230 L140 230.9 L143 231.8 L146 232.7 L149 233.6 L152 234.5 L155 235.4 L158 236.3 L161 237.3 L164 238.2 L167 239.1 L170 240 L173 240.9 L176 241.8 L179 242.7 L182 243.6 L185 244.5 L188 245.4 L191 246.3 L194 247.2 L197 248.1 L200 249 L203 249.9 L206 250.8 L209 251.7 L212 252.6 L215 253.5 L218 254.4 L221 255.3 L224 256.2 L227 257.1 L230 258 L233 258.9 L236 259.8 L239 260.7 L242 261.7 L245 262.6 L248 263.5 L251 264.5 L254 265.4 L257 266.4 L260 267.3 L263 268.3 L266 269.2 L269 270.1 L272 271.1 L275 272 L278 273 L281 273.9 L284 274.8 L287 275.7 L290 276.6 L293 277.5 L296 278.4 L299 279.3 L302 280.2 L305 281 L308 281.9 L311 282.7 L314 283.6 L317 284.4 L320 285.3 L323 286.1 L326 286.9 L329 287.7 L332 288.5 L335 289.3 L338 290.1 L341 290.9 L344 291.7 L347 292.5 L350 293.3 L353 294.1 L356 294.9 L359 295.7 L362 296.5 L365 297.3 L368 298.1 L371 298.8 L374 299.6 L377 300.4 L380 301.2 L383 302 L386 302.7 L389 303.5 L392 304.3 L395 305 L398 305.8 L401 306.5 L404 307.3 L407 308 L410 308.7 L413 309.5 L416 310.2 L419 310.9 L422 311.6 L425 312.3 L428 313 L431 313.6 L434 314.3 L437 314.9 L440 315.5 L443 316.1 L446 316.7 L449 317.3 L452 317.9 L455 318.4 L458 318.9 L461 319.4 L464 319.9 L467 320.4 L470 320.9 L473 321.3 L476 321.8 L479 322.2 L482 322.6 L485 323.1 L488 323.5 L491 323.9 L494 324.3 L497 324.7 L500 325.1 L503 325.5 L506 325.9 L509 326.4 L512 326.8 L515 327.3 L518 327.7 L521 328.2 L524 328.6 L527 329.1 L530 329.5 L533 329.9 L536 330.3 L539 330.7 L542 331.1 L545 331.4 L548 331.6 L551 331.9 L554 332.1 L557 332.3 L560 332.5 L563 332.6 L566 332.7 L569 332.8 L572 332.9 L575 333 L578 333 L581 333.1 L584 333.1 L587 333.2 L590 333.2 L593 333.3 L596 333.3 L599 333.4 L602 333.4 L605 333.5 L608 333.6 L611 333.7 L614 333.8 L617 333.8 L620 333.9 L623 333.9 L626 333.9 L629 333.9 L632 333.9 L635 333.8 L638 333.7 L641 333.6 L644 333.5 L647 333.4 L650 333.3 L653 333.2 L656 333 L659 332.8 L662 332.6 L665 332.3 L668 331.9 L671 331.5 L674 331.1 L677 330.7 L680 330.2 L683 329.7 L686 329.2 L689 328.6 L692 328.1 L695 327.6 L698 327 L701 326.5 L704 325.9 L707 325.4 L710 324.8 L713 324.3 L716 323.7 L719 323.1 L722 322.5 L725 321.9 L728 321.3 L731 320.6 L734 319.9 L737 319.2 L740 318.4 L743 317.6 L746 316.8 L749 315.9 L752 315 L755 314.1 L758 313.1 L761 312.2 L764 311.2 L767 310.2 L770 309.2 L773 308.1 L776 307.1 L779 306 L782 305 L785 303.9 L788 302.8 L791 301.7 L794 300.6 L797 299.4 L800 298.3 L803 297.1 L806 296 L809 294.8 L812 293.6 L815 292.4 L818 291.2 L821 289.9 L824 288.6 L827 287.3 L830 285.9 L833 284.5 L836 283 L839 281.4 L842 279.9 L845 278.3 L848 276.8 L851 275.3 L854 273.8 L857 272.3 L860 270.8 L863 269.2 L866 267.6 L869 266 L872 264.2 L875 262.3 L878 260.4 L881 258.5 L884 256.6 L887 254.6 L890 252.7 L893 250.9 L896 249 L899 247.2 L902 245.3 L905 243.5 L908 241.6 L911 239.6 L914 237.6 L917 235.6 L920 233.6 L923 231.4 L926 229.2 L929 227 L932 224.7 L935 222.4 L938 220.1 L941 217.8 L944 215.5 L947 213.2 L950 210.9 L953 208.6 L956 206.2 L959 203.9 L962 201.6 L965 199.2 L968 196.9 L971 194.5 L974 192.2 L976 190.6 L976 193.2 L974 194.7 L971 197.1 L968 199.4 L965 201.8 L962 204.1 L959 206.4 L956 208.8 L953 211.1 L950 213.4 L947 215.7 L944 218 L941 220.3 L938 222.6 L935 224.9 L932 227.2 L929 229.5 L926 231.7 L923 233.9 L920 236 L917 238.1 L914 240.1 L911 242 L908 243.9 L905 245.8 L902 247.7 L899 249.5 L896 251.3 L893 253.2 L890 255.1 L887 257 L884 258.9 L881 260.9 L878 262.8 L875 264.7 L872 266.5 L869 268.3 L866 269.9 L863 271.5 L860 273 L857 274.5 L854 276 L851 277.5 L848 279 L845 280.6 L842 282.1 L839 283.7 L836 285.2 L833 286.7 L830 288.1 L827 289.5 L824 290.8 L821 292.1 L818 293.4 L815 294.6 L812 295.8 L809 297 L806 298.1 L803 299.3 L800 300.4 L797 301.6 L794 302.7 L791 303.8 L788 304.9 L785 306 L782 307.1 L779 308.2 L776 309.2 L773 310.3 L770 311.3 L767 312.3 L764 313.3 L761 314.3 L758 315.2 L755 316.2 L752 317.1 L749 318 L746 318.8 L743 319.7 L740 320.5 L737 321.2 L734 322 L731 322.6 L728 323.3 L725 323.9 L722 324.5 L719 325.1 L716 325.7 L713 326.3 L710 326.8 L707 327.4 L704 328 L701 328.5 L698 329.1 L695 329.6 L692 330.1 L689 330.7 L686 331.2 L683 331.7 L680 332.2 L677 332.7 L674 333.1 L671 333.6 L668 333.9 L665 334.3 L662 334.6 L659 334.8 L656 335 L653 335.2 L650 335.3 L647 335.4 L644 335.5 L641 335.6 L638 335.7 L635 335.8 L632 335.9 L629 335.9 L626 335.9 L623 335.9 L620 335.9 L617 335.8 L614 335.8 L611 335.7 L608 335.6 L605 335.5 L602 335.5 L599 335.4 L596 335.3 L593 335.3 L590 335.2 L587 335.2 L584 335.1 L581 335.1 L578 335 L575 335 L572 334.9 L569 334.8 L566 334.7 L563 334.6 L560 334.5 L557 334.3 L554 334.1 L551 333.9 L548 333.6 L545 333.4 L542 333.1 L539 332.7 L536 332.4 L533 332 L530 331.5 L527 331.1 L524 330.7 L521 330.2 L518 329.7 L515 329.3 L512 328.8 L509 328.4 L506 327.9 L503 327.5 L500 327.1 L497 326.7 L494 326.3 L491 325.9 L488 325.5 L485 325.1 L482 324.7 L479 324.2 L476 323.8 L473 323.4 L470 322.9 L467 322.4 L464 322 L461 321.5 L458 320.9 L455 320.4 L452 319.9 L449 319.3 L446 318.8 L443 318.2 L440 317.6 L437 317 L434 316.3 L431 315.7 L428 315 L425 314.3 L422 313.6 L419 313 L416 312.2 L413 311.5 L410 310.8 L407 310.1 L404 309.3 L401 308.6 L398 307.8 L395 307.1 L392 306.3 L389 305.6 L386 304.8 L383 304 L380 303.2 L377 302.5 L374 301.7 L371 300.9 L368 300.1 L365 299.3 L362 298.5 L359 297.8 L356 297 L353 296.2 L350 295.4 L347 294.6 L344 293.8 L341 293 L338 292.2 L335 291.4 L332 290.6 L329 289.8 L326 289 L323 288.2 L320 287.3 L317 286.5 L314 285.7 L311 284.8 L308 284 L305 283.1 L302 282.3 L299 281.4 L296 280.5 L293 279.6 L290 278.7 L287 277.8 L284 276.9 L281 276 L278 275.1 L275 274.1 L272 273.2 L269 272.2 L266 271.3 L263 270.3 L260 269.4 L257 268.4 L254 267.5 L251 266.6 L248 265.6 L245 264.7 L242 263.8 L239 262.8 L236 261.9 L233 261 L230 260.1 L227 259.2 L224 258.3 L221 257.4 L218 256.5 L215 255.6 L212 254.7 L209 253.8 L206 252.9 L203 252 L200 251.1 L197 250.2 L194 249.3 L191 248.4 L188 247.5 L185 246.6 L182 245.7 L179 244.8 L176 243.9 L173 243 L170 242.1 L167 241.2 L164 240.3 L161 239.3 L158 238.4 L155 237.5 L152 236.6 L149 235.7 L146 234.8 L143 233.9 L140 233 L137 232.1 L134 231.2 L131 230.3 L128 229.4 L125 228.6 L122 227.7 L119 226.9 L116 226 L113 225.2 L110 224.4 L107 223.6 L104 222.8 L101 222 L98 221.2 L95 220.4 L92 219.6 L89 218.8 L86 218.1 L83 217.3 L80 216.5 L77 215.8 L74 215 L71 214.3 L68 213.5 L65 212.8 L62 212 L59 211.3 L56 210.5 L53 209.8 L50 209.1 L47 208.3 L44 207.6 L41 206.8 L38 206.1 L35 205.4 L32 204.6 L29 203.9 L26 203.2 L23 202.5 L20 201.7 L17 201 L14 200.3 L11 199.6 L8 198.9 L5 198.1 L2 197.4Z" fill="#ff8c48" shape-rendering="auto" clip-path="url(#pc)" />
<path d="M2 263.4 L5 264.1 L8 264.8 L11 265.5 L14 266.2 L17 266.9 L20 267.7 L23 268.4 L26 269.1 L29 269.8 L32 270.5 L35 271.3 L38 272 L41 272.7 L44 273.4 L47 274.2 L50 274.9 L53 275.7 L56 276.4 L59 277.1 L62 277.9 L65 278.6 L68 279.4 L71 280.1 L74 280.8 L77 281.6 L80 282.3 L83 283.1 L86 283.9 L89 284.6 L92 285.4 L95 286.2 L98 286.9 L101 287.7 L104 288.5 L107 289.3 L110 290.1 L113 291 L116 291.8 L119 292.6 L122 293.5 L125 294.3 L128 295.2 L131 296 L134 296.9 L137 297.8 L140 298.7 L143 299.6 L146 300.5 L149 301.4 L152 302.3 L155 303.2 L158 304.1 L161 305 L164 305.9 L167 306.8 L170 307.7 L173 308.6 L176 309.5 L179 310.4 L182 311.3 L185 312.2 L188 313.1 L191 314 L194 314.9 L197 315.8 L200 316.7 L203 317.6 L206 318.5 L209 319.4 L212 320.2 L215 321.1 L218 322 L221 322.9 L224 323.8 L227 324.7 L230 325.6 L233 326.5 L236 327.5 L239 328.4 L242 329.3 L245 330.2 L248 331.1 L251 332.1 L254 333 L257 333.9 L260 334.9 L263 335.8 L266 336.8 L269 337.7 L272 338.7 L275 339.6 L278 340.5 L281 341.4 L284 342.4 L287 343.3 L290 344.2 L293 345.1 L296 345.9 L299 346.8 L302 347.7 L305 348.5 L308 349.4 L311 350.2 L314 351.1 L317 351.9 L320 352.7 L323 353.6 L326 354.4 L329 355.2 L332 356 L335 356.8 L338 357.6 L341 358.4 L344 359.2 L347 360 L350 360.8 L353 361.5 L356 362.3 L359 363.1 L362 363.9 L365 364.7 L368 365.5 L371 366.2 L374 367 L377 367.8 L380 368.6 L383 369.3 L386 370.1 L389 370.9 L392 371.6 L395 372.4 L398 373.1 L401 373.9 L404 374.6 L407 375.4 L410 376.1 L413 376.8 L416 377.5 L419 378.2 L422 378.9 L425 379.6 L428 380.3 L431 380.9 L434 381.6 L437 382.2 L440 382.8 L443 383.4 L446 384 L449 384.6 L452 385.1 L455 385.7 L458 386.2 L461 386.7 L464 387.2 L467 387.7 L470 388.1 L473 388.6 L476 389 L479 389.4 L482 389.9 L485 390.3 L488 390.7 L491 391.1 L494 391.5 L497 391.9 L500 392.3 L503 392.7 L506 393.1 L509 393.6 L512 394 L515 394.5 L518 395 L521 395.4 L524 395.9 L527 396.4 L530 396.8 L533 397.2 L536 397.7 L539 398 L542 398.4 L545 398.7 L548 399 L551 399.2 L554 399.5 L557 399.7 L560 399.8 L563 400 L566 400.1 L569 400.2 L572 400.3 L575 400.4 L578 400.5 L581 400.5 L584 400.6 L587 400.6 L590 400.7 L593 400.7 L596 400.8 L599 400.9 L602 400.9 L605 401 L608 401.1 L611 401.2 L614 401.3 L617 401.4 L620 401.5 L623 401.5 L626 401.5 L629 401.5 L632 401.4 L635 401.3 L638 401.2 L641 401.1 L644 401 L647 400.9 L650 400.8 L653 400.6 L656 400.5 L659 400.2 L662 400 L665 399.6 L668 399.3 L671 398.9 L674 398.4 L677 398 L680 397.5 L683 396.9 L686 396.4 L689 395.9 L692 395.3 L695 394.8 L698 394.2 L701 393.7 L704 393.1 L707 392.6 L710 392.1 L713 391.6 L716 391 L719 390.5 L722 389.9 L725 389.3 L728 388.7 L731 388.1 L734 387.4 L737 386.7 L740 386 L743 385.1 L746 384.3 L749 383.4 L752 382.5 L755 381.6 L758 380.7 L761 379.7 L764 378.7 L767 377.7 L770 376.6 L773 375.6 L776 374.5 L779 373.5 L782 372.4 L785 371.3 L788 370.1 L791 369 L794 367.9 L797 366.7 L800 365.6 L803 364.4 L806 363.3 L809 362.2 L812 361 L815 359.8 L818 358.6 L821 357.3 L824 356.1 L827 354.7 L830 353.3 L833 351.9 L836 350.4 L839 348.8 L842 347.3 L845 345.7 L848 344.2 L851 342.7 L854 341.2 L857 339.7 L860 338.3 L863 336.7 L866 335.1 L869 333.5 L872 331.7 L875 329.9 L878 328 L881 326.1 L884 324.1 L887 322.2 L890 320.3 L893 318.5 L896 316.7 L899 314.9 L902 313.1 L905 311.3 L908 309.5 L911 307.6 L914 305.6 L917 303.5 L920 301.4 L923 299.2 L926 296.9 L929 294.6 L932 292.2 L935 289.9 L938 287.5 L941 285.1 L944 282.8 L947 280.4 L950 278.1 L953 275.8 L956 273.4 L959 271.1 L962 268.8 L965 266.4 L968 264.1 L971 261.8 L974 259.5 L976 257.9 L976 260.5 L974 262 L971 264.3 L968 266.7 L965 269 L962 271.3 L959 273.6 L956 276 L953 278.3 L950 280.6 L947 283 L944 285.3 L941 287.7 L938 290 L935 292.4 L932 294.8 L929 297.1 L926 299.4 L923 301.7 L920 303.9 L917 306 L914 308 L911 310 L908 311.9 L905 313.7 L902 315.5 L899 317.2 L896 319 L893 320.8 L890 322.7 L887 324.6 L884 326.5 L881 328.4 L878 330.4 L875 332.2 L872 334.1 L869 335.8 L866 337.4 L863 339 L860 340.5 L857 342 L854 343.5 L851 344.9 L848 346.5 L845 348 L842 349.5 L839 351.1 L836 352.6 L833 354.1 L830 355.5 L827 356.9 L824 358.2 L821 359.5 L818 360.8 L815 362 L812 363.1 L809 364.3 L806 365.4 L803 366.6 L800 367.7 L797 368.8 L794 370 L791 371.1 L788 372.3 L785 373.4 L782 374.5 L779 375.6 L776 376.6 L773 377.7 L770 378.7 L767 379.8 L764 380.8 L761 381.8 L758 382.7 L755 383.7 L752 384.6 L749 385.5 L746 386.4 L743 387.2 L740 388 L737 388.8 L734 389.5 L731 390.1 L728 390.8 L725 391.4 L722 391.9 L719 392.5 L716 393.1 L713 393.6 L710 394.1 L707 394.6 L704 395.2 L701 395.7 L698 396.2 L695 396.8 L692 397.3 L689 397.9 L686 398.4 L683 399 L680 399.5 L677 400 L674 400.4 L671 400.9 L668 401.3 L665 401.7 L662 402 L659 402.2 L656 402.5 L653 402.6 L650 402.8 L647 402.9 L644 403 L641 403.1 L638 403.2 L635 403.3 L632 403.4 L629 403.5 L626 403.5 L623 403.5 L620 403.5 L617 403.4 L614 403.3 L611 403.2 L608 403.1 L605 403 L602 402.9 L599 402.9 L596 402.8 L593 402.7 L590 402.7 L587 402.6 L584 402.6 L581 402.5 L578 402.5 L575 402.4 L572 402.3 L569 402.2 L566 402.1 L563 402 L560 401.8 L557 401.7 L554 401.5 L551 401.2 L548 401 L545 400.7 L542 400.4 L539 400 L536 399.7 L533 399.3 L530 398.8 L527 398.4 L524 397.9 L521 397.5 L518 397 L515 396.5 L512 396.1 L509 395.6 L506 395.2 L503 394.7 L500 394.3 L497 393.9 L494 393.5 L491 393.1 L488 392.7 L485 392.3 L482 391.9 L479 391.5 L476 391 L473 390.6 L470 390.1 L467 389.7 L464 389.2 L461 388.7 L458 388.2 L455 387.7 L452 387.2 L449 386.6 L446 386 L443 385.5 L440 384.9 L437 384.3 L434 383.6 L431 383 L428 382.3 L425 381.7 L422 381 L419 380.3 L416 379.6 L413 378.9 L410 378.1 L407 377.4 L404 376.7 L401 375.9 L398 375.2 L395 374.5 L392 373.7 L389 372.9 L386 372.2 L383 371.4 L380 370.6 L377 369.9 L374 369.1 L371 368.3 L368 367.5 L365 366.7 L362 366 L359 365.2 L356 364.4 L353 363.6 L350 362.8 L347 362 L344 361.2 L341 360.5 L338 359.7 L335 358.9 L332 358.1 L329 357.3 L326 356.4 L323 355.6 L320 354.8 L317 354 L314 353.2 L311 352.3 L308 351.5 L305 350.6 L302 349.8 L299 348.9 L296 348 L293 347.1 L290 346.3 L287 345.4 L284 344.5 L281 343.5 L278 342.6 L275 341.7 L272 340.8 L269 339.8 L266 338.9 L263 337.9 L260 337 L257 336 L254 335.1 L251 334.2 L248 333.2 L245 332.3 L242 331.4 L239 330.5 L236 329.5 L233 328.6 L230 327.7 L227 326.8 L224 325.9 L221 325 L218 324.1 L215 323.2 L212 322.3 L209 321.4 L206 320.5 L203 319.7 L200 318.8 L197 317.9 L194 317 L191 316.1 L188 315.2 L185 314.3 L182 313.4 L179 312.5 L176 311.6 L173 310.7 L170 309.8 L167 308.9 L164 308 L161 307.1 L158 306.2 L155 305.3 L152 304.4 L149 303.5 L146 302.6 L143 301.7 L140 300.8 L137 299.9 L134 299 L131 298.1 L128 297.2 L125 296.4 L122 295.5 L119 294.7 L116 293.9 L113 293 L110 292.2 L107 291.4 L104 290.6 L101 289.8 L98 289 L95 288.2 L92 287.5 L89 286.7 L86 285.9 L83 285.2 L80 284.4 L77 283.7 L74 282.9 L71 282.2 L68 281.4 L65 280.7 L62 279.9 L59 279.2 L56 278.5 L53 277.7 L50 277 L47 276.2 L44 275.5 L41 274.8 L38 274 L35 273.3 L32 272.6 L29 271.9 L26 271.1 L23 270.4 L20 269.7 L17 269 L14 268.3 L11 267.6 L8 266.9 L5 266.1 L2 265.4Z" fill="#ff8c48" shape-rendering="auto" clip-path="url(#pc)" />
<path d="M0 228.5 L1 228.5 L2 228.5 L3 228.5 L4 228.5 L5 228.8 L6 229 L7 229.3 L8 229.5 L9 229.7 L10 230 L11 230.2 L12 230.4 L13 230.7 L14 230.9 L15 231.2 L16 231.4 L17 231.6 L18 231.9 L19 232.1 L20 232.4 L21 232.6 L22 232.8 L23 233.1 L24 233.3 L25 233.5 L26 233.8 L27 234 L28 234.3 L29 234.5 L30 234.7 L31 235 L32 235.2 L33 235.5 L34 235.7 L35 236 L36 236.2 L37 236.4 L38 236.7 L39 236.9 L40 237.2 L41 237.4 L42 237.6 L43 237.9 L44 238.1 L45 238.4 L46 238.6 L47 238.9 L48 239.1 L49 239.4 L50 239.6 L51 239.9 L52 240.1 L53 240.3 L54 240.6 L55 240.8 L56 241.1 L57 241.3 L58 241.6 L59 241.8 L60 242.1 L61 242.3 L62 242.6 L63 242.8 L64 243.1 L65 243.3 L66 243.6 L67 243.8 L68 244 L69 244.3 L70 244.5 L71 244.8 L72 245 L73 245.3 L74 245.5 L75 245.8 L76 246 L77 246.3 L78 246.5 L79 246.8 L80 247 L81 247.3 L82 247.5 L83 247.8 L84 248 L85 248.3 L86 248.5 L87 248.8 L88 249 L89 249.3 L90 249.6 L91 249.8 L92 250.1 L93 250.3 L94 250.6 L95 250.8 L96 251.1 L97 251.3 L98 251.6 L99 251.9 L100 252.1 L101 252.4 L102 252.7 L103 252.9 L104 253.2 L105 253.4 L106 253.7 L107 254 L108 254.2 L109 254.5 L110 254.8 L111 255.1 L112 255.3 L113 255.6 L114 255.9 L115 256.1 L116 256.4 L117 256.7 L118 257 L119 257.2 L120 257.5 L121 257.8 L122 258.1 L123 258.4 L124 258.6 L125 258.9 L126 259.2 L127 259.5 L128 259.8 L129 260.1 L130 260.3 L131 260.6 L132 260.9 L133 261.2 L134 261.5 L135 261.8 L136 262.1 L137 262.4 L138 262.7 L139 263 L140 263.3 L141 263.6 L142 263.9 L143 264.2 L144 264.5 L145 264.8 L146 265.1 L147 265.4 L148 265.7 L149 266 L150 266.3 L151 266.6 L152 266.9 L153 267.2 L154 267.5 L155 267.8 L156 268.1 L157 268.4 L158 268.7 L159 269 L160 269.3 L161 269.6 L162 269.9 L163 270.2 L164 270.5 L165 270.8 L166 271.1 L167 271.4 L168 271.7 L169 272 L170 272.3 L171 272.6 L172 272.9 L173 273.2 L174 273.5 L175 273.8 L176 274.1 L177 274.4 L178 274.7 L179 275 L180 275.3 L181 275.6 L182 275.9 L183 276.2 L184 276.5 L185 276.8 L186 277.1 L187 277.4 L188 277.7 L189 278 L190 278.3 L191 278.6 L192 278.9 L193 279.2 L194 279.5 L195 279.8 L196 280.1 L197 280.4 L198 280.7 L199 281 L200 281.3 L201 281.6 L202 281.9 L203 282.2 L204 282.5 L205 282.8 L206 283.1 L207 283.4 L208 283.7 L209 284 L210 284.2 L211 284.5 L212 284.8 L213 285.1 L214 285.4 L215 285.7 L216 286 L217 286.3 L218 286.6 L219 286.9 L220 287.2 L221 287.5 L222 287.8 L223 288.1 L224 288.4 L225 288.7 L226 289 L227 289.3 L228 289.6 L229 289.9 L230 290.2 L231 290.5 L232 290.8 L233 291.1 L234 291.4 L235 291.7 L236 292 L237 292.3 L238 292.6 L239 293 L240 293.3 L241 293.6 L242 293.9 L243 294.2 L244 294.5 L245 294.8 L246 295.1 L247 295.4 L248 295.7 L249 296 L250 296.3 L251 296.6 L252 297 L253 297.3 L254 297.6 L255 297.9 L256 298.2 L257 298.5 L258 298.8 L259 299.1 L260 299.5 L261 299.8 L262 300.1 L263 300.4 L264 300.7 L265 301 L266 301.3 L267 301.7 L268 302 L269 302.3 L270 302.6 L271 302.9 L272 303.2 L273 303.5 L274 303.9 L275 304.2 L276 304.5 L277 304.8 L278 305.1 L279 305.4 L280 305.7 L281 306 L282 306.3 L283 306.6 L284 306.9 L285 307.3 L286 307.6 L287 307.9 L288 308.2 L289 308.5 L290 308.8 L291 309.1 L292 309.4 L293 309.7 L294 310 L295 310.3 L296 310.5 L297 310.8 L298 311.1 L299 311.4 L300 311.7 L301 312 L302 312.3 L303 312.6 L304 312.9 L305 313.2 L306 313.5 L307 313.7 L308 314 L309 314.3 L310 314.6 L311 314.9 L312 315.2 L313 315.4 L314 315.7 L315 316 L316 316.3 L317 316.5 L318 316.8 L319 317.1 L320 317.4 L321 317.7 L322 317.9 L323 318.2 L324 318.5 L325 318.7 L326 319 L327 319.3 L328 319.6 L329 319.8 L330 320.1 L331 320.4 L332 320.6 L333 320.9 L334 321.2 L335 321.4 L336 321.7 L337 322 L338 322.2 L339 322.5 L340 322.8 L341 323 L342 323.3 L343 323.6 L344 323.8 L345 324.1 L346 324.4 L347 324.6 L348 324.9 L349 325.2 L350 325.4 L351 325.7 L352 325.9 L353 326.2 L354 326.5 L355 326.7 L356 327 L357 327.3 L358 327.5 L359 327.8 L360 328 L361 328.3 L362 328.6 L363 328.8 L364 329.1 L365 329.3 L366 329.6 L367 329.9 L368 330.1 L369 330.4 L370 330.6 L371 330.9 L372 331.2 L373 331.4 L374 331.7 L375 331.9 L376 332.2 L377 332.5 L378 332.7 L379 333 L380 333.2 L381 333.5 L382 333.7 L383 334 L384 334.3 L385 334.5 L386 334.8 L387 335 L388 335.3 L389 335.5 L390 335.8 L391 336.1 L392 336.3 L393 336.6 L394 336.8 L395 337.1 L396 337.3 L397 337.6 L398 337.8 L399 338.1 L400 338.3 L401 338.6 L402 338.8 L403 339.1 L404 339.3 L405 339.6 L406 339.8 L407 340.1 L408 340.3 L409 340.5 L410 340.8 L411 341 L412 341.3 L413 341.5 L414 341.7 L415 342 L416 342.2 L417 342.5 L418 342.7 L419 342.9 L420 343.2 L421 343.4 L422 343.6 L423 343.9 L424 344.1 L425 344.3 L426 344.6 L427 344.8 L428 345 L429 345.2 L430 345.4 L431 345.7 L432 345.9 L433 346.1 L434 346.3 L435 346.5 L436 346.8 L437 347 L438 347.2 L439 347.4 L440 347.6 L441 347.8 L442 348 L443 348.2 L444 348.4 L445 348.6 L446 348.8 L447 349 L448 349.2 L449 349.4 L450 349.6 L451 349.7 L452 349.9 L453 350.1 L454 350.3 L455 350.5 L456 350.7 L457 350.8 L458 351 L459 351.2 L460 351.4 L461 351.5 L462 351.7 L463 351.9 L464 352 L465 352.2 L466 352.3 L467 352.5 L468 352.7 L469 352.8 L470 353 L471 353.1 L472 353.3 L473 353.4 L474 353.6 L475 353.7 L476 353.9 L477 354 L478 354.2 L479 354.3 L480 354.5 L481 354.6 L482 354.7 L483 354.9 L484 355 L485 355.2 L486 355.3 L487 355.4 L488 355.6 L489 355.7 L490 355.8 L491 356 L492 356.1 L493 356.2 L494 356.4 L495 356.5 L496 356.6 L497 356.8 L498 356.9 L499 357 L500 357.2 L501 357.3 L502 357.4 L503 357.6 L504 357.7 L505 357.9 L506 358 L507 358.1 L508 358.3 L509 358.4 L510 358.6 L511 358.7 L512 358.9 L513 359 L514 359.1 L515 359.3 L516 359.4 L517 359.6 L518 359.8 L519 359.9 L520 360.1 L521 360.2 L522 360.4 L523 360.5 L524 360.7 L525 360.8 L526 361 L527 361.1 L528 361.3 L529 361.4 L530 361.6 L531 361.7 L532 361.9 L533 362 L534 362.1 L535 362.3 L536 362.4 L537 362.5 L538 362.7 L539 362.8 L540 362.9 L541 363 L542 363.1 L543 363.3 L544 363.4 L545 363.5 L546 363.6 L547 363.7 L548 363.8 L549 363.9 L550 363.9 L551 364 L552 364.1 L553 364.2 L554 364.3 L555 364.3 L556 364.4 L557 364.5 L558 364.5 L559 364.6 L560 364.6 L561 364.7 L562 364.8 L563 364.8 L564 364.8 L565 364.9 L566 364.9 L567 365 L568 365 L569 365 L570 365.1 L571 365.1 L572 365.1 L573 365.2 L574 365.2 L575 365.2 L576 365.2 L577 365.2 L578 365.3 L579 365.3 L580 365.3 L581 365.3 L582 365.3 L583 365.3 L584 365.4 L585 365.4 L586 365.4 L587 365.4 L588 365.4 L589 365.4 L590 365.4 L591 365.5 L592 365.5 L593 365.5 L594 365.5 L595 365.5 L596 365.5 L597 365.6 L598 365.6 L599 365.6 L600 365.6 L601 365.6 L602 365.7 L603 365.7 L604 365.7 L605 365.7 L606 365.8 L607 365.8 L608 365.8 L609 365.8 L610 365.9 L611 365.9 L612 365.9 L613 365.9 L614 366 L615 366 L616 366 L617 366 L618 366.1 L619 366.1 L620 366.1 L621 366.1 L622 366.1 L623 366.1 L624 366.1 L625 366.2 L626 366.1 L627 366.1 L628 366.1 L629 366.1 L630 366.1 L631 366 L632 366 L633 366 L634 366 L635 365.9 L636 365.9 L637 365.9 L638 365.9 L639 365.8 L640 365.8 L641 365.8 L642 365.7 L643 365.7 L644 365.7 L645 365.6 L646 365.6 L647 365.6 L648 365.5 L649 365.5 L650 365.4 L651 365.4 L652 365.3 L653 365.3 L654 365.2 L655 365.2 L656 365.1 L657 365 L658 364.9 L659 364.9 L660 364.8 L661 364.7 L662 364.6 L663 364.5 L664 364.4 L665 364.2 L666 364.1 L667 364 L668 363.9 L669 363.7 L670 363.6 L671 363.4 L672 363.3 L673 363.2 L674 363 L675 362.8 L676 362.7 L677 362.5 L678 362.4 L679 362.2 L680 362 L681 361.9 L682 361.7 L683 361.5 L684 361.3 L685 361.2 L686 361 L687 360.8 L688 360.6 L689 360.5 L690 360.3 L691 360.1 L692 359.9 L693 359.7 L694 359.6 L695 359.4 L696 359.2 L697 359 L698 358.9 L699 358.7 L700 358.5 L701 358.3 L702 358.2 L703 358 L704 357.8 L705 357.6 L706 357.5 L707 357.3 L708 357.1 L709 357 L710 356.8 L711 356.6 L712 356.4 L713 356.3 L714 356.1 L715 355.9 L716 355.7 L717 355.6 L718 355.4 L719 355.2 L720 355 L721 354.8 L722 354.6 L723 354.5 L724 354.3 L725 354.1 L726 353.9 L727 353.7 L728 353.5 L729 353.2 L730 353 L731 352.8 L732 352.6 L733 352.4 L734 352.1 L735 351.9 L736 351.7 L737 351.4 L738 351.2 L739 350.9 L740 350.7 L741 350.4 L742 350.2 L743 349.9 L744 349.7 L745 349.4 L746 349.1 L747 348.8 L748 348.6 L749 348.3 L750 348 L751 347.7 L752 347.4 L753 347.1 L754 346.8 L755 346.5 L756 346.2 L757 345.9 L758 345.6 L759 345.3 L760 345 L761 344.7 L762 344.4 L763 344 L764 343.7 L765 343.4 L766 343.1 L767 342.8 L768 342.4 L769 342.1 L770 341.8 L771 341.4 L772 341.1 L773 340.8 L774 340.4 L775 340.1 L776 339.7 L777 339.4 L778 339.1 L779 338.7 L780 338.4 L781 338 L782 337.7 L783 337.3 L784 337 L785 336.6 L786 336.2 L787 335.9 L788 335.5 L789 335.2 L790 334.8 L791 334.4 L792 334.1 L793 333.7 L794 333.3 L795 333 L796 332.6 L797 332.2 L798 331.9 L799 331.5 L800 331.1 L801 330.8 L802 330.4 L803 330 L804 329.6 L805 329.3 L806 328.9 L807 328.5 L808 328.1 L809 327.7 L810 327.4 L811 327 L812 326.6 L813 326.2 L814 325.8 L815 325.4 L816 325 L817 324.6 L818 324.2 L819 323.8 L820 323.3 L821 322.9 L822 322.5 L823 322 L824 321.6 L825 321.1 L826 320.7 L827 320.2 L828 319.8 L829 319.3 L830 318.8 L831 318.3 L832 317.8 L833 317.3 L834 316.8 L835 316.3 L836 315.8 L837 315.3 L838 314.7 L839 314.2 L840 313.7 L841 313.2 L842 312.7 L843 312.1 L844 311.6 L845 311.1 L846 310.6 L847 310.1 L848 309.6 L849 309 L850 308.5 L851 308 L852 307.5 L853 307 L854 306.5 L855 306 L856 305.5 L857 305 L858 304.5 L859 304 L860 303.5 L861 303 L862 302.5 L863 301.9 L864 301.4 L865 300.8 L866 300.3 L867 299.7 L868 299.1 L869 298.6 L870 298 L871 297.4 L872 296.7 L873 296.1 L874 295.5 L875 294.9 L876 294.2 L877 293.6 L878 292.9 L879 292.3 L880 291.6 L881 291 L882 290.3 L883 289.7 L884 289 L885 288.4 L886 287.7 L887 287.1 L888 286.5 L889 285.8 L890 285.2 L891 284.6 L892 284 L893 283.4 L894 282.8 L895 282.2 L896 281.6 L897 281 L898 280.4 L899 279.8 L900 279.2 L901 278.6 L902 278 L903 277.4 L904 276.8 L905 276.2 L906 275.5 L907 274.9 L908 274.3 L909 273.6 L910 273 L911 272.3 L912 271.6 L913 270.9 L914 270.3 L915 269.6 L916 268.8 L917 268.1 L918 267.4 L919 266.7 L920 265.9 L921 265.2 L922 264.4 L923 263.7 L924 262.9 L925 262.1 L926 261.3 L927 260.6 L928 259.8 L929 259 L930 258.2 L931 257.4 L932 256.6 L933 255.8 L934 255 L935 254.2 L936 253.4 L937 252.6 L938 251.8 L939 251 L940 250.2 L941 249.4 L942 248.6 L943 247.8 L944 247 L945 246.3 L946 245.5 L947 244.7 L948 243.9 L949 243.1 L950 242.3 L951 241.5 L952 240.7 L953 239.9 L954 239.1 L955 238.3 L956 237.6 L957 236.8 L958 236 L959 235.2 L960 234.4 L961 233.6 L962 232.8 L963 232 L964 231.2 L965 230.4 L966 229.7 L967 228.9 L968 228.1 L969 227.3 L970 226.5 L971 225.7 L972 224.9 L973 224.1 L974 224.1 L975 224.1 L976 224.1 L977 224.1 L978 223.3 L978 228.2 L977 228.2 L976 229 L975 229.8 L974 230.6 L973 231.4 L972 232.2 L971 233 L970 233.8 L969 234.5 L968 235.3 L967 236.1 L966 236.9 L965 237.7 L964 238.5 L963 239.3 L962 240.1 L961 240.9 L960 241.7 L959 242.4 L958 243.2 L957 244 L956 244.8 L955 245.6 L954 246.4 L953 247.2 L952 248 L951 248.8 L950 249.6 L949 250.4 L948 251.1 L947 251.9 L946 252.7 L945 253.5 L944 254.3 L943 255.1 L942 255.9 L941 256.7 L940 257.5 L939 258.3 L938 259.1 L937 259.9 L936 260.7 L935 261.5 L934 262.3 L933 263.1 L932 263.9 L931 264.7 L930 265.4 L929 266.2 L928 267 L927 267.8 L926 268.5 L925 269.3 L924 270 L923 270.8 L922 271.5 L921 272.2 L920 272.9 L919 273.7 L918 274.4 L917 275 L916 275.7 L915 276.4 L914 277.1 L913 277.7 L912 278.4 L911 279 L910 279.6 L909 280.3 L908 280.9 L907 281.5 L906 282.1 L905 282.7 L904 283.3 L903 283.9 L902 284.5 L901 285.1 L900 285.7 L899 286.3 L898 286.9 L897 287.5 L896 288.1 L895 288.7 L894 289.3 L893 289.9 L892 290.6 L891 291.2 L890 291.8 L889 292.5 L888 293.1 L887 293.8 L886 294.4 L885 295.1 L884 295.7 L883 296.4 L882 297 L881 297.7 L880 298.3 L879 299 L878 299.6 L877 300.2 L876 300.8 L875 301.5 L874 302.1 L873 302.7 L872 303.2 L871 303.8 L870 304.4 L869 304.9 L868 305.5 L867 306 L866 306.6 L865 307.1 L864 307.6 L863 308.1 L862 308.6 L861 309.1 L860 309.6 L859 310.1 L858 310.6 L857 311.1 L856 311.6 L855 312.1 L854 312.6 L853 313.1 L852 313.7 L851 314.2 L850 314.7 L849 315.2 L848 315.7 L847 316.2 L846 316.8 L845 317.3 L844 317.8 L843 318.3 L842 318.8 L841 319.4 L840 319.9 L839 320.4 L838 320.9 L837 321.4 L836 321.9 L835 322.4 L834 322.9 L833 323.4 L832 323.9 L831 324.3 L830 324.8 L829 325.2 L828 325.7 L827 326.1 L826 326.6 L825 327 L824 327.4 L823 327.9 L822 328.3 L821 328.7 L820 329.1 L819 329.5 L818 329.9 L817 330.3 L816 330.7 L815 331.1 L814 331.5 L813 331.8 L812 332.2 L811 332.6 L810 333 L809 333.4 L808 333.7 L807 334.1 L806 334.5 L805 334.9 L804 335.2 L803 335.6 L802 336 L801 336.3 L800 336.7 L799 337.1 L798 337.4 L797 337.8 L796 338.2 L795 338.5 L794 338.9 L793 339.3 L792 339.6 L791 340 L790 340.3 L789 340.7 L788 341.1 L787 341.4 L786 341.8 L785 342.1 L784 342.5 L783 342.8 L782 343.2 L781 343.5 L780 343.8 L779 344.2 L778 344.5 L777 344.9 L776 345.2 L775 345.5 L774 345.9 L773 346.2 L772 346.5 L771 346.9 L770 347.2 L769 347.5 L768 347.8 L767 348.1 L766 348.5 L765 348.8 L764 349.1 L763 349.4 L762 349.7 L761 350 L760 350.3 L759 350.6 L758 350.9 L757 351.2 L756 351.5 L755 351.8 L754 352.1 L753 352.4 L752 352.7 L751 352.9 L750 353.2 L749 353.5 L748 353.8 L747 354 L746 354.3 L745 354.5 L744 354.8 L743 355 L742 355.3 L741 355.5 L740 355.8 L739 356 L738 356.2 L737 356.5 L736 356.7 L735 356.9 L734 357.1 L733 357.3 L732 357.6 L731 357.8 L730 358 L729 358.2 L728 358.4 L727 358.6 L726 358.7 L725 358.9 L724 359.1 L723 359.3 L722 359.5 L721 359.7 L720 359.8 L719 360 L718 360.2 L717 360.4 L716 360.5 L715 360.7 L714 360.9 L713 361.1 L712 361.2 L711 361.4 L710 361.6 L709 361.7 L708 361.9 L707 362.1 L706 362.3 L705 362.4 L704 362.6 L703 362.8 L702 363 L701 363.1 L700 363.3 L699 363.5 L698 363.7 L697 363.8 L696 364 L695 364.2 L694 364.4 L693 364.6 L692 364.7 L691 364.9 L690 365.1 L689 365.3 L688 365.4 L687 365.6 L686 365.8 L685 366 L684 366.1 L683 366.3 L682 366.5 L681 366.6 L680 366.8 L679 366.9 L678 367.1 L677 367.3 L676 367.4 L675 367.5 L674 367.7 L673 367.8 L672 368 L671 368.1 L670 368.2 L669 368.3 L668 368.5 L667 368.6 L666 368.7 L665 368.8 L664 368.9 L663 369 L662 369 L661 369.1 L660 369.2 L659 369.3 L658 369.3 L657 369.4 L656 369.4 L655 369.5 L654 369.5 L653 369.6 L652 369.6 L651 369.7 L650 369.7 L649 369.7 L648 369.8 L647 369.8 L646 369.8 L645 369.9 L644 369.9 L643 369.9 L642 370 L641 370 L640 370 L639 370 L638 370.1 L637 370.1 L636 370.1 L635 370.1 L634 370.2 L633 370.2 L632 370.2 L631 370.2 L630 370.2 L629 370.3 L628 370.3 L627 370.3 L626 370.3 L625 370.3 L624 370.3 L623 370.3 L622 370.3 L621 370.3 L620 370.2 L619 370.2 L618 370.2 L617 370.2 L616 370.2 L615 370.2 L614 370.2 L613 370.1 L612 370.1 L611 370.1 L610 370.1 L609 370 L608 370 L607 370 L606 370 L605 369.9 L604 369.9 L603 369.9 L602 369.9 L601 369.8 L600 369.8 L599 369.8 L598 369.8 L597 369.7 L596 369.7 L595 369.7 L594 369.7 L593 369.7 L592 369.6 L591 369.6 L590 369.6 L589 369.6 L588 369.6 L587 369.6 L586 369.5 L585 369.5 L584 369.5 L583 369.5 L582 369.5 L581 369.5 L580 369.5 L579 369.4 L578 369.4 L577 369.4 L576 369.4 L575 369.4 L574 369.4 L573 369.3 L572 369.3 L571 369.3 L570 369.3 L569 369.3 L568 369.2 L567 369.2 L566 369.2 L565 369.1 L564 369.1 L563 369.1 L562 369 L561 369 L560 368.9 L559 368.9 L558 368.9 L557 368.8 L556 368.7 L555 368.7 L554 368.6 L553 368.6 L552 368.5 L551 368.4 L550 368.4 L549 368.3 L548 368.2 L547 368.1 L546 368 L545 368 L544 367.9 L543 367.8 L542 367.7 L541 367.6 L540 367.5 L539 367.4 L538 367.2 L537 367.1 L536 367 L535 366.9 L534 366.8 L533 366.6 L532 366.5 L531 366.4 L530 366.2 L529 366.1 L528 366 L527 365.8 L526 365.7 L525 365.5 L524 365.4 L523 365.2 L522 365.1 L521 364.9 L520 364.8 L519 364.6 L518 364.5 L517 364.3 L516 364.2 L515 364 L514 363.9 L513 363.7 L512 363.5 L511 363.4 L510 363.2 L509 363.1 L508 363 L507 362.8 L506 362.7 L505 362.5 L504 362.4 L503 362.2 L502 362.1 L501 362 L500 361.8 L499 361.7 L498 361.5 L497 361.4 L496 361.3 L495 361.1 L494 361 L493 360.9 L492 360.7 L491 360.6 L490 360.5 L489 360.3 L488 360.2 L487 360.1 L486 359.9 L485 359.8 L484 359.7 L483 359.5 L482 359.4 L481 359.3 L480 359.1 L479 359 L478 358.8 L477 358.7 L476 358.6 L475 358.4 L474 358.3 L473 358.1 L472 358 L471 357.8 L470 357.7 L469 357.5 L468 357.4 L467 357.2 L466 357.1 L465 356.9 L464 356.8 L463 356.6 L462 356.4 L461 356.3 L460 356.1 L459 356 L458 355.8 L457 355.6 L456 355.5 L455 355.3 L454 355.1 L453 354.9 L452 354.8 L451 354.6 L450 354.4 L449 354.2 L448 354 L447 353.8 L446 353.7 L445 353.5 L444 353.3 L443 353.1 L442 352.9 L441 352.7 L440 352.5 L439 352.3 L438 352.1 L437 351.9 L436 351.7 L435 351.5 L434 351.3 L433 351.1 L432 350.9 L431 350.6 L430 350.4 L429 350.2 L428 350 L427 349.8 L426 349.5 L425 349.3 L424 349.1 L423 348.9 L422 348.7 L421 348.4 L420 348.2 L419 348 L418 347.7 L417 347.5 L416 347.3 L415 347 L414 346.8 L413 346.6 L412 346.3 L411 346.1 L410 345.8 L409 345.6 L408 345.4 L407 345.1 L406 344.9 L405 344.6 L404 344.4 L403 344.2 L402 343.9 L401 343.7 L400 343.4 L399 343.2 L398 342.9 L397 342.7 L396 342.4 L395 342.2 L394 341.9 L393 341.7 L392 341.4 L391 341.2 L390 340.9 L389 340.7 L388 340.4 L387 340.2 L386 339.9 L385 339.6 L384 339.4 L383 339.1 L382 338.9 L381 338.6 L380 338.4 L379 338.1 L378 337.8 L377 337.6 L376 337.3 L375 337.1 L374 336.8 L373 336.6 L372 336.3 L371 336 L370 335.8 L369 335.5 L368 335.3 L367 335 L366 334.7 L365 334.5 L364 334.2 L363 334 L362 333.7 L361 333.4 L360 333.2 L359 332.9 L358 332.7 L357 332.4 L356 332.1 L355 331.9 L354 331.6 L353 331.4 L352 331.1 L351 330.8 L350 330.6 L349 330.3 L348 330 L347 329.8 L346 329.5 L345 329.3 L344 329 L343 328.7 L342 328.5 L341 328.2 L340 327.9 L339 327.7 L338 327.4 L337 327.1 L336 326.9 L335 326.6 L334 326.3 L333 326.1 L332 325.8 L331 325.5 L330 325.3 L329 325 L328 324.7 L327 324.5 L326 324.2 L325 323.9 L324 323.7 L323 323.4 L322 323.1 L321 322.8 L320 322.6 L319 322.3 L318 322 L317 321.8 L316 321.5 L315 321.2 L314 320.9 L313 320.6 L312 320.4 L311 320.1 L310 319.8 L309 319.5 L308 319.3 L307 319 L306 318.7 L305 318.4 L304 318.1 L303 317.8 L302 317.6 L301 317.3 L300 317 L299 316.7 L298 316.4 L297 316.1 L296 315.8 L295 315.5 L294 315.2 L293 314.9 L292 314.6 L291 314.4 L290 314.1 L289 313.8 L288 313.5 L287 313.2 L286 312.9 L285 312.6 L284 312.3 L283 312 L282 311.7 L281 311.4 L280 311 L279 310.7 L278 310.4 L277 310.1 L276 309.8 L275 309.5 L274 309.2 L273 308.9 L272 308.6 L271 308.3 L270 308 L269 307.6 L268 307.3 L267 307 L266 306.7 L265 306.4 L264 306.1 L263 305.8 L262 305.4 L261 305.1 L260 304.8 L259 304.5 L258 304.2 L257 303.9 L256 303.6 L255 303.2 L254 302.9 L253 302.6 L252 302.3 L251 302 L250 301.7 L249 301.4 L248 301.1 L247 300.7 L246 300.4 L245 300.1 L244 299.8 L243 299.5 L242 299.2 L241 298.9 L240 298.6 L239 298.3 L238 298 L237 297.7 L236 297.4 L235 297.1 L234 296.7 L233 296.4 L232 296.1 L231 295.8 L230 295.5 L229 295.2 L228 294.9 L227 294.6 L226 294.3 L225 294 L224 293.7 L223 293.4 L222 293.1 L221 292.8 L220 292.5 L219 292.2 L218 291.9 L217 291.6 L216 291.3 L215 291 L214 290.7 L213 290.4 L212 290.1 L211 289.8 L210 289.5 L209 289.2 L208 288.9 L207 288.6 L206 288.3 L205 288.1 L204 287.8 L203 287.5 L202 287.2 L201 286.9 L200 286.6 L199 286.3 L198 286 L197 285.7 L196 285.4 L195 285.1 L194 284.8 L193 284.5 L192 284.2 L191 283.9 L190 283.6 L189 283.3 L188 283 L187 282.7 L186 282.4 L185 282.1 L184 281.8 L183 281.5 L182 281.2 L181 280.9 L180 280.6 L179 280.3 L178 280 L177 279.7 L176 279.4 L175 279.1 L174 278.8 L173 278.5 L172 278.2 L171 277.9 L170 277.6 L169 277.3 L168 277 L167 276.7 L166 276.4 L165 276.1 L164 275.8 L163 275.5 L162 275.2 L161 274.9 L160 274.6 L159 274.3 L158 274 L157 273.7 L156 273.4 L155 273.1 L154 272.8 L153 272.5 L152 272.2 L151 271.9 L150 271.6 L149 271.3 L148 271 L147 270.7 L146 270.4 L145 270.1 L144 269.8 L143 269.5 L142 269.2 L141 268.9 L140 268.6 L139 268.3 L138 268 L137 267.7 L136 267.4 L135 267.1 L134 266.8 L133 266.5 L132 266.2 L131 265.9 L130 265.6 L129 265.3 L128 265 L127 264.7 L126 264.4 L125 264.2 L124 263.9 L123 263.6 L122 263.3 L121 263 L120 262.7 L119 262.5 L118 262.2 L117 261.9 L116 261.6 L115 261.3 L114 261.1 L113 260.8 L112 260.5 L111 260.2 L110 260 L109 259.7 L108 259.4 L107 259.2 L106 258.9 L105 258.6 L104 258.3 L103 258.1 L102 257.8 L101 257.5 L100 257.3 L99 257 L98 256.8 L97 256.5 L96 256.2 L95 256 L94 255.7 L93 255.4 L92 255.2 L91 254.9 L90 254.7 L89 254.4 L88 254.2 L87 253.9 L86 253.7 L85 253.4 L84 253.1 L83 252.9 L82 252.6 L81 252.4 L80 252.1 L79 251.9 L78 251.6 L77 251.4 L76 251.1 L75 250.9 L74 250.6 L73 250.4 L72 250.1 L71 249.9 L70 249.6 L69 249.4 L68 249.1 L67 248.9 L66 248.6 L65 248.4 L64 248.1 L63 247.9 L62 247.7 L61 247.4 L60 247.2 L59 246.9 L58 246.7 L57 246.4 L56 246.2 L55 245.9 L54 245.7 L53 245.4 L52 245.2 L51 244.9 L50 244.7 L49 244.4 L48 244.2 L47 244 L46 243.7 L45 243.5 L44 243.2 L43 243 L42 242.7 L41 242.5 L40 242.2 L39 242 L38 241.7 L37 241.5 L36 241.3 L35 241 L34 240.8 L33 240.5 L32 240.3 L31 240.1 L30 239.8 L29 239.6 L28 239.3 L27 239.1 L26 238.8 L25 238.6 L24 238.4 L23 238.1 L22 237.9 L21 237.6 L20 237.4 L19 237.2 L18 236.9 L17 236.7 L16 236.5 L15 236.2 L14 236 L13 235.7 L12 235.5 L11 235.3 L10 235 L9 234.8 L8 234.5 L7 234.3 L6 234.1 L5 233.8 L4 233.6 L3 233.4 L2 233.1 L1 232.9 L0 232.7Z" fill="#0000ff" shape-rendering="auto" clip-path="url(#pc)"/>
<path fill="#00ff00" d="M29 253h2V288h-2zM28 284h1v2h-1zM31 256h2v2h-2zM43 264h2V285h-2zM42 276h1v2h-1zM45 264h2v2h-2zM50 228h2V263h-2zM49 258h1v2h-1zM52 228h2v2h-2zM57 206h2V224h-2zM56 221h1v2h-1zM59 206h2v2h-2zM64 198h2V219h-2zM63 207h1v2h-1zM66 201h2v2h-2zM85 174h2V200h-2zM84 191h1v2h-1zM87 174h2v2h-2zM92 174h2V190h-2zM91 177h1v2h-1zM94 177h2v2h-2zM99 148h2V170h-2zM98 164h1v2h-1zM101 151h2v2h-2zM106 218h2V248h-2zM105 235h1v2h-1zM108 218h2v2h-2zM134 241h2V265h-2zM133 258h1v2h-1zM136 245h2v2h-2zM141 234h2V260h-2zM140 247h1v2h-1zM143 234h2v2h-2zM148 219h2V243h-2zM147 237h1v2h-1zM150 223h2v2h-2zM169 209h2V233h-2zM168 230h1v2h-1zM171 211h2v2h-2zM176 207h2V218h-2zM175 215h1v2h-1zM178 207h2v2h-2zM204 231h2V255h-2zM203 253h1v2h-1zM206 245h2v2h-2zM218 250h2V274h-2zM217 264h1v2h-1zM220 250h2v2h-2zM232 258h2V281h-2zM231 278h1v2h-1zM234 264h2v2h-2zM246 282h2V295h-2zM245 289h1v2h-1zM248 286h2v2h-2zM267 280h2V306h-2zM266 303h1v2h-1zM269 287h2v2h-2zM302 300h2V327h-2zM301 323h1v2h-1zM304 304h2v2h-2zM316 303h2V320h-2zM315 314h1v2h-1zM318 305h2v2h-2zM337 305h2V321h-2zM336 317h1v2h-1zM339 305h2v2h-2zM344 304h2V319h-2zM343 308h1v2h-1zM346 308h2v2h-2zM351 286h2V311h-2zM350 307h1v2h-1zM353 286h2v2h-2zM372 334h2V351h-2zM371 348h1v2h-1zM374 346h2v2h-2zM393 346h2V359h-2zM392 354h1v2h-1zM395 352h2v2h-2zM421 355h2V378h-2zM420 367h1v2h-1zM423 364h2v2h-2zM449 384h2V400h-2zM448 395h1v2h-1zM451 393h2v2h-2zM456 367h2V398h-2zM455 393h1v2h-1zM458 368h2v2h-2zM463 358h2V372h-2zM462 369h1v2h-1zM465 358h2v2h-2zM519 429h2V455h-2zM518 439h1v2h-1zM521 430h2v2h-2zM533 429h2V445h-2zM532 432h1v2h-1zM535 432h2v2h-2zM540 419h2V439h-2zM539 434h1v2h-1zM542 419h2v2h-2zM547 393h2V420h-2zM546 413h1v2h-1zM549 406h2v2h-2zM554 408h2V457h-2zM553 443h1v2h-1zM556 408h2v2h-2zM561 404h2V422h-2zM560 413h1v2h-1zM563 411h2v2h-2zM582 428h2V453h-2zM581 446h1v2h-1zM584 437h2v2h-2zM589 428h2V445h-2zM588 440h1v2h-1zM591 439h2v2h-2zM603 425h2V456h-2zM602 444h1v2h-1zM605 426h2v2h-2zM610 409h2V423h-2zM609 420h1v2h-1zM612 416h2v2h-2zM624 423h2V460h-2zM623 455h1v2h-1zM626 424h2v2h-2zM631 394h2V418h-2zM630 415h1v2h-1zM633 398h2v2h-2zM645 365h2V396h-2zM644 388h1v2h-1zM647 366h2v2h-2zM652 359h2V383h-2zM651 373h1v2h-1zM654 364h2v2h-2zM659 349h2V371h-2zM658 366h1v2h-1zM661 350h2v2h-2zM666 326h2V347h-2zM665 331h1v2h-1zM668 329h2v2h-2zM680 321h2V335h-2zM679 331h1v2h-1zM682 321h2v2h-2zM722 278h2V340h-2zM721 336h1v2h-1zM724 282h2v2h-2zM729 245h2V288h-2zM728 285h1v2h-1zM731 258h2v2h-2zM736 233h2V265h-2zM735 261h1v2h-1zM738 249h2v2h-2zM764 226h2V253h-2zM763 243h1v2h-1zM766 230h2v2h-2zM771 216h2V236h-2zM770 233h1v2h-1zM773 218h2v2h-2zM806 285h2V335h-2zM805 326h1v2h-1zM808 285h2v2h-2zM813 250h2V286h-2zM812 280h1v2h-1zM815 258h2v2h-2zM820 246h2V277h-2zM819 272h1v2h-1zM822 253h2v2h-2zM855 286h2V309h-2zM854 301h1v2h-1zM857 301h2v2h-2zM862 282h2V313h-2zM861 298h1v2h-1zM864 297h2v2h-2zM869 287h2V303h-2zM868 296h1v2h-1zM871 292h2v2h-2zM911 310h2V348h-2zM910 331h1v2h-1zM913 312h2v2h-2zM918 295h2V313h-2zM917 311h1v2h-1zM920 295h2v2h-2zM925 268h2V297h-2zM924 294h1v2h-1zM927 277h2v2h-2zM939 266h2V288h-2zM938 269h1v2h-1zM941 267h2v2h-2zM953 275h2V298h-2zM952 283h1v2h-1zM955 283h2v2h-2z" clip-path="url(#pc)"/>
<path fill="#ff0000" d="M8 270h2V287h-2zM7 277h1v2h-1zM10 277h2v2h-2zM15 268h2V292h-2zM14 271h1v2h-1zM17 290h2v2h-2zM22 273h2V287h-2zM21 279h1v2h-1zM24 279h2v2h-2zM36 241h2V269h-2zM35 255h1v2h-1zM38 267h2v2h-2zM71 200h2V213h-2zM70 204h1v2h-1zM73 210h2v2h-2zM78 184h2V204h-2zM77 195h1v2h-1zM80 195h2v2h-2zM113 213h2V242h-2zM112 214h1v2h-1zM115 238h2v2h-2zM120 229h2V253h-2zM119 231h1v2h-1zM122 251h2v2h-2zM127 245h2V271h-2zM126 246h1v2h-1zM129 263h2v2h-2zM155 224h2V234h-2zM154 224h1v2h-1zM157 232h2v2h-2zM162 222h2V237h-2zM161 227h1v2h-1zM164 234h2v2h-2zM183 213h2V241h-2zM182 213h1v2h-1zM185 239h2v2h-2zM190 236h2V260h-2zM189 239h1v2h-1zM192 251h2v2h-2zM197 242h2V266h-2zM196 251h1v2h-1zM199 255h2v2h-2zM211 220h2V254h-2zM210 240h1v2h-1zM213 246h2v2h-2zM225 264h2V283h-2zM224 269h1v2h-1zM227 275h2v2h-2zM239 277h2V293h-2zM238 278h1v2h-1zM241 291h2v2h-2zM253 286h2V302h-2zM252 291h1v2h-1zM255 298h2v2h-2zM260 293h2V312h-2zM259 293h1v2h-1zM262 308h2v2h-2zM274 277h2V307h-2zM273 280h1v2h-1zM276 305h2v2h-2zM281 287h2V317h-2zM280 287h1v2h-1zM283 314h2v2h-2zM288 309h2V322h-2zM287 314h1v2h-1zM290 318h2v2h-2zM295 312h2V328h-2zM294 319h1v2h-1zM297 319h2v2h-2zM309 307h2V323h-2zM308 308h1v2h-1zM311 312h2v2h-2zM323 310h2V331h-2zM322 310h1v2h-1zM325 328h2v2h-2zM330 321h2V333h-2zM329 324h1v2h-1zM332 327h2v2h-2zM358 298h2V334h-2zM357 298h1v2h-1zM360 329h2v2h-2zM365 326h2V348h-2zM364 327h1v2h-1zM367 342h2v2h-2zM379 340h2V372h-2zM378 347h1v2h-1zM381 365h2v2h-2zM386 357h2V377h-2zM385 362h1v2h-1zM388 364h2v2h-2zM400 349h2V374h-2zM399 351h1v2h-1zM402 357h2v2h-2zM407 340h2V370h-2zM406 344h1v2h-1zM409 368h2v2h-2zM414 350h2V370h-2zM413 351h1v2h-1zM416 368h2v2h-2zM428 365h2V376h-2zM427 365h1v2h-1zM430 373h2v2h-2zM435 368h2V386h-2zM434 369h1v2h-1zM437 380h2v2h-2zM442 372h2V404h-2zM441 378h1v2h-1zM444 402h2v2h-2zM470 344h2V365h-2zM469 353h1v2h-1zM472 362h2v2h-2zM477 346h2V373h-2zM476 358h1v2h-1zM479 367h2v2h-2zM484 363h2V390h-2zM483 364h1v2h-1zM486 388h2v2h-2zM491 381h2V419h-2zM490 387h1v2h-1zM493 404h2v2h-2zM498 394h2V407h-2zM497 400h1v2h-1zM500 400h2v2h-2zM505 399h2V428h-2zM504 400h1v2h-1zM507 421h2v2h-2zM512 414h2V430h-2zM511 421h1v2h-1zM514 421h2v2h-2zM526 420h2V449h-2zM525 426h1v2h-1zM528 433h2v2h-2zM568 401h2V437h-2zM567 404h1v2h-1zM570 435h2v2h-2zM575 427h2V450h-2zM574 429h1v2h-1zM577 438h2v2h-2zM596 434h2V452h-2zM595 441h1v2h-1zM598 450h2v2h-2zM617 430h2V470h-2zM616 433h1v2h-1zM619 460h2v2h-2zM638 392h2V411h-2zM637 392h1v2h-1zM640 392h2v2h-2zM673 319h2V340h-2zM672 321h1v2h-1zM675 335h2v2h-2zM687 324h2V341h-2zM686 333h1v2h-1zM689 337h2v2h-2zM694 335h2V363h-2zM693 335h1v2h-1zM696 348h2v2h-2zM701 330h2V348h-2zM700 334h1v2h-1zM703 335h2v2h-2zM708 321h2V340h-2zM707 321h1v2h-1zM710 326h2v2h-2zM715 317h2V340h-2zM714 323h1v2h-1zM717 329h2v2h-2zM743 236h2V254h-2zM742 241h1v2h-1zM745 251h2v2h-2zM750 234h2V255h-2zM749 241h1v2h-1zM752 252h2v2h-2zM757 248h2V261h-2zM756 251h1v2h-1zM759 256h2v2h-2zM778 227h2V252h-2zM777 228h1v2h-1zM780 245h2v2h-2zM785 234h2V261h-2zM784 236h1v2h-1zM787 257h2v2h-2zM792 257h2V291h-2zM791 257h1v2h-1zM794 283h2v2h-2zM799 275h2V326h-2zM798 276h1v2h-1zM801 306h2v2h-2zM827 248h2V268h-2zM826 253h1v2h-1zM829 258h2v2h-2zM834 246h2V266h-2zM833 255h1v2h-1zM836 261h2v2h-2zM841 257h2V272h-2zM840 257h1v2h-1zM843 270h2v2h-2zM848 269h2V304h-2zM847 269h1v2h-1zM850 302h2v2h-2zM876 284h2V299h-2zM875 291h1v2h-1zM878 292h2v2h-2zM883 286h2V321h-2zM882 287h1v2h-1zM885 319h2v2h-2zM890 310h2V325h-2zM889 316h1v2h-1zM892 316h2v2h-2zM897 314h2V342h-2zM896 318h1v2h-1zM899 338h2v2h-2zM904 335h2V350h-2zM903 339h1v2h-1zM906 342h2v2h-2zM932 260h2V282h-2zM931 261h1v2h-1zM934 275h2v2h-2zM946 271h2V297h-2zM945 276h1v2h-1zM948 284h2v2h-2zM960 265h2V299h-2zM959 286h1v2h-1zM962 292h2v2h-2zM967 282h2V316h-2zM966 293h1v2h-1zM969 301h2v2h-2zM974 304h2V326h-2zM973 311h1v2h-1zM976 315h2v2h-2z" clip-path="url(#pc)"/>
<rect x="2" y="253" width="1208" height="1" fill="#ff0000"/>
<rect x="83" y="253" width="1" height="1" fill="#ff00ff"/>
<rect x="84" y="253" width="1" height="1" fill="#ff00ff"/>
<rect x="85" y="253" width="1" height="1" fill="#ff00ff"/>
<rect x="86" y="253" width="1" height="1" fill="#ff00ff"/>
<rect x="87" y="253" width="1" height="1" fill="#ff00ff"/>
<rect x="88" y="253" width="1" height="1" fill="#ff00ff"/>
<rect x="89" y="253" width="1" height="1" fill="#ff00ff"/>
<rect x="90" y="253" width="1" height="1" fill="#ff00ff"/>
<rect x="91" y="253" width="1" height="1" fill="#ff00ff"/>
<rect x="92" y="253" width="1" height="1" fill="#ff00ff"/>
<rect x="93" y="253" width="1" height="1" fill="#ff00ff"/>
<rect x="94" y="253" width="1" height="1" fill="#ff00ff"/>
<rect x="95" y="253" width="1" height="1" fill="#ff00ff"/>
<rect x="96" y="253" width="1" height="1" fill="#ff00ff"/>
<rect x="97" y="253" width="1" height="1" fill="#ff00ff"/>
<rect x="98" y="253" width="1" height="1" fill="#ff00ff"/>
<rect x="99" y="253" width="1" height="1" fill="#ff00ff"/>
<rect x="100" y="253" width="1" height="1" fill="#ff00ff"/>
<rect x="101" y="253" width="1" height="1" fill="#ff00ff"/>
<rect x="102" y="253" width="1" height="1" fill="#ff00ff"/>
<rect x="103" y="253" width="1" height="1" fill="#ff00ff"/>
<rect x="104" y="253" width="1" height="1" fill="#ff00ff"/>
<rect x="938" y="253" width="1" height="1" fill="#ff00ff"/>
<rect x="939" y="253" width="1" height="1" fill="#ff00ff"/>
<rect x="940" y="253" width="1" height="1" fill="#ff00ff"/>
<rect x="941" y="253" width="1" height="1" fill="#ff00ff"/>
<rect x="942" y="253" width="1" height="1" fill="#ff00ff"/>
<rect x="943" y="253" width="1" height="1" fill="#ff00ff"/>
<rect x="944" y="253" width="1" height="1" fill="#ff00ff"/>
<rect x="29" y="253" width="2" height="1" fill="#ffff00"/>
<rect x="36" y="253" width="2" height="1" fill="#000"/>
<rect x="50" y="253" width="2" height="1" fill="#ffff00"/>
<rect x="127" y="253" width="2" height="1" fill="#000"/>
<rect x="134" y="253" width="2" height="1" fill="#ffff00"/>
<rect x="141" y="253" width="2" height="1" fill="#ffff00"/>
<rect x="190" y="253" width="2" height="1" fill="#000"/>
<rect x="197" y="253" width="2" height="1" fill="#000"/>
<rect x="204" y="253" width="2" height="1" fill="#ffff00"/>
<rect x="211" y="253" width="2" height="1" fill="#000"/>
<rect x="218" y="253" width="2" height="1" fill="#ffff00"/>
<rect x="729" y="253" width="2" height="1" fill="#ffff00"/>
<rect x="736" y="253" width="2" height="1" fill="#ffff00"/>
<rect x="743" y="253" width="2" height="1" fill="#000"/>
<rect x="750" y="253" width="2" height="1" fill="#000"/>
<rect x="757" y="253" width="2" height="1" fill="#000"/>
<rect x="785" y="253" width="2" height="1" fill="#000"/>
<rect x="813" y="253" width="2" height="1" fill="#ffff00"/>
<rect x="820" y="253" width="2" height="1" fill="#ffff00"/>
<rect x="827" y="253" width="2" height="1" fill="#000"/>
<rect x="834" y="253" width="2" height="1" fill="#000"/>
<path fill="#0000ff" d="M30 624h1V688h-1zM44 620h1V688h-1zM51 620h1V688h-1zM58 620h1V688h-1zM65 627h1V688h-1zM86 623h1V688h-1zM93 633h1V688h-1zM100 549h1V688h-1zM107 497h1V688h-1zM135 609h1V688h-1zM142 616h1V688h-1zM149 606h1V688h-1zM170 627h1V688h-1zM177 639h1V688h-1zM205 618h1V688h-1zM219 600h1V688h-1zM233 638h1V688h-1zM247 617h1V688h-1zM268 629h1V688h-1zM303 632h1V688h-1zM317 626h1V688h-1zM338 633h1V688h-1zM345 635h1V688h-1zM352 605h1V688h-1zM373 603h1V688h-1zM394 579h1V688h-1zM422 625h1V688h-1zM450 585h1V688h-1zM457 604h1V688h-1zM464 632h1V688h-1zM520 572h1V688h-1zM534 622h1V688h-1zM541 621h1V688h-1zM548 569h1V688h-1zM555 551h1V688h-1zM562 595h1V688h-1zM583 606h1V688h-1zM590 611h1V688h-1zM604 604h1V688h-1zM611 600h1V688h-1zM625 592h1V688h-1zM632 592h1V688h-1zM646 614h1V688h-1zM653 629h1V688h-1zM660 629h1V688h-1zM667 565h1V688h-1zM681 642h1V688h-1zM723 559h1V688h-1zM730 567h1V688h-1zM737 620h1V688h-1zM765 614h1V688h-1zM772 611h1V688h-1zM807 568h1V688h-1zM814 575h1V688h-1zM821 619h1V688h-1zM856 620h1V688h-1zM863 637h1V688h-1zM870 649h1V688h-1zM912 604h1V688h-1zM919 619h1V688h-1zM926 606h1V688h-1zM940 630h1V688h-1zM954 608h1V688h-1z"/>
<path fill="#ff0000" d="M9 638h1V688h-1zM16 621h1V688h-1zM23 643h1V688h-1zM37 620h1V688h-1zM72 622h1V688h-1zM79 585h1V688h-1zM114 595h1V688h-1zM121 606h1V688h-1zM128 614h1V688h-1zM156 626h1V688h-1zM163 636h1V688h-1zM184 620h1V688h-1zM191 618h1V688h-1zM198 647h1V688h-1zM212 597h1V688h-1zM226 592h1V688h-1zM240 602h1V688h-1zM254 632h1V688h-1zM261 631h1V688h-1zM275 620h1V688h-1zM282 617h1V688h-1zM289 641h1V688h-1zM296 633h1V688h-1zM310 626h1V688h-1zM324 614h1V688h-1zM331 639h1V688h-1zM359 538h1V688h-1zM366 613h1V688h-1zM380 599h1V688h-1zM387 611h1V688h-1zM401 632h1V688h-1zM408 625h1V688h-1zM415 615h1V688h-1zM429 627h1V688h-1zM436 610h1V688h-1zM443 602h1V688h-1zM471 615h1V688h-1zM478 608h1V688h-1zM485 620h1V688h-1zM492 596h1V688h-1zM499 643h1V688h-1zM506 631h1V688h-1zM513 626h1V688h-1zM527 586h1V688h-1zM569 593h1V688h-1zM576 608h1V688h-1zM597 625h1V688h-1zM618 560h1V688h-1zM639 633h1V688h-1zM674 628h1V688h-1zM688 632h1V688h-1zM695 613h1V688h-1zM702 630h1V688h-1zM709 630h1V688h-1zM716 636h1V688h-1zM744 570h1V688h-1zM751 604h1V688h-1zM758 613h1V688h-1zM779 617h1V688h-1zM786 612h1V688h-1zM793 590h1V688h-1zM800 531h1V688h-1zM828 526h1V688h-1zM835 584h1V688h-1zM842 580h1V688h-1zM849 621h1V688h-1zM877 664h1V688h-1zM884 645h1V688h-1zM891 649h1V688h-1zM898 649h1V688h-1zM905 641h1V688h-1zM933 620h1V688h-1zM947 618h1V688h-1zM961 607h1V688h-1zM968 619h1V688h-1zM975 554h1V688h-1z"/>
<path d="M10.3 713 L33.4 710.4 L61.7 695 L69.4 694.5 L77 696.3 L92.5 696.3 L100 695 L108 698.9 L123.4 714.3 L131 716.3 L138.8 714.8 L149 711.7 L162 707.9 L177.4 697 L185 698.9 L195.4 707.9 L203 711.7 L218.5 709.7 L226 711.7 L241.6 715.6 L267.4 715.6 L295.6 716.3 L303.3 713 L316.2 709.7 L326.5 712.5 L332.9 713 L343 709.7 L352 699.4 L358.6 702.7 L366.3 710.4 L374 716.3 L386.8 716.3 L397 713.8 L404.8 713 L417.7 714.8 L435.7 714.3 L446 716.3 L456.2 713.8 L471.7 702.7 L479.4 702.7 L489.7 707.9 L505 713.8 L515.4 715.6 L533.4 713 L546.2 709.1 L559 702.7 L564.2 702 L577 707.9 L587.4 711.2 L600 713 L610.5 709.1 L631 705.3 L641.3 696.3 L646.4 694.5 L670.8 694.5 L691.4 696.8 L706.8 699.4 L722.3 697.6 L742.8 696.3 L755.7 697.6 L778.8 696.3 L786.5 701.4 L800.7 712.2 L808.4 711.2 L822.5 703.5 L835.4 702.2 L845.7 703.5 L858.5 707.9 L876.5 710.4 L889.4 714.3 L902.2 716.3 L911.2 714.8 L920.2 705.3 L927.9 699.4 L940.8 697 L956.2 700.1 L970 705.3 L975 706.5" fill="none" stroke="#0000ff" stroke-width="1.05" shape-rendering="auto"/>
<path d="M10.3 713.8 L38.6 710.4 L72 695.8 L102.8 695.8 L113 700 L128.5 711.7 L137.5 715.6 L154 713 L169.7 707.9 L185 698.9 L195.4 702.7 L208 710.4 L231 711.7 L246.8 714.8 L262 716.3 L295.6 716.1 L308.5 713 L321 710.4 L335.4 712.2 L345.7 709.7 L358.6 704 L366.3 704 L379 713 L388 716.3 L404.8 713 L422.8 714.3 L443.4 715.6 L458.8 714.8 L471.7 707.9 L480.7 703.5 L487 704 L505 711.7 L518 714.8 L536 713.8 L551.4 709.1 L566.8 702.7 L574.5 704 L587.4 709.1 L602.8 712.2 L618 709.1 L633.6 706.1 L650.3 695.8 L663 694.2 L686.3 695.8 L709.4 699.4 L730 697 L742.8 696.3 L760.8 697.6 L781.4 696.3 L791.7 700.9 L807 711.2 L814.8 711.2 L830 705.3 L843 702.7 L861 707.1 L879 710.4 L894.5 714.3 L904.8 716.3 L915 713.8 L925.3 707.9 L935.6 700.1 L945.9 697.6 L958.8 700.1 L970 704 L975 705" fill="none" stroke="#ff0000" stroke-width="1.05" shape-rendering="auto"/>
<rect x="401" y="131" width="1" height="587" fill="#ff0000"/>
<rect x="401" y="349" width="1" height="25" fill="#000"/>
<rect x="401" y="632" width="1" height="56" fill="#000"/>
<rect x="401" y="253" width="1" height="1" fill="#000"/>
<rect x="401" y="139" width="1" height="1" fill="#00ffff"/>
<rect x="401" y="190" width="1" height="1" fill="#00ffff"/>
<rect x="401" y="241" width="1" height="1" fill="#00ffff"/>
<rect x="401" y="292" width="1" height="1" fill="#00ffff"/>
<rect x="401" y="342" width="1" height="1" fill="#00ffff"/>
<rect x="401" y="393" width="1" height="1" fill="#00ffff"/>
<rect x="401" y="444" width="1" height="1" fill="#00ffff"/>
<rect x="401" y="165" width="1" height="1" fill="#00ffff"/>
<rect x="401" y="215" width="1" height="1" fill="#00ffff"/>
<rect x="401" y="266" width="1" height="1" fill="#00ffff"/>
<rect x="401" y="317" width="1" height="1" fill="#00ffff"/>
<rect x="401" y="418" width="1" height="1" fill="#00ffff"/>
<rect x="401" y="469" width="1" height="1" fill="#00ffff"/>
<rect x="401" y="500" width="1" height="1" fill="#00ffff"/>
<rect x="401" y="538" width="1" height="1" fill="#00ffff"/>
<rect x="401" y="576" width="1" height="1" fill="#00ffff"/>
<rect x="401" y="614" width="1" height="1" fill="#00ffff"/>
<rect x="401" y="519" width="1" height="1" fill="#00ffff"/>
<rect x="401" y="557" width="1" height="1" fill="#00ffff"/>
<rect x="401" y="595" width="1" height="1" fill="#00ffff"/>
<rect x="2" y="482" width="1208" height="2" fill="#ffffff"/>
<rect x="2" y="484" width="1208" height="1" fill="#ece9d8"/>
<rect x="2" y="485" width="1208" height="1" fill="#808080"/>
<rect x="2" y="688" width="1208" height="2" fill="#ffffff"/>
<rect x="2" y="690" width="1208" height="1" fill="#ece9d8"/>
<rect x="2" y="691" width="1208" height="1" fill="#808080"/>
<rect x="23" y="716" width="1" height="2" fill="#fff"/>
<rect x="30" y="716" width="1" height="2" fill="#fff"/>
<rect x="58" y="716" width="1" height="2" fill="#fff"/>
<rect x="93" y="716" width="1" height="2" fill="#fff"/>
<rect x="128" y="716" width="1" height="2" fill="#fff"/>
<rect x="163" y="716" width="1" height="2" fill="#fff"/>
<rect x="198" y="716" width="1" height="2" fill="#fff"/>
<rect x="233" y="716" width="1" height="2" fill="#fff"/>
<rect x="268" y="716" width="1" height="2" fill="#fff"/>
<rect x="303" y="716" width="1" height="2" fill="#fff"/>
<rect x="324" y="716" width="1" height="2" fill="#fff"/>
<rect x="338" y="716" width="1" height="2" fill="#fff"/>
<rect x="366" y="716" width="1" height="2" fill="#fff"/>
<rect x="401" y="716" width="1" height="2" fill="#fff"/>
<rect x="436" y="716" width="1" height="2" fill="#fff"/>
<rect x="471" y="716" width="1" height="2" fill="#fff"/>
<rect x="506" y="716" width="1" height="2" fill="#fff"/>
<rect x="541" y="716" width="1" height="2" fill="#fff"/>
<rect x="576" y="716" width="1" height="2" fill="#fff"/>
<rect x="611" y="716" width="1" height="2" fill="#fff"/>
<rect x="618" y="716" width="1" height="2" fill="#fff"/>
<rect x="646" y="716" width="1" height="2" fill="#fff"/>
<rect x="681" y="716" width="1" height="2" fill="#fff"/>
<rect x="716" y="716" width="1" height="2" fill="#fff"/>
<rect x="744" y="716" width="1" height="2" fill="#fff"/>
<rect x="765" y="716" width="1" height="2" fill="#fff"/>
<rect x="779" y="716" width="1" height="2" fill="#fff"/>
<rect x="814" y="716" width="1" height="2" fill="#fff"/>
<rect x="849" y="716" width="1" height="2" fill="#fff"/>
<rect x="884" y="716" width="1" height="2" fill="#fff"/>
<rect x="912" y="716" width="1" height="2" fill="#fff"/>
<rect x="940" y="716" width="1" height="2" fill="#fff"/>
<rect x="975" y="716" width="1" height="2" fill="#fff"/>
<rect x="1210" y="131" width="1" height="588" fill="#fff"/>
<rect x="2" y="718" width="1209" height="1" fill="#fff"/>
</svg>
<div class="axl" style="top:133.1px">29.00</div>
<div class="axl" style="top:184.1px">28.00</div>
<div class="axl" style="top:235.1px">27.00</div>
<div class="axl" style="top:286.1px">26.00</div>
<div class="axl" style="top:336.1px">25.00</div>
<div class="axl" style="top:387.1px">24.00</div>
<div class="axl" style="top:438.1px">23.00</div>
<div class="axl" style="top:493.7px">125M</div>
<div class="axl" style="top:531.7px">100M</div>
<div class="axl" style="top:569.7px">75M</div>
<div class="axl" style="top:607.7px">50M</div>
<div class="axl" style="top:645.7px">25M</div>
<div class="axl" style="top:675.500px">0</div>
<div class="abs" style="left:1211px;top:245px;width:67px;height:16px;background:#c0c0c0"></div>
<div class="t" style="left:1211px;top:247px;font-family:'Liberation Serif',serif;font-weight:bold;font-size:14px">26.7498</div>
<div class="abs" style="left:1211px;top:308px;width:32px;height:16px;background:#ff0000"></div>
<div class="t" style="left:1211px;top:310px;font-family:'Liberation Serif',serif;font-weight:bold;font-size:14px">25.52</div>
<div class="abs" style="left:1211px;top:546px;width:66px;height:16px;background:#ff0000"></div>
<div class="t" style="left:1211px;top:548px;font-family:'Liberation Serif',serif;font-weight:bold;font-size:14px">89.04332M</div>
<div class="abs" style="left:1211px;top:696px;width:32px;height:16px;background:#ff0000"></div>
<div class="abs" style="left:1211px;top:712px;width:32px;height:3px;background:#0000ff"></div>
<div class="t" style="left:1211px;top:698px;font-family:'Liberation Serif',serif;font-weight:bold;font-size:14px">57.88</div>
<div class="abs" style="left:2px;top:150px;width:263px;height:16px;background:#c3c3c3;border-top:2px solid #fff;border-bottom:1px solid #808080"></div>
<div class="t" style="left:6.5px;top:153.7px;font-size:9.7px;letter-spacing:0.363px">O: 25.60</div>
<div class="t" style="left:58.5px;top:153.7px;font-size:9.7px;letter-spacing:0.297px">H: 25.75</div>
<div class="t" style="left:110px;top:153.7px;font-size:9.7px;letter-spacing:0.384px">L: 25.32</div>
<div class="t" style="left:160px;top:153.7px;font-size:9.7px;letter-spacing:0.268px">C: 25.52</div>
<div class="abs" style="left:206px;top:152px;width:59px;height:12px;background:#ff0000"></div>
<div class="t" style="left:210.6px;top:153.7px;font-size:9.7px;letter-spacing:0.274px">Net: -0.27</div>
<div class="t" style="left:264.3px;top:150.5px;color:#fff;font-weight:bold;font-size:12.5px;letter-spacing:0.164px">|91,13395609,255,16711680,2,false)</div>
<div class="abs" style="left:5px;top:410px;width:24px;height:13px;background:#00b8b8"></div>
<div class="t" style="left:6px;top:411px;font-size:11px">HBH</div>
<div class="abs" style="left:3px;top:424px;width:28px;height:16px;background:#ece9d8;border:1px solid;border-color:#fff #716f64 #716f64 #fff"></div>
<div class="t" style="left:14px;top:426px;font-size:11px;font-weight:bold">?</div>
<div class="t" style="left:4.7px;top:473.5px;font-size:8.6px;color:#fff;letter-spacing:-0.178px">Copyright © 2005 eSignal.</div>
<div class="dl" style="left:30px;top:721px">5</div>
<div class="dl" style="left:58px;top:721px">11</div>
<div class="dl" style="left:93px;top:721px">18</div>
<div class="dl" style="left:128px;top:721px">25</div>
<div class="dl" style="left:163px;top:721px">1</div>
<div class="dl" style="left:198px;top:721px">8</div>
<div class="dl" style="left:233px;top:721px">15</div>
<div class="dl" style="left:268px;top:721px">22</div>
<div class="dl" style="left:303px;top:721px">29</div>
<div class="dl" style="left:338px;top:721px">6</div>
<div class="dl" style="left:366px;top:721px">12</div>
<div class="dl" style="left:436px;top:721px">26</div>
<div class="dl" style="left:471px;top:721px">3</div>
<div class="dl" style="left:506px;top:721px">10</div>
<div class="dl" style="left:541px;top:721px">17</div>
<div class="dl" style="left:576px;top:721px">24</div>
<div class="dl" style="left:611px;top:721px">31</div>
<div class="dl" style="left:646px;top:721px">7</div>
<div class="dl" style="left:681px;top:721px">14</div>
<div class="dl" style="left:716px;top:721px">21</div>
<div class="dl" style="left:744px;top:721px">28</div>
<div class="dl" style="left:779px;top:721px">5</div>
<div class="dl" style="left:814px;top:721px">12</div>
<div class="dl" style="left:849px;top:721px">19</div>
<div class="dl" style="left:884px;top:721px">27</div>
<div class="dl" style="left:912px;top:721px">3</div>
<div class="dl" style="left:940px;top:721px">9</div>
<div class="dl" style="left:975px;top:721px">17</div>
<div class="dl" style="left:23px;top:737px">Jul</div>
<div class="dl" style="left:163px;top:737px">Aug</div>
<div class="dl" style="left:324px;top:737px">Sep</div>
<div class="dl" style="left:471px;top:737px">Oct</div>
<div class="dl" style="left:618px;top:737px">Nov</div>
<div class="dl" style="left:765px;top:737px">Dec</div>
<div class="dl" style="left:912px;top:737px">2006</div>
<div class="abs" style="left:371px;top:719px;width:60px;height:16px;background:#c0c0c0"></div>
<div class="t" style="left:375px;top:721px;font-family:'Liberation Serif',serif;font-weight:bold;font-size:14px">09/19/05</div>
<div class="abs" style="left:0;top:130px;width:1px;height:622px;background:#ece9d8"></div>
<div class="abs" style="left:1px;top:130px;width:1px;height:622px;background:#808080"></div>
<div class="abs" style="left:0;top:130px;width:1280px;height:1px;background:#808080"></div>
<div class="abs" style="left:1278px;top:131px;width:2px;height:621px;background:#fff"></div>
<div class="abs" style="left:0;top:750px;width:1280px;height:2px;background:#fff"></div>
<div class="abs" style="left:0;top:752px;width:1280px;height:1px;background:#aca899"></div>
<div class="t" style="left:3px;top:756.5px;font-size:11px;letter-spacing:-0.077px">Wed Jan 18 00:55:22</div>
<div class="abs" style="left:1034px;top:754px;width:32px;height:15px;background:#c4c4c0"></div>
<div class="abs" style="left:1067px;top:754px;width:1px;height:15px;background:#fff"></div>
<div class="abs" style="left:1070px;top:754px;width:28px;height:15px;background:#c4c4c0"></div>
<div class="abs" style="left:1099px;top:754px;width:1px;height:15px;background:#fff"></div>
<div class="abs" style="left:1102px;top:754px;width:57px;height:15px;background:#c4c4c0"></div>
<div class="abs" style="left:1160px;top:754px;width:1px;height:15px;background:#fff"></div>
<div class="abs" style="left:1163px;top:754px;width:51px;height:15px;background:#00ff00"></div>
<div class="abs" style="left:1215px;top:754px;width:1px;height:15px;background:#fff"></div>
<div class="abs" style="left:1218px;top:754px;width:43px;height:15px;background:#00ff00"></div>
<div class="abs" style="left:1262px;top:754px;width:1px;height:15px;background:#fff"></div>
<div class="t" style="left:1111.5px;top:756.5px;font-size:11px;letter-spacing:-0.559px">Sym 27</div>
<div class="t" style="left:1180px;top:756.5px;font-size:11px">OK</div>
<div class="t" style="left:1231px;top:756.5px;font-size:11px">OK</div>
<svg class="abs" style="left:1264px;top:755px" width="15" height="15" viewBox="0 0 15 15"><path d="M14 3L3 14M14 7L7 14M14 11L11 14" stroke="#aca899" stroke-width="1.5"/><path d="M15 4L4 15M15 8L8 15M15 12L12 15" stroke="#fff" stroke-width="1"/></svg>
<div class="abs" style="left:0;top:770px;width:106px;height:4px;background:linear-gradient(#3a9a3a,#3a9a3a 50%,#7cc07c 50%)"></div>
<div class="abs" style="left:106px;top:770px;width:938px;height:4px;background:#2a62e6"></div>
<div class="abs" style="left:1044px;top:770px;width:237px;height:4px;background:#1c9cf0"></div>
</body></html>
